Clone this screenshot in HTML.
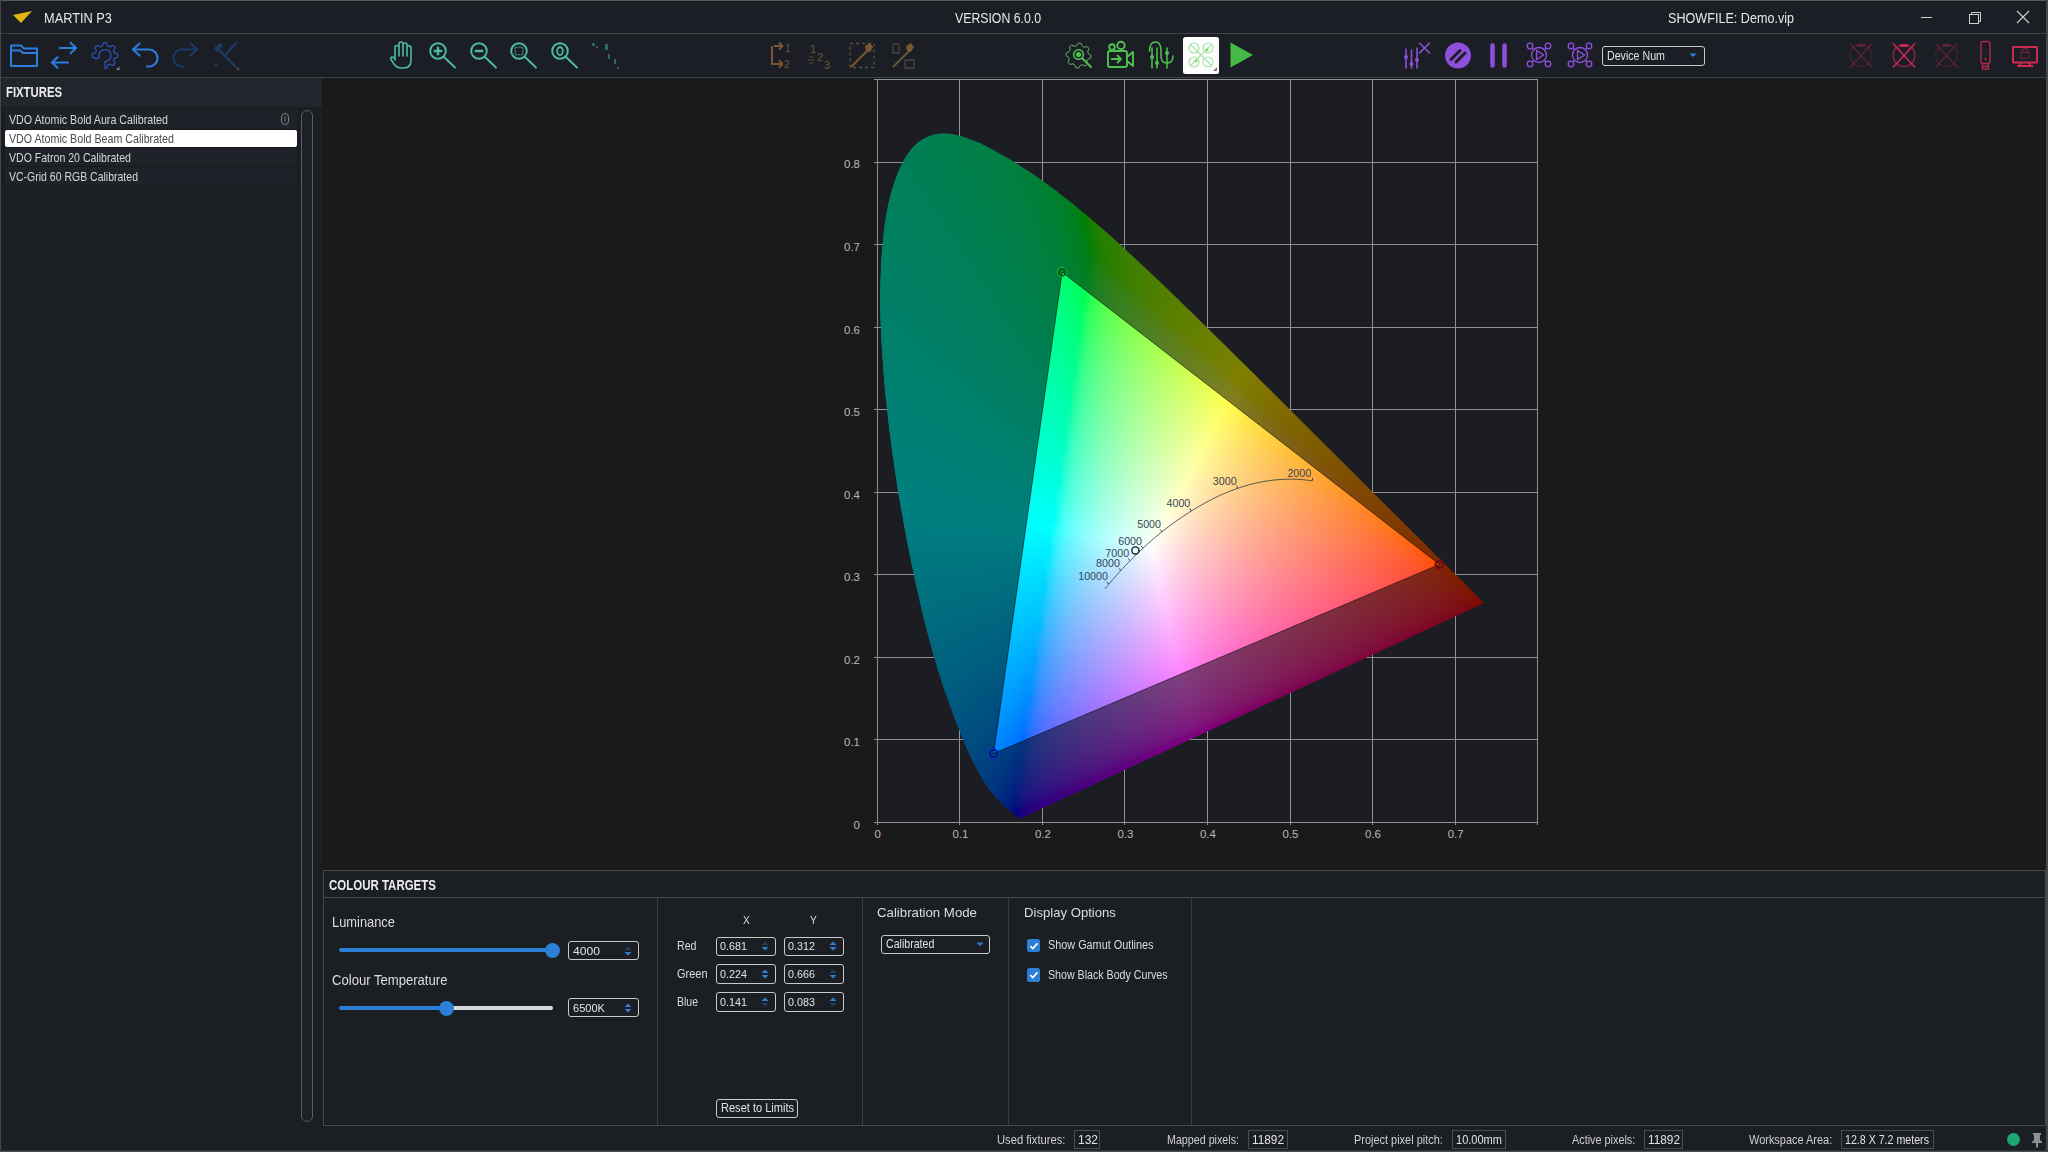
<!DOCTYPE html>
<html><head><meta charset="utf-8"><style>
html,body{margin:0;padding:0;width:2048px;height:1152px;overflow:hidden;background:#1b1e23}
.r,.t{position:absolute}
.fld{position:absolute;left:0;top:0;width:100%;height:100%}
.fld i{position:absolute;height:4px;display:block}
.t{font-family:"Liberation Sans",sans-serif;line-height:1;white-space:nowrap;transform-origin:0 0}
</style></head><body>
<div class="r" style="left:0px;top:0px;width:2048px;height:1152px;background:#1b1e23"></div>
<div class="r" style="left:0px;top:0px;width:2048px;height:1px;background:#55585d"></div>
<div class="r" style="left:0px;top:0px;width:1px;height:1152px;background:#45484d"></div>
<div class="r" style="left:2046px;top:0px;width:2px;height:1152px;background:#45484d"></div>
<div class="r" style="left:0px;top:1150px;width:2048px;height:1px;background:#2c2f36"></div>
<div class="r" style="left:0px;top:1151px;width:2048px;height:1px;background:#4a4d54"></div>
<div class="r" style="left:1px;top:1px;width:2045px;height:32px;background:#1b1e24"></div>
<div class="r" style="left:1px;top:33px;width:2045px;height:1px;background:#3e4146"></div>
<div class="r" style="left:1px;top:34px;width:2045px;height:43px;background:#1b1e24"></div>
<div class="r" style="left:1px;top:77px;width:2045px;height:1px;background:#3e4146"></div>
<svg class="r" style="left:12px;top:9px" width="22" height="16" viewBox="0 0 22 16"><path d="M1 6 L20 2 L9 14 Z" fill="#e3b416"/></svg>
<div class="t" style="left:44.0px;top:10.9px;font-size:14.29px;color:#e6e6e6;transform:scaleX(0.895);">MARTIN P3</div>
<div class="t" style="left:955.0px;top:10.9px;font-size:14.29px;color:#e6e6e6;transform:scaleX(0.860);">VERSION 6.0.0</div>
<div class="t" style="left:1668.0px;top:10.9px;font-size:14.29px;color:#e6e6e6;transform:scaleX(0.882);">SHOWFILE: Demo.vip</div>
<div class="r" style="left:1921px;top:17px;width:11px;height:1px;background:#d0d0d0"></div>
<svg class="r" style="left:1966px;top:9px" width="18" height="18" viewBox="0 0 18 18"><path d="M5.5 5.5V3.5H14.5V12.5H12.5" fill="none" stroke="#d0d0d0" stroke-width="1"/><rect x="3.5" y="5.5" width="9" height="9" fill="none" stroke="#d0d0d0" stroke-width="1"/></svg>
<svg class="r" style="left:2014px;top:8px" width="18" height="18" viewBox="0 0 18 18"><path d="M3 3L15 15M15 3L3 15" stroke="#d0d0d0" stroke-width="1.1"/></svg>
<svg class="r" style="left:0;top:0" width="2048" height="80"><g fill="none" stroke="#2b7de0" stroke-width="2" stroke-linejoin="round"><path d="M11 45.5H21L24 48.5H37V66H11Z"/><path d="M11 50.5H20L23 53H36"/></g><g fill="none" stroke="#2b7de0" stroke-width="2.2" stroke-linecap="round" stroke-linejoin="round"><path d="M60 48H76M70.5 42.8L76 48L70.5 53.2"/><path d="M68 62.5H52M57.5 57.3L52 62.5L57.5 67.7"/></g><path d="M95.79 58.85 L95.75 58.74 L95.71 58.62 L95.67 58.50 L95.63 58.38 L95.60 58.26 L95.53 58.15 L95.26 58.09 L95.00 58.03 L94.73 57.96 L94.47 57.88 L94.20 57.80 L93.94 57.71 L93.67 57.62 L93.41 57.51 L93.14 57.40 L92.88 57.29 L92.62 57.17 L92.36 57.04 L92.28 56.89 L92.26 56.73 L92.24 56.57 L92.23 56.40 L92.22 56.24 L92.21 56.08 L92.21 55.92 L92.20 55.76 L92.20 55.59 L92.20 55.43 L92.20 55.27 L92.21 55.11 L92.21 54.95 L92.22 54.79 L92.23 54.62 L92.24 54.46 L92.26 54.30 L92.27 54.14 L92.32 53.98 L92.58 53.85 L92.84 53.73 L93.10 53.61 L93.36 53.51 L93.63 53.40 L93.89 53.31 L94.15 53.21 L94.42 53.13 L94.69 53.05 L94.95 52.98 L95.22 52.92 L95.49 52.86 L95.59 52.76 L95.63 52.64 L95.66 52.52 L95.70 52.40 L95.74 52.29 L95.78 52.17 L95.83 52.05 L95.87 51.94 L95.92 51.82 L95.96 51.71 L96.01 51.59 L96.06 51.48 L96.11 51.37 L96.17 51.25 L96.22 51.14 L96.28 51.03 L96.34 50.92 L96.39 50.81 L96.44 50.70 L96.29 50.47 L96.15 50.23 L96.01 50.00 L95.88 49.75 L95.75 49.51 L95.62 49.26 L95.50 49.00 L95.39 48.74 L95.28 48.48 L95.17 48.21 L95.07 47.94 L94.98 47.67 L95.01 47.49 L95.12 47.37 L95.22 47.24 L95.33 47.12 L95.43 47.00 L95.54 46.88 L95.65 46.76 L95.76 46.64 L95.87 46.52 L95.99 46.41 L96.10 46.30 L96.22 46.18 L96.34 46.07 L96.46 45.97 L96.58 45.86 L96.70 45.75 L96.83 45.65 L96.95 45.55 L97.09 45.45 L97.36 45.54 L97.63 45.64 L97.90 45.74 L98.16 45.85 L98.42 45.97 L98.68 46.08 L98.93 46.21 L99.18 46.33 L99.42 46.47 L99.66 46.60 L99.90 46.75 L100.13 46.89 L100.28 46.91 L100.39 46.85 L100.50 46.80 L100.61 46.74 L100.72 46.68 L100.83 46.63 L100.94 46.58 L101.06 46.53 L101.17 46.48 L101.29 46.43 L101.40 46.39 L101.52 46.34 L101.63 46.30 L101.75 46.25 L101.87 46.21 L101.98 46.18 L102.10 46.14 L102.22 46.10 L102.34 46.07 L102.40 45.80 L102.46 45.54 L102.53 45.27 L102.61 45.00 L102.69 44.74 L102.78 44.47 L102.87 44.21 L102.97 43.94 L103.08 43.68 L103.19 43.42 L103.31 43.16 L103.44 42.90 L103.59 42.78 L103.75 42.76 L103.91 42.75 L104.07 42.73 L104.24 42.72 L104.40 42.71 L104.56 42.71 L104.72 42.70 L104.88 42.70 L105.04 42.70 L105.21 42.70 L105.37 42.71 L105.53 42.71 L105.69 42.72 L105.85 42.73 L106.02 42.74 L106.18 42.75 L106.34 42.77 L106.50 42.79 L106.63 43.04 L106.75 43.30 L106.87 43.56 L106.98 43.83 L107.08 44.09 L107.18 44.35 L107.27 44.62 L107.36 44.88 L107.44 45.15 L107.51 45.42 L107.58 45.68 L107.64 45.95 L107.73 46.09 L107.84 46.12 L107.96 46.16 L108.08 46.20 L108.20 46.24 L108.32 46.28 L108.43 46.32 L108.55 46.36 L108.66 46.41 L108.78 46.46 L108.89 46.51 L109.01 46.56 L109.12 46.61 L109.23 46.66 L109.34 46.71 L109.45 46.77 L109.56 46.83 L109.67 46.89 L109.78 46.95 L110.00 46.81 L110.23 46.67 L110.47 46.53 L110.71 46.39 L110.96 46.26 L111.21 46.14 L111.46 46.02 L111.72 45.90 L111.98 45.79 L112.25 45.69 L112.52 45.59 L112.79 45.49 L112.99 45.50 L113.12 45.60 L113.24 45.71 L113.36 45.81 L113.49 45.92 L113.61 46.03 L113.73 46.13 L113.84 46.25 L113.96 46.36 L114.07 46.47 L114.19 46.59 L114.30 46.71 L114.41 46.82 L114.52 46.94 L114.63 47.06 L114.73 47.19 L114.84 47.31 L114.94 47.44 L115.04 47.56 L114.97 47.82 L114.87 48.09 L114.77 48.36 L114.66 48.63 L114.55 48.89 L114.43 49.14 L114.31 49.40 L114.18 49.64 L114.05 49.89 L113.91 50.13 L113.77 50.36 L113.63 50.59 L113.58 50.76 L113.64 50.87 L113.70 50.98 L113.75 51.09 L113.81 51.20 L113.86 51.32 L113.91 51.43 L113.96 51.54 L114.01 51.66 L114.06 51.77 L114.11 51.88 L114.15 52.00 L114.20 52.12 L114.24 52.23 L114.28 52.35 L114.32 52.47 L114.36 52.59 L114.39 52.70 L114.43 52.82 L114.66 52.89 L114.93 52.95 L115.19 53.02 L115.46 53.09 L115.73 53.18 L115.99 53.26 L116.26 53.36 L116.52 53.46 L116.78 53.57 L117.05 53.68 L117.31 53.80 L117.57 53.92 L117.72 54.07 L117.74 54.23 L117.75 54.39 L117.76 54.55 L117.78 54.71 L117.78 54.87 L117.79 55.04 L117.80 55.20 L117.80 55.36 L117.80 55.52 L117.80 55.68 L117.80 55.85 L117.79 56.01 L117.78 56.17 L117.77 56.33 L117.76 56.49 L117.75 56.65 L117.73 56.82 L117.71 56.98 L117.50 57.11 L117.24 57.24 L116.97 57.35 L116.71 57.47 L116.45 57.57 L116.18 57.67 L115.92 57.76 L115.65 57.85 L115.39 57.93 L115.12 58.00 L114.85 58.07 L114.59 58.13 L114.42 58.21 L114.38 58.33 L114.35 58.45 L114.31 58.56 L114.27 58.68 L114.23 58.80 L114.19 58.92 L114.14 59.03 L114.10 59.15 L114.05 59.26 L114.00 59.38 L113.95 59.49 L113.90 59.60 L113.85 59.72 L113.79 59.83 L113.74 59.94 L113.68 60.05 L113.62 60.16 L113.56 60.27 L113.67 60.47 L113.81 60.70 L113.95 60.94 L114.09 61.18 L114.22 61.42 L114.34 61.67 L114.47 61.93 L114.58 62.18 L114.69 62.45 L114.80 62.71 L114.90 62.98 L115.00 63.25 L115.01 63.47 L114.91 63.60 L114.81 63.72 L114.70 63.85 L114.60 63.97 L114.49 64.09 L114.38 64.21 L114.27 64.33 L114.16 64.44 L114.04 64.56 L113.93 64.67 L113.81 64.78 L113.69 64.90 L113.57 65.00 L113.45 65.11 L113.33 65.22 L113.21 65.32 L113.08 65.43 L112.96 65.53 L112.72 65.48 L112.44 65.39 L112.17 65.28 L111.91 65.18 L111.65 65.07 L111.39 64.95 L111.14 64.83 L110.89 64.70 L110.65 64.57 L110.41 64.43 L110.17 64.29 L109.94 64.15 L109.75 64.07 L109.64 64.13 L109.53 64.19 L109.42 64.25 L109.31 64.30 L109.20 64.35 L109.09 64.41 L108.97 64.46 L108.86 64.51 L108.75 64.56 L108.63 64.60 L108.52 64.65 L108.40 64.69 L108.28 64.73 L108.17 64.77 L108.05 64.81 L107.93 64.85 L107.81 64.89 L107.69 64.92 L107.62 65.12 L107.56 65.39 L107.49 65.66 L107.42 65.92 L107.34 66.19 L107.25 66.45 L107.16 66.72 L107.06 66.98 L106.95 67.25 L106.84 67.51 L106.72 67.77 L106.59 68.03 L106.45 68.22 L106.29 68.23 L106.13 68.25 L105.97 68.26 L105.81 68.27 L105.65 68.28 L105.49 68.29 L105.32 68.30 L105.16 68.30 L105.00 68.30 L105.00 61.50 L105.08 61.50 L105.15 61.50 L105.23 61.50 L105.30 61.49 L105.38 61.49 L105.46 61.48 L105.53 61.48 L105.61 61.47 L105.68 61.46 L105.76 61.45 L105.83 61.44 L105.91 61.43 L105.98 61.42 L106.06 61.41 L106.13 61.39 L106.21 61.38 L106.28 61.36 L106.35 61.35 L106.43 61.33 L106.50 61.31 L106.58 61.29 L106.65 61.27 L106.72 61.25 L106.79 61.23 L106.87 61.20 L106.94 61.18 L107.01 61.15 L107.08 61.13 L107.15 61.10 L107.22 61.07 L107.29 61.04 L107.36 61.01 L107.43 60.98 L107.50 60.95 L107.57 60.92 L107.64 60.89 L107.71 60.85 L107.78 60.82 L107.84 60.78 L107.91 60.75 L107.98 60.71 L108.04 60.67 L108.11 60.63 L108.17 60.59 L108.23 60.55 L108.30 60.51 L108.36 60.47 L108.42 60.43 L108.49 60.38 L108.55 60.34 L108.61 60.29 L108.67 60.25 L108.73 60.20 L108.79 60.15 L108.85 60.10 L108.90 60.06 L108.96 60.01 L109.02 59.96 L109.07 59.90 L109.13 59.85 L109.18 59.80 L109.24 59.75 L109.29 59.69 L109.35 59.64 L109.40 59.58 L109.45 59.53 L109.50 59.47 L109.55 59.41 L109.60 59.35 L109.65 59.30 L109.69 59.24 L109.74 59.18 L109.79 59.12 L109.83 59.06 L109.88 58.99 L109.92 58.93 L109.96 58.87 L110.01 58.81 L110.05 58.74 L110.09 58.68 L110.13 58.61 L110.17 58.55 L110.21 58.48 L110.24 58.42 L110.28 58.35 L110.31 58.28 L110.35 58.22 L110.38 58.15 L110.42 58.08 L110.45 58.01 L110.48 57.94 L110.51 57.87 L110.54 57.80 L110.57 57.73 L110.60 57.66 L110.62 57.59 L110.65 57.52 L110.67 57.45 L110.70 57.38 L110.72 57.30 L110.74 57.23 L110.77 57.16 L110.79 57.09 L110.81 57.01 L110.82 56.94 L110.84 56.87 L110.86 56.79 L110.88 56.72 L110.89 56.64 L110.90 56.57 L110.92 56.49 L110.93 56.42 L110.94 56.34 L110.95 56.27 L110.96 56.19 L110.97 56.12 L110.98 56.04 L110.98 55.97 L110.99 55.89 L110.99 55.81 L111.00 55.74 L111.00 55.66 L111.00 55.59 L111.00 55.51 L111.00 55.43 L111.00 55.36 L111.00 55.28 L110.99 55.21 L110.99 55.13 L110.98 55.06 L110.98 54.98 L110.97 54.90 L110.96 54.83 L110.95 54.75 L110.94 54.68 L110.93 54.60 L110.92 54.53 L110.91 54.45 L110.89 54.38 L110.88 54.30 L110.86 54.23 L110.85 54.16 L110.83 54.08 L110.81 54.01 L110.79 53.93 L110.77 53.86 L110.75 53.79 L110.73 53.72 L110.71 53.64 L110.68 53.57 L110.66 53.50 L110.63 53.43 L110.60 53.36 L110.58 53.29 L110.55 53.22 L110.52 53.15 L110.49 53.08 L110.46 53.01 L110.43 52.94 L110.39 52.87 L110.36 52.80 L110.32 52.73 L110.29 52.67 L110.25 52.60 L110.22 52.53 L110.18 52.47 L110.14 52.40 L110.10 52.34 L110.06 52.27 L110.02 52.21 L109.98 52.15 L109.93 52.08 L109.89 52.02 L109.84 51.96 L109.80 51.90 L109.75 51.84 L109.71 51.78 L109.66 51.72 L109.61 51.66 L109.56 51.60 L109.51 51.55 L109.46 51.49 L109.41 51.43 L109.36 51.38 L109.31 51.32 L109.25 51.27 L109.20 51.21 L109.15 51.16 L109.09 51.11 L109.03 51.06 L108.98 51.01 L108.92 50.96 L108.86 50.91 L108.80 50.86 L108.75 50.81 L108.69 50.77 L108.63 50.72 L108.56 50.67 L108.50 50.63 L108.44 50.59 L108.38 50.54 L108.32 50.50 L108.25 50.46 L108.19 50.42 L108.12 50.38 L108.06 50.34 L107.99 50.30 L107.93 50.26 L107.86 50.23 L107.79 50.19 L107.73 50.16 L107.66 50.12 L107.59 50.09 L107.52 50.06 L107.45 50.02 L107.38 49.99 L107.31 49.96 L107.24 49.93 L107.17 49.91 L107.10 49.88 L107.03 49.85 L106.96 49.83 L106.89 49.80 L106.81 49.78 L106.74 49.76 L106.67 49.74 L106.60 49.72 L106.52 49.70 L106.45 49.68 L106.38 49.66 L106.30 49.64 L106.23 49.63 L106.15 49.61 L106.08 49.60 L106.00 49.58 L105.93 49.57 L105.85 49.56 L105.78 49.55 L105.70 49.54 L105.63 49.53 L105.55 49.53 L105.48 49.52 L105.40 49.51 L105.32 49.51 L105.25 49.51 L105.17 49.50 L105.10 49.50 L105.02 49.50 L104.95 49.50 L104.87 49.50 L104.79 49.50 L104.72 49.51 L104.64 49.51 L104.57 49.52 L104.49 49.52 L104.41 49.53 L104.34 49.54 L104.26 49.55 L104.19 49.56 L104.11 49.57 L104.04 49.58 L103.96 49.59 L103.89 49.60 L103.81 49.62 L103.74 49.63 L103.67 49.65 L103.59 49.67 L103.52 49.69 L103.44 49.71 L103.37 49.73 L103.30 49.75 L103.23 49.77 L103.15 49.79 L103.08 49.82 L103.01 49.84 L102.94 49.87 L102.87 49.89 L102.80 49.92 L102.73 49.95 L102.66 49.98 L102.59 50.01 L102.52 50.04 L102.45 50.07 L102.38 50.10 L102.31 50.14 L102.24 50.17 L102.18 50.21 L102.11 50.24 L102.04 50.28 L101.98 50.32 L101.91 50.36 L101.85 50.40 L101.78 50.44 L101.72 50.48 L101.66 50.52 L101.59 50.56 L101.53 50.60 L101.47 50.65 L101.41 50.69 L101.35 50.74 L101.29 50.79 L101.23 50.83 L101.17 50.88 L101.11 50.93 L101.05 50.98 L101.00 51.03 L100.94 51.08 L100.89 51.13 L100.83 51.19 L100.78 51.24 L100.72 51.29 L100.67 51.35 L100.62 51.40 L100.57 51.46 L100.51 51.51 L100.46 51.57 L100.42 51.63 L100.37 51.69 L100.32 51.75 L100.27 51.81 L100.23 51.87 L100.18 51.93 L100.14 51.99 L100.09 52.05 L100.05 52.11 L100.01 52.18 L99.96 52.24 L99.92 52.30 L99.88 52.37 L99.84 52.43 L99.81 52.50 L99.77 52.56 L99.73 52.63 L99.69 52.70 L99.66 52.76 L99.63 52.83 L99.59 52.90 L99.56 52.97 L99.53 53.04 L99.50 53.11 L99.47 53.18 L99.44 53.25 L99.41 53.32 L99.38 53.39 L99.36 53.46 L99.33 53.53 L99.31 53.60 L99.28 53.68 L99.26 53.75 L99.24 53.82 L99.22 53.89 L99.20 53.97 L99.18 54.04 L99.16 54.11 L99.15 54.19 L99.13 54.26 L99.11 54.34 L99.10 54.41 L99.09 54.49 L99.07 54.56 L99.06 54.64 L99.05 54.71 L99.04 54.79 L99.03 54.86 L99.03 54.94 L99.02 55.01 L99.01 55.09 L99.01 55.17 L99.01 55.24 L99.00 55.32 L99.00 55.39 L99.00 55.47 L99.00 55.54 L99.00 55.62 L99.00 55.70 L99.01 55.77 L99.01 55.85 L99.01 55.92 L99.02 56.00 L99.03 56.08 L99.04 56.15 L99.04 56.23 L99.05 56.30 L99.06 56.38 L99.08 56.45 L99.09 56.53 L99.10 56.60 L99.12 56.68 L99.13 56.75 L99.15 56.82 L99.17 56.90 L99.18 56.97 L99.20 57.05 L99.22 57.12 L99.24 57.19 L99.27 57.26 L99.29 57.34 L99.31 57.41 L99.34 57.48 L99.36 57.55Z" fill="none" stroke="#2d58bd" stroke-width="1.2" stroke-linejoin="round"/><path d="M116 70L119.5 66.5V70Z" fill="#8a8d92"/><g fill="none" stroke="#2b7de0" stroke-width="2.2" stroke-linecap="round" stroke-linejoin="round"><path d="M133 49.5H149A8.5 8.5 0 0 1 149 66.5H147"/><path d="M139.5 43.5L133 49.5L139.5 55.5"/></g><g fill="none" stroke="#1d3b68" stroke-width="2" stroke-linecap="round" stroke-linejoin="round"><path d="M197 49.5H182A8.5 8.5 0 0 0 182 66.5H184"/><path d="M190.5 43.5L197 49.5L190.5 55.5"/></g><g fill="none" stroke="#1d3b68" stroke-width="2.3" stroke-linecap="round"><path d="M216 47L236 67M236 43L225 55"/></g><path d="M214 49L220 43L223 46L217 52Z" fill="#1d3b68"/><circle cx="216" cy="65" r="1.5" fill="#1d3b68"/><path d="M236 70L239 67V70Z" fill="#55585d"/><g fill="none" stroke="#4cbba5" stroke-width="1.6" stroke-linecap="round" stroke-linejoin="round"><path d="M395 60V47.5Q395 45.5 397 45.5Q399 45.5 399 47.5V56M399 48V44Q399 42 401 42Q403 42 403 44V56M403 45Q403 43 405 43Q407 43 407 45V56M407 47.5Q407 45.8 409 45.8Q411 45.8 411 47.5V60Q411 68 403.5 68H401Q397 68 394 64L391 59.5Q390 57.5 392 57Q393.5 56.8 395 59"/></g><g fill="none" stroke="#4cbba5" stroke-width="1.9" stroke-linecap="round"><circle cx="438" cy="51" r="7.8"/><path d="M443.7 56.8L455 67.5"/></g><path d="M433.8 51H442.2M438 46.8V55.2" stroke="#4cbba5" stroke-width="2.4"/><g fill="none" stroke="#4cbba5" stroke-width="1.9" stroke-linecap="round"><circle cx="479" cy="51" r="7.8"/><path d="M484.7 56.8L496 67.5"/></g><path d="M474.8 51H483.2" stroke="#4cbba5" stroke-width="2.4"/><g fill="none" stroke="#4cbba5" stroke-width="1.9" stroke-linecap="round"><circle cx="519" cy="51" r="7.8"/><path d="M524.7 56.8L536 67.5"/></g><rect x="515.2" y="47.2" width="7.6" height="7.6" fill="none" stroke="#4cbba5" stroke-width="1" stroke-dasharray="1.6 1"/><g fill="none" stroke="#4cbba5" stroke-width="1.9" stroke-linecap="round"><circle cx="560" cy="51" r="7.8"/><path d="M565.7 56.8L577 67.5"/></g><ellipse cx="560" cy="51" rx="2.8" ry="4" fill="none" stroke="#4cbba5" stroke-width="1.8"/><g fill="#2a6a5c"><rect x="592" y="43" width="3" height="3"/><rect x="596" y="46" width="2" height="2"/><rect x="605" y="44" width="3" height="6"/><rect x="608" y="54" width="2" height="5"/><rect x="614" y="59" width="2" height="5"/><rect x="617" y="67" width="2" height="2"/></g><g fill="none" stroke="#7a5632" stroke-width="2" stroke-linejoin="round"><path d="M774 46H782M779 42.5L782.5 46L779 49.5"/><path d="M772 46V64H782M779 60.5L782.5 64L779 67.5"/></g><g fill="#6e5a3a"><text x="785" y="52" font-family="Liberation Sans" font-size="10">1</text><text x="784" y="68" font-family="Liberation Sans" font-size="10">2</text></g><g fill="#6e5a3a" font-family="Liberation Sans" font-size="11"><text x="810" y="53">1</text><text x="817" y="61">2</text><text x="824" y="69">3</text></g><path d="M809 57H814M808 60H814M809 63H813" stroke="#5a4a34" stroke-width="1"/><g fill="none" stroke="#5a5040" stroke-width="1.3" stroke-dasharray="3 3"><rect x="850" y="43.5" width="24" height="24"/></g><path d="M851 67L868 50" stroke="#7a5632" stroke-width="2"/><path d="M865 46L870 43L873 47L870 52L866 51Z" fill="#7a5632"/><path d="M893 67L910 50" stroke="#6a5a3a" stroke-width="1.8"/><path d="M906 46L911 43L914 47L911 52L907 51Z" fill="#7a5632"/><path d="M893 45Q896 42 899 45V53H893Z M905 60H914V68H905Z" fill="none" stroke="#4d4538" stroke-width="1.3"/><path d="M1078.50 43.00 L1080.94 43.24 L1082.33 46.26 L1084.06 47.19 L1087.34 46.66 L1088.89 48.56 L1087.74 51.67 L1088.31 53.55 L1091.00 55.50 L1090.76 57.94 L1087.74 59.33 L1086.81 61.06 L1087.34 64.34 L1085.44 65.89 L1082.33 64.74 L1080.45 65.31 L1078.50 68.00 L1076.06 67.76 L1074.67 64.74 L1072.94 63.81 L1069.66 64.34 L1068.11 62.44 L1069.26 59.33 L1068.69 57.45 L1066.00 55.50 L1066.24 53.06 L1069.26 51.67 L1070.19 49.94 L1069.66 46.66 L1071.56 45.11 L1074.67 46.26 L1076.55 45.69Z" fill="none" stroke="#6fcf6f" stroke-opacity="0.85" stroke-width="1"/><g stroke="#4ec24e" fill="none"><circle cx="1078.5" cy="54.5" r="4.8" stroke-width="1.6"/><path d="M1082 58L1091.5 67.5" stroke-width="2"/></g><circle cx="1078.5" cy="54.5" r="2.6" fill="#4ec24e"/><g fill="none" stroke="#4ec24e" stroke-width="1.9" stroke-linejoin="round"><circle cx="1112" cy="47" r="2.8"/><circle cx="1121" cy="45.5" r="3.7"/><rect x="1108" y="51" width="19" height="16" rx="2"/><path d="M1127 57L1133 52V66L1127 61"/><path d="M1111 59H1121M1117 55L1121 59L1117 63" stroke-width="1.8"/></g><g fill="none" stroke="#4ec24e" stroke-width="1.5" stroke-linecap="round"><path d="M1149.5 51Q1149.5 42 1155.5 42Q1161 42 1161 51V56Q1161 63 1167 63Q1173 63 1173 56"/><path d="M1152 48V68M1157 48V68M1167 48V68"/></g><g fill="#4ec24e"><circle cx="1152" cy="57" r="2"/><circle cx="1157" cy="63" r="2"/><circle cx="1167" cy="53" r="2"/></g><rect x="1183" y="37" width="36" height="37" rx="2.5" fill="#fdfdfd"/><g fill="none" stroke="#a8e6a8" stroke-width="1.2"><circle cx="1194" cy="48" r="5"/><circle cx="1208" cy="48" r="5"/><circle cx="1194" cy="62" r="5"/><circle cx="1208" cy="62" r="5"/><path d="M1190 44L1212 66M1212 44L1190 66"/></g><g fill="#7ad87a"><circle cx="1207" cy="50" r="1.5"/><circle cx="1196" cy="61" r="1.5"/></g><path d="M1213 71L1217 67V71Z" fill="#777"/><path d="M1230.5 42.5L1253 55L1230.5 67.5Z" fill="#45b945"/><g stroke="#8d4fdc" stroke-width="1.6" fill="none" stroke-linecap="round"><path d="M1406 49V68M1411.5 50V68M1417 48V68"/><path d="M1419.5 43L1429.5 53M1429.5 43L1419.5 53"/></g><g fill="#8d4fdc"><circle cx="1406" cy="57" r="2"/><circle cx="1411.5" cy="64" r="2"/><circle cx="1417" cy="60" r="2"/></g><circle cx="1458" cy="55.5" r="13" fill="#8d4fdc"/><path d="M1451 59.5L1460 50.5M1456 62L1465 53" stroke="#1b1e24" stroke-width="3" stroke-linecap="round"/><g stroke="#8d4fdc" stroke-width="4.5" stroke-linecap="round"><path d="M1492.5 45.5V65.5M1504.5 45.5V65.5"/></g><g fill="none" stroke="#8d4fdc" stroke-width="1.3"><circle cx="1530" cy="46" r="2.8"/><circle cx="1548" cy="46" r="2.8"/><circle cx="1530" cy="64" r="2.8"/><circle cx="1548" cy="64" r="2.8"/><circle cx="1539" cy="55" r="7.5"/><path d="M1532 48L1534 50M1546 48L1544 50M1532 62L1534 60M1546 62L1544 60"/><path d="M1536.5 50.5V59.5L1543.5 55Z"/></g><g fill="none" stroke="#8d4fdc" stroke-width="1.3"><circle cx="1571" cy="46" r="2.8"/><circle cx="1589" cy="46" r="2.8"/><circle cx="1571" cy="64" r="2.8"/><circle cx="1589" cy="64" r="2.8"/><circle cx="1580" cy="55" r="7.5"/><path d="M1573 48L1575 50M1587 48L1585 50M1573 62L1575 60M1587 62L1585 60"/><path d="M1577.5 50.5V59.5L1584.5 55Z"/></g><g fill="none" stroke="#d42a52" stroke-opacity="0.32"><circle cx="1861" cy="55.5" r="11" stroke-width="1.2" stroke-opacity="0.22399999999999998"/><path d="M1850 43.5L1872 67.5M1872 43.5L1850 67.5" stroke-width="1.8"/><rect x="1857" y="44" width="8" height="3" fill="#d42a52" fill-opacity="0.32" stroke="none"/></g><g fill="none" stroke="#d42a52" stroke-opacity="0.9"><circle cx="1904" cy="55.5" r="11" stroke-width="1.2" stroke-opacity="0.63"/><path d="M1893 43.5L1915 67.5M1915 43.5L1893 67.5" stroke-width="1.8"/><rect x="1900" y="44" width="8" height="3" fill="#d42a52" fill-opacity="0.9" stroke="none"/></g><g fill="none" stroke="#d42a52" stroke-opacity="0.3"><circle cx="1946.5" cy="55.5" r="11" stroke-width="1.2" stroke-opacity="0.21"/><path d="M1935.5 43.5L1957.5 67.5M1957.5 43.5L1935.5 67.5" stroke-width="1.8"/><rect x="1942.5" y="44" width="8" height="3" fill="#d42a52" fill-opacity="0.3" stroke="none"/></g><g fill="none" stroke="#d42a52" stroke-opacity="0.8" stroke-width="1.4"><rect x="1981" y="41.5" width="9" height="22" rx="2"/><path d="M1982.5 64V69H1988.5V64M1983 66.5H1988"/></g><circle cx="1985.5" cy="59" r="1" fill="#d42a52"/><g fill="none" stroke="#d42a52" stroke-width="1.9"><rect x="2013" y="47" width="24" height="15.5" rx="0.5"/><path d="M2021 62.5L2019.5 66H2030.5L2029 62.5M2017 66H2033"/></g><path d="M2022 52.5V51Q2022 48.5 2025 48.5Q2028 48.5 2028 51V52.5M2021 52.5H2029V58H2021Z" fill="none" stroke="#d42a52" stroke-opacity="0.5" stroke-width="1.1"/></svg>
<div class="r" style="left:1602px;top:46px;width:103px;height:19.5px;border:1.6px solid #c9cacc;border-radius:3px;box-sizing:border-box"></div>
<div class="t" style="left:1607.0px;top:49.6px;font-size:12.86px;color:#e2e2e2;transform:scaleX(0.828);">Device Num</div>
<svg class="r" style="left:1688px;top:51px" width="10" height="8" viewBox="0 0 10 8"><path d="M1.5 2.5H8.5L5 6Z" fill="#2f7fd6"/></svg>
<div class="r" style="left:1px;top:78px;width:321px;height:1047px;background:#1b1e23"></div>
<div class="r" style="left:2px;top:78px;width:320px;height:29px;background:#22262c"></div>
<div class="t" style="left:6.0px;top:84.9px;font-size:14.29px;color:#ececec;font-weight:bold;transform:scaleX(0.793);">FIXTURES</div>
<div class="r" style="left:5px;top:110px;width:292px;height:19px;background:#1f2329"></div>
<div class="t" style="left:9.0px;top:113.6px;font-size:12.29px;color:#d6d6d6;transform:scaleX(0.869);">VDO Atomic Bold Aura Calibrated</div>
<div class="r" style="left:5px;top:130px;width:292px;height:17px;background:#ffffff;border-radius:2px"></div>
<div class="t" style="left:9.0px;top:132.6px;font-size:12.29px;color:#4a4a4a;transform:scaleX(0.869);">VDO Atomic Bold Beam Calibrated</div>
<div class="r" style="left:5px;top:148px;width:292px;height:19px;background:#1f2329"></div>
<div class="t" style="left:9.0px;top:151.6px;font-size:12.29px;color:#d6d6d6;transform:scaleX(0.859);">VDO Fatron 20 Calibrated</div>
<div class="r" style="left:5px;top:167px;width:292px;height:19px;background:#1f2329"></div>
<div class="t" style="left:9.0px;top:170.6px;font-size:12.29px;color:#d6d6d6;transform:scaleX(0.855);">VC-Grid 60 RGB Calibrated</div>
<svg class="r" style="left:280px;top:112px" width="10" height="14" viewBox="0 0 10 14"><rect x="1.5" y="1.5" width="7" height="11" rx="3.5" fill="none" stroke="#7a7d82" stroke-width="1"/><path d="M5 4.5V9.5" stroke="#7a7d82" stroke-width="1"/></svg>
<div class="r" style="left:5px;top:129px;width:292px;height:1px;background:#15181d"></div>
<div class="r" style="left:5px;top:147px;width:292px;height:1px;background:#15181d"></div>
<div class="r" style="left:5px;top:166px;width:292px;height:1px;background:#15181d"></div>
<div class="r" style="left:5px;top:185px;width:292px;height:1px;background:#15181d"></div>
<div class="r" style="left:301px;top:110px;width:12px;height:1012px;border:1px solid #5a5d62;border-radius:7px;box-sizing:border-box;background:#1d2026"></div>
<div class="r" style="left:322px;top:78px;width:1724px;height:792px;background:#1a1a1a"></div>
<div class="r" style="left:877px;top:79px;width:661px;height:743px;background:#1b1d23"></div>
<svg class="r" style="left:0;top:0" width="2048" height="1152"><g stroke="#8f9195" stroke-width="1"><line x1="877.5" y1="79" x2="877.5" y2="825" /><line x1="959.5" y1="79" x2="959.5" y2="825" /><line x1="1042.5" y1="79" x2="1042.5" y2="825" /><line x1="1124.5" y1="79" x2="1124.5" y2="825" /><line x1="1207.5" y1="79" x2="1207.5" y2="825" /><line x1="1290.5" y1="79" x2="1290.5" y2="825" /><line x1="1372.5" y1="79" x2="1372.5" y2="825" /><line x1="1455.5" y1="79" x2="1455.5" y2="825" /><line x1="1537.5" y1="79" x2="1537.5" y2="825" /><line x1="874" y1="822.5" x2="1538" y2="822.5" /><line x1="874" y1="739.5" x2="1538" y2="739.5" /><line x1="874" y1="657.5" x2="1538" y2="657.5" /><line x1="874" y1="574.5" x2="1538" y2="574.5" /><line x1="874" y1="492.5" x2="1538" y2="492.5" /><line x1="874" y1="409.5" x2="1538" y2="409.5" /><line x1="874" y1="327.5" x2="1538" y2="327.5" /><line x1="874" y1="244.5" x2="1538" y2="244.5" /><line x1="874" y1="162.5" x2="1538" y2="162.5" /><line x1="874" y1="79.5" x2="1538" y2="79.5" /></g></svg>
<div class="r" style="left:870px;top:125px;width:620px;height:700px;clip-path:polygon(151.0px 692.9px,151.0px 692.9px,151.0px 692.9px,150.9px 692.9px,150.9px 692.9px,150.9px 692.9px,150.9px 692.9px,150.9px 692.9px,150.9px 692.9px,150.9px 692.9px,150.9px 692.9px,150.8px 692.9px,150.8px 692.9px,150.8px 692.9px,150.8px 692.9px,150.7px 692.9px,150.7px 693.0px,150.7px 693.0px,150.7px 693.0px,150.7px 693.0px,150.6px 693.0px,150.6px 693.0px,150.6px 693.0px,150.6px 693.0px,150.6px 693.0px,150.5px 693.0px,150.5px 693.0px,150.5px 693.0px,150.4px 693.0px,150.4px 693.0px,150.4px 693.0px,150.3px 693.0px,150.3px 693.0px,150.3px 693.0px,150.2px 693.0px,150.2px 693.0px,150.2px 693.0px,150.2px 693.0px,150.1px 693.0px,150.1px 693.0px,150.1px 693.0px,150.0px 693.0px,150.0px 693.0px,149.9px 693.0px,149.9px 693.0px,149.9px 693.0px,149.8px 693.0px,149.8px 693.0px,149.7px 693.0px,149.7px 693.0px,149.6px 693.0px,149.6px 693.0px,149.5px 693.1px,149.5px 693.1px,149.4px 693.1px,149.4px 693.0px,149.3px 693.0px,149.3px 693.0px,149.2px 693.0px,149.1px 693.0px,149.1px 692.9px,149.0px 692.9px,148.9px 692.9px,148.8px 692.8px,148.7px 692.8px,148.6px 692.7px,148.5px 692.7px,148.4px 692.6px,148.3px 692.5px,148.2px 692.5px,148.1px 692.4px,148.0px 692.3px,147.8px 692.2px,147.7px 692.1px,147.6px 692.0px,147.4px 691.9px,147.3px 691.8px,147.2px 691.7px,147.0px 691.6px,146.8px 691.4px,146.7px 691.3px,146.5px 691.2px,146.3px 691.0px,146.1px 690.8px,145.9px 690.7px,145.7px 690.5px,145.5px 690.3px,145.3px 690.1px,145.0px 689.9px,144.8px 689.7px,144.6px 689.5px,144.3px 689.2px,144.1px 689.0px,143.8px 688.8px,143.5px 688.5px,143.3px 688.3px,143.0px 688.0px,142.7px 687.7px,142.4px 687.5px,142.0px 687.2px,141.7px 686.9px,141.4px 686.6px,141.0px 686.3px,140.6px 686.0px,140.2px 685.6px,139.8px 685.3px,139.4px 684.9px,139.0px 684.5px,138.5px 684.1px,138.0px 683.7px,137.5px 683.3px,137.0px 682.8px,136.5px 682.4px,136.0px 681.9px,135.5px 681.5px,134.9px 681.0px,134.3px 680.5px,133.8px 680.0px,133.2px 679.4px,132.5px 678.9px,131.9px 678.3px,131.2px 677.6px,130.6px 677.0px,129.9px 676.3px,129.2px 675.6px,128.4px 674.9px,127.7px 674.2px,126.9px 673.3px,126.1px 672.5px,125.3px 671.6px,124.5px 670.7px,123.7px 669.8px,122.8px 668.8px,122.0px 667.8px,121.1px 666.7px,120.1px 665.4px,119.1px 664.1px,118.1px 662.6px,117.0px 661.0px,115.9px 659.4px,114.7px 657.6px,113.5px 655.8px,112.3px 653.8px,111.0px 651.6px,109.7px 649.3px,108.3px 646.8px,107.0px 644.3px,105.5px 641.6px,104.1px 638.8px,102.6px 635.7px,101.0px 632.5px,99.4px 629.1px,97.7px 625.3px,96.0px 621.4px,94.3px 617.3px,92.4px 613.0px,90.6px 608.4px,88.7px 603.6px,86.7px 598.5px,84.7px 593.2px,82.6px 587.5px,80.5px 581.5px,78.2px 575.2px,75.9px 568.7px,73.5px 561.9px,71.2px 554.8px,68.7px 547.3px,66.3px 539.5px,64.0px 531.3px,61.6px 522.8px,59.2px 513.8px,56.7px 504.6px,54.3px 495.0px,51.9px 485.0px,49.5px 474.8px,47.1px 464.3px,44.7px 453.5px,42.4px 442.3px,40.0px 430.7px,37.6px 418.7px,35.3px 406.5px,33.0px 394.1px,30.8px 381.5px,28.6px 368.9px,26.6px 356.3px,24.7px 343.6px,22.9px 330.7px,21.1px 317.6px,19.4px 304.4px,17.9px 291.2px,16.4px 278.1px,15.1px 265.2px,14.0px 252.6px,13.1px 240.1px,12.2px 227.6px,11.5px 215.2px,10.9px 202.9px,10.5px 190.9px,10.3px 179.1px,10.3px 167.6px,10.5px 156.5px,10.9px 145.6px,11.4px 134.9px,12.2px 124.4px,13.1px 114.3px,14.2px 104.4px,15.5px 95.0px,17.0px 86.1px,18.7px 77.7px,20.7px 69.8px,22.8px 62.2px,25.2px 55.1px,27.7px 48.4px,30.4px 42.2px,33.3px 36.5px,36.3px 31.3px,39.4px 26.7px,42.6px 22.7px,46.0px 19.3px,49.5px 16.5px,53.2px 14.1px,57.0px 12.2px,60.8px 10.7px,64.7px 9.6px,68.6px 8.7px,72.5px 8.2px,76.5px 8.3px,80.6px 8.8px,84.8px 9.7px,89.0px 10.8px,93.2px 12.1px,97.4px 13.5px,101.5px 15.0px,105.7px 16.5px,109.9px 18.3px,114.1px 20.3px,118.3px 22.5px,122.5px 24.7px,126.7px 27.1px,130.9px 29.4px,135.0px 31.7px,139.0px 34.1px,143.0px 36.5px,147.0px 38.9px,150.9px 41.4px,154.8px 43.9px,158.7px 46.5px,162.6px 49.1px,166.5px 51.8px,170.3px 54.5px,174.2px 57.2px,178.0px 60.0px,181.7px 62.8px,185.5px 65.6px,189.3px 68.5px,193.0px 71.4px,196.8px 74.3px,200.5px 77.3px,204.3px 80.3px,208.0px 83.4px,211.8px 86.5px,215.5px 89.6px,219.2px 92.7px,223.0px 95.9px,226.7px 99.1px,230.4px 102.3px,234.1px 105.6px,237.8px 108.8px,241.5px 112.1px,245.2px 115.4px,248.8px 118.8px,252.5px 122.1px,256.2px 125.5px,259.9px 128.9px,263.6px 132.3px,267.3px 135.7px,271.0px 139.2px,274.6px 142.6px,278.3px 146.1px,282.0px 149.6px,285.7px 153.1px,289.4px 156.6px,293.1px 160.1px,296.8px 163.6px,300.5px 167.2px,304.2px 170.8px,307.9px 174.3px,311.6px 177.9px,315.2px 181.5px,318.9px 185.1px,322.6px 188.6px,326.3px 192.2px,330.0px 195.9px,333.6px 199.5px,337.3px 203.1px,341.0px 206.7px,344.6px 210.3px,348.3px 213.9px,352.0px 217.5px,355.6px 221.1px,359.3px 224.7px,362.9px 228.3px,366.6px 231.9px,370.2px 235.5px,373.9px 239.1px,377.5px 242.7px,381.1px 246.3px,384.7px 249.8px,388.3px 253.4px,391.8px 257.0px,395.4px 260.5px,399.0px 264.1px,402.5px 267.6px,406.0px 271.1px,409.5px 274.6px,413.0px 278.1px,416.5px 281.6px,420.0px 285.0px,423.5px 288.5px,426.9px 291.9px,430.3px 295.3px,433.7px 298.7px,437.1px 302.1px,440.5px 305.4px,443.8px 308.8px,447.1px 312.1px,450.5px 315.4px,453.7px 318.7px,457.0px 321.9px,460.2px 325.1px,463.4px 328.3px,466.6px 331.5px,469.8px 334.6px,472.9px 337.7px,476.0px 340.8px,479.1px 343.8px,482.1px 346.8px,485.1px 349.8px,488.0px 352.8px,490.9px 355.7px,493.8px 358.6px,496.7px 361.4px,499.5px 364.2px,502.2px 367.0px,504.9px 369.7px,507.6px 372.3px,510.2px 374.9px,512.7px 377.4px,515.2px 379.9px,517.7px 382.4px,520.1px 384.8px,522.5px 387.2px,524.8px 389.5px,527.2px 391.8px,529.5px 394.1px,531.7px 396.3px,533.9px 398.6px,536.1px 400.7px,538.2px 402.8px,540.3px 404.9px,542.3px 406.9px,544.3px 408.9px,546.2px 410.8px,548.1px 412.6px,550.0px 414.5px,551.7px 416.2px,553.5px 417.9px,555.2px 419.6px,556.9px 421.3px,558.5px 422.9px,560.1px 424.5px,561.6px 426.0px,563.1px 427.5px,564.5px 428.9px,566.0px 430.4px,567.3px 431.7px,568.7px 433.1px,570.0px 434.4px,571.2px 435.7px,572.5px 436.9px,573.6px 438.1px,574.8px 439.2px,575.9px 440.3px,577.0px 441.4px,578.1px 442.5px,579.1px 443.5px,580.1px 444.5px,581.1px 445.5px,582.1px 446.4px,583.0px 447.3px,583.9px 448.2px,584.7px 449.1px,585.6px 449.9px,586.4px 450.8px,587.2px 451.6px,588.0px 452.3px,588.8px 453.1px,589.5px 453.8px,590.2px 454.6px,590.9px 455.3px,591.6px 456.0px,592.3px 456.6px,593.0px 457.3px,593.6px 458.0px,594.3px 458.6px,594.9px 459.2px,595.5px 459.8px,596.1px 460.4px,596.7px 461.0px,597.2px 461.6px,597.8px 462.1px,598.3px 462.6px,598.8px 463.2px,599.3px 463.7px,599.8px 464.2px,600.3px 464.7px,600.8px 465.1px,601.2px 465.6px,601.7px 466.0px,602.1px 466.4px,602.5px 466.8px,602.9px 467.2px,603.3px 467.6px,603.7px 468.0px,604.1px 468.3px,604.4px 468.7px,604.8px 469.0px,605.1px 469.3px,605.4px 469.7px,605.7px 470.0px,606.0px 470.3px,606.3px 470.5px,606.6px 470.8px,606.8px 471.1px,607.1px 471.3px,607.3px 471.6px,607.6px 471.8px,607.8px 472.1px,608.0px 472.3px,608.3px 472.5px,608.5px 472.7px,608.7px 472.9px,608.9px 473.1px,609.0px 473.3px,609.2px 473.5px,609.4px 473.6px,609.6px 473.8px,609.7px 474.0px,609.9px 474.1px,610.0px 474.3px,610.1px 474.4px,610.2px 474.5px,610.4px 474.6px,610.5px 474.7px,610.6px 474.8px,610.7px 474.9px,610.8px 475.0px,610.9px 475.1px,611.0px 475.2px,611.0px 475.3px,611.1px 475.4px,611.2px 475.5px,611.3px 475.6px,611.4px 475.7px,611.5px 475.8px,611.6px 475.9px,611.8px 476.0px,611.9px 476.2px,612.1px 476.3px,612.2px 476.5px,612.4px 476.6px,612.5px 476.8px,612.7px 476.9px,612.8px 477.1px,613.0px 477.2px,613.1px 477.4px,613.3px 477.5px,613.4px 477.7px,613.6px 477.8px,613.7px 477.9px,613.7px 478.0px)"><div class="fld" style="filter:blur(1.2px)"><i style="left:50px;top:8px;width:55px;background:linear-gradient(90deg,#00ffa5,#00ffa3,#00ffa1,#00ffa0,#00ff9e,#00ff9c,#00ff9a,#00ff97,#00ff95,#00ff93,#00ff90,#00ff8e)"></i><i style="left:40px;top:12px;width:75px;background:linear-gradient(90deg,#00ffa9,#00ffa7,#00ffa6,#00ffa4,#00ffa2,#00ffa0,#00ff9e,#00ff9c,#00ff9a,#00ff98,#00ff96,#00ff94,#00ff91,#00ff8f,#00ff8c,#00ff89)"></i><i style="left:35px;top:16px;width:90px;background:linear-gradient(90deg,#00ffab,#00ffaa,#00ffa8,#00ffa6,#00ffa5,#00ffa3,#00ffa1,#00ff9f,#00ff9d,#00ff9b,#00ff99,#00ff97,#00ff95,#00ff92,#00ff90,#00ff8d,#00ff8a,#00ff87,#00ff84)"></i><i style="left:30px;top:20px;width:100px;background:linear-gradient(90deg,#00ffad,#00ffac,#00ffaa,#00ffa9,#00ffa7,#00ffa6,#00ffa4,#00ffa2,#00ffa0,#00ff9e,#00ff9c,#00ff9a,#00ff98,#00ff95,#00ff93,#00ff90,#00ff8e,#00ff8b,#00ff88,#00ff85,#00ff82)"></i><i style="left:30px;top:24px;width:110px;background:linear-gradient(90deg,#00ffae,#00ffad,#00ffab,#00ffaa,#00ffa8,#00ffa6,#00ffa5,#00ffa3,#00ffa1,#00ff9f,#00ff9d,#00ff9b,#00ff99,#00ff96,#00ff94,#00ff91,#00ff8f,#00ff8c,#00ff89,#00ff86,#00ff83,#00ff7f,#00ff7b)"></i><i style="left:25px;top:28px;width:120px;background:linear-gradient(90deg,#00ffb0,#00ffaf,#00ffad,#00ffac,#00ffaa,#00ffa9,#00ffa7,#00ffa5,#00ffa4,#00ffa2,#00ffa0,#00ff9e,#00ff9c,#00ff99,#00ff97,#00ff95,#00ff92,#00ff90,#00ff8d,#00ff8a,#00ff87,#00ff84,#00ff80,#00ff7c,#00ff78)"></i><i style="left:25px;top:32px;width:125px;background:linear-gradient(90deg,#00ffb1,#00ffb0,#00ffae,#00ffad,#00ffab,#00ffaa,#00ffa8,#00ffa6,#00ffa4,#00ffa3,#00ffa1,#00ff9f,#00ff9d,#00ff9a,#00ff98,#00ff96,#00ff93,#00ff91,#00ff8e,#00ff8b,#00ff88,#00ff85,#00ff81,#00ff7e,#00ff7a,#00ff75)"></i><i style="left:20px;top:36px;width:140px;background:linear-gradient(90deg,#00ffb3,#00ffb2,#00ffb0,#00ffaf,#00ffad,#00ffac,#00ffaa,#00ffa9,#00ffa7,#00ffa5,#00ffa3,#00ffa1,#00ff9f,#00ff9d,#00ff9b,#00ff99,#00ff97,#00ff94,#00ff92,#00ff8f,#00ff8c,#00ff89,#00ff86,#00ff82,#00ff7f,#00ff7b,#00ff77,#00ff72,#00ff6d)"></i><i style="left:20px;top:40px;width:145px;background:linear-gradient(90deg,#00ffb4,#00ffb2,#00ffb1,#00ffb0,#00ffae,#00ffad,#00ffab,#00ffa9,#00ffa8,#00ffa6,#00ffa4,#00ffa2,#00ffa0,#00ff9e,#00ff9c,#00ff9a,#00ff98,#00ff95,#00ff93,#00ff90,#00ff8d,#00ff8a,#00ff87,#00ff83,#00ff80,#00ff7c,#00ff78,#00ff73,#00ff6f,#00ff69)"></i><i style="left:20px;top:44px;width:150px;background:linear-gradient(90deg,#00ffb4,#00ffb3,#00ffb2,#00ffb0,#00ffaf,#00ffad,#00ffac,#00ffaa,#00ffa9,#00ffa7,#00ffa5,#00ffa3,#00ffa1,#00ff9f,#00ff9d,#00ff9b,#00ff98,#00ff96,#00ff93,#00ff91,#00ff8e,#00ff8b,#00ff88,#00ff84,#00ff81,#00ff7d,#00ff79,#00ff75,#00ff70,#00ff6b,#00ff65)"></i><i style="left:15px;top:48px;width:160px;background:linear-gradient(90deg,#00ffb6,#00ffb5,#00ffb4,#00ffb3,#00ffb1,#00ffb0,#00ffae,#00ffad,#00ffab,#00ffa9,#00ffa8,#00ffa6,#00ffa4,#00ffa2,#00ffa0,#00ff9e,#00ff9c,#00ff99,#00ff97,#00ff94,#00ff92,#00ff8f,#00ff8c,#00ff89,#00ff86,#00ff82,#00ff7e,#00ff7a,#00ff76,#00ff71,#00ff6c,#00ff66,#00ff60)"></i><i style="left:15px;top:52px;width:165px;background:linear-gradient(90deg,#00ffb7,#00ffb6,#00ffb5,#00ffb3,#00ffb2,#00ffb0,#00ffaf,#00ffad,#00ffac,#00ffaa,#00ffa8,#00ffa7,#00ffa5,#00ffa3,#00ffa1,#00ff9f,#00ff9d,#00ff9a,#00ff98,#00ff95,#00ff93,#00ff90,#00ff8d,#00ff8a,#00ff87,#00ff83,#00ff7f,#00ff7b,#00ff77,#00ff72,#00ff6d,#00ff68,#00ff62,#00ff5b)"></i><i style="left:15px;top:56px;width:175px;background:linear-gradient(90deg,#00ffb8,#00ffb7,#00ffb5,#00ffb4,#00ffb3,#00ffb1,#00ffb0,#00ffae,#00ffad,#00ffab,#00ffa9,#00ffa8,#00ffa6,#00ffa4,#00ffa2,#00ffa0,#00ff9e,#00ff9b,#00ff99,#00ff96,#00ff94,#00ff91,#00ff8e,#00ff8b,#00ff88,#00ff84,#00ff81,#00ff7d,#00ff78,#00ff74,#00ff6f,#00ff69,#00ff63,#00ff5c,#00ff54,#00ff4b)"></i><i style="left:10px;top:60px;width:185px;background:linear-gradient(90deg,#00ffba,#00ffb9,#00ffb7,#00ffb6,#00ffb5,#00ffb3,#00ffb2,#00ffb1,#00ffaf,#00ffad,#00ffac,#00ffaa,#00ffa8,#00ffa7,#00ffa5,#00ffa3,#00ffa1,#00ff9e,#00ff9c,#00ff9a,#00ff97,#00ff95,#00ff92,#00ff8f,#00ff8c,#00ff89,#00ff85,#00ff82,#00ff7e,#00ff7a,#00ff75,#00ff70,#00ff6b,#00ff65,#00ff5e,#00ff56,#00ff4d,#00ff43)"></i><i style="left:10px;top:64px;width:190px;background:linear-gradient(90deg,#00ffbb,#00ffb9,#00ffb8,#00ffb7,#00ffb6,#00ffb4,#00ffb3,#00ffb1,#00ffb0,#00ffae,#00ffad,#00ffab,#00ffa9,#00ffa7,#00ffa6,#00ffa4,#00ffa2,#00ff9f,#00ff9d,#00ff9b,#00ff98,#00ff96,#00ff93,#00ff90,#00ff8d,#00ff8a,#00ff86,#00ff83,#00ff7f,#00ff7b,#00ff76,#00ff71,#00ff6c,#00ff66,#00ff5f,#00ff58,#00ff4f,#00ff45,#00ff38)"></i><i style="left:10px;top:68px;width:195px;background:linear-gradient(90deg,#00ffbb,#00ffba,#00ffb9,#00ffb8,#00ffb6,#00ffb5,#00ffb4,#00ffb2,#00ffb1,#00ffaf,#00ffad,#00ffac,#00ffaa,#00ffa8,#00ffa6,#00ffa4,#00ffa2,#00ffa0,#00ff9e,#00ff9c,#00ff99,#00ff97,#00ff94,#00ff91,#00ff8e,#00ff8b,#00ff88,#00ff84,#00ff80,#00ff7c,#00ff78,#00ff73,#00ff6d,#00ff68,#00ff61,#00ff5a,#00ff51,#00ff47,#00ff3b,#00ff29)"></i><i style="left:10px;top:72px;width:200px;background:linear-gradient(90deg,#00ffbc,#00ffbb,#00ffba,#00ffb8,#00ffb7,#00ffb6,#00ffb4,#00ffb3,#00ffb1,#00ffb0,#00ffae,#00ffad,#00ffab,#00ffa9,#00ffa7,#00ffa5,#00ffa3,#00ffa1,#00ff9f,#00ff9d,#00ff9a,#00ff98,#00ff95,#00ff92,#00ff8f,#00ff8c,#00ff89,#00ff85,#00ff81,#00ff7d,#00ff79,#00ff74,#00ff6f,#00ff69,#00ff63,#00ff5b,#00ff53,#00ff49,#00ff3d,#00ff2d,#00ff0d)"></i><i style="left:10px;top:76px;width:205px;background:linear-gradient(90deg,#00ffbd,#00ffbc,#00ffba,#00ffb9,#00ffb8,#00ffb7,#00ffb5,#00ffb4,#00ffb2,#00ffb1,#00ffaf,#00ffae,#00ffac,#00ffaa,#00ffa8,#00ffa6,#00ffa4,#00ffa2,#00ffa0,#00ff9e,#00ff9b,#00ff99,#00ff96,#00ff93,#00ff90,#00ff8d,#00ff8a,#00ff86,#00ff83,#00ff7f,#00ff7a,#00ff75,#00ff70,#00ff6b,#00ff64,#00ff5d,#00ff55,#00ff4c,#00ff40,#00ff30,#00ff16,#21ff00)"></i><i style="left:5px;top:80px;width:215px;background:linear-gradient(90deg,#00ffbf,#00ffbe,#00ffbc,#00ffbb,#00ffba,#00ffb9,#00ffb7,#00ffb6,#00ffb5,#00ffb3,#00ffb2,#00ffb0,#00ffae,#00ffad,#00ffab,#00ffa9,#00ffa7,#00ffa5,#00ffa3,#00ffa1,#00ff9f,#00ff9c,#00ff9a,#00ff97,#00ff94,#00ff91,#00ff8e,#00ff8b,#00ff88,#00ff84,#00ff80,#00ff7b,#00ff77,#00ff72,#00ff6c,#00ff66,#00ff5f,#00ff57,#00ff4e,#00ff42,#00ff34,#00ff1c,#1cff00,#34ff00)"></i><i style="left:5px;top:84px;width:220px;background:linear-gradient(90deg,#00ffbf,#00ffbe,#00ffbd,#00ffbc,#00ffbb,#00ffb9,#00ffb8,#00ffb7,#00ffb5,#00ffb4,#00ffb2,#00ffb1,#00ffaf,#00ffae,#00ffac,#00ffaa,#00ffa8,#00ffa6,#00ffa4,#00ffa2,#00ffa0,#00ff9d,#00ff9b,#00ff98,#00ff95,#00ff93,#00ff8f,#00ff8c,#00ff89,#00ff85,#00ff81,#00ff7d,#00ff78,#00ff73,#00ff6e,#00ff67,#00ff61,#00ff59,#00ff50,#00ff45,#00ff37,#00ff21,#15ff00,#31ff00,#42ff00)"></i><i style="left:5px;top:88px;width:225px;background:linear-gradient(90deg,#00ffc0,#00ffbf,#00ffbe,#00ffbd,#00ffbb,#00ffba,#00ffb9,#00ffb8,#00ffb6,#00ffb5,#00ffb3,#00ffb2,#00ffb0,#00ffae,#00ffad,#00ffab,#00ffa9,#00ffa7,#00ffa5,#00ffa3,#00ffa1,#00ff9e,#00ff9c,#00ff99,#00ff96,#00ff94,#00ff91,#00ff8d,#00ff8a,#00ff86,#00ff82,#00ff7e,#00ff79,#00ff74,#00ff6f,#00ff69,#00ff62,#00ff5b,#00ff52,#00ff47,#00ff3a,#00ff26,#0cff00,#2eff00,#40ff00,#4dff00)"></i><i style="left:5px;top:92px;width:230px;background:linear-gradient(90deg,#00ffc1,#00ffc0,#00ffbf,#00ffbd,#00ffbc,#00ffbb,#00ffba,#00ffb8,#00ffb7,#00ffb6,#00ffb4,#00ffb3,#00ffb1,#00ffaf,#00ffae,#00ffac,#00ffaa,#00ffa8,#00ffa6,#00ffa4,#00ffa2,#00ff9f,#00ff9d,#00ff9a,#00ff98,#00ff95,#00ff92,#00ff8e,#00ff8b,#00ff87,#00ff84,#00ff7f,#00ff7b,#00ff76,#00ff71,#00ff6b,#00ff64,#00ff5c,#00ff54,#00ff49,#00ff3c,#00ff2a,#00ff00,#2bff00,#3eff00,#4bff00,#57ff00)"></i><i style="left:5px;top:96px;width:235px;background:linear-gradient(90deg,#00ffc2,#00ffc0,#00ffbf,#00ffbe,#00ffbd,#00ffbc,#00ffba,#00ffb9,#00ffb8,#00ffb6,#00ffb5,#00ffb3,#00ffb2,#00ffb0,#00ffae,#00ffad,#00ffab,#00ffa9,#00ffa7,#00ffa5,#00ffa3,#00ffa0,#00ff9e,#00ff9b,#00ff99,#00ff96,#00ff93,#00ff90,#00ff8c,#00ff89,#00ff85,#00ff81,#00ff7c,#00ff77,#00ff72,#00ff6c,#00ff66,#00ff5e,#00ff56,#00ff4c,#00ff3f,#00ff2e,#00ff0d,#27ff00,#3bff00,#4aff00,#55ff00,#5fff00)"></i><i style="left:5px;top:100px;width:235px;background:linear-gradient(90deg,#00ffc2,#00ffc1,#00ffc0,#00ffbf,#00ffbe,#00ffbd,#00ffbb,#00ffba,#00ffb9,#00ffb7,#00ffb6,#00ffb4,#00ffb3,#00ffb1,#00ffaf,#00ffae,#00ffac,#00ffaa,#00ffa8,#00ffa6,#00ffa4,#00ffa1,#00ff9f,#00ff9c,#00ff9a,#00ff97,#00ff94,#00ff91,#00ff8d,#00ff8a,#00ff86,#00ff82,#00ff7e,#00ff79,#00ff73,#00ff6e,#00ff67,#00ff60,#00ff58,#00ff4e,#00ff42,#00ff32,#00ff16,#22ff00,#39ff00,#48ff00,#54ff00,#5eff00)"></i><i style="left:5px;top:104px;width:240px;background:linear-gradient(90deg,#00ffc3,#00ffc2,#00ffc1,#00ffc0,#00ffbf,#00ffbd,#00ffbc,#00ffbb,#00ffb9,#00ffb8,#00ffb7,#00ffb5,#00ffb4,#00ffb2,#00ffb0,#00ffae,#00ffad,#00ffab,#00ffa9,#00ffa7,#00ffa5,#00ffa2,#00ffa0,#00ff9d,#00ff9b,#00ff98,#00ff95,#00ff92,#00ff8f,#00ff8b,#00ff87,#00ff83,#00ff7f,#00ff7a,#00ff75,#00ff6f,#00ff69,#00ff62,#00ff5a,#00ff50,#00ff45,#00ff35,#00ff1d,#1dff00,#36ff00,#46ff00,#53ff00,#5dff00,#67ff00)"></i><i style="left:5px;top:108px;width:245px;background:linear-gradient(90deg,#00ffc4,#00ffc3,#00ffc2,#00ffc1,#00ffbf,#00ffbe,#00ffbd,#00ffbc,#00ffba,#00ffb9,#00ffb7,#00ffb6,#00ffb4,#00ffb3,#00ffb1,#00ffaf,#00ffae,#00ffac,#00ffaa,#00ffa8,#00ffa6,#00ffa3,#00ffa1,#00ff9e,#00ff9c,#00ff99,#00ff96,#00ff93,#00ff90,#00ff8c,#00ff89,#00ff85,#00ff80,#00ff7c,#00ff76,#00ff71,#00ff6b,#00ff64,#00ff5c,#00ff52,#00ff47,#00ff39,#00ff22,#17ff00,#33ff00,#44ff00,#51ff00,#5cff00,#66ff00,#6eff00)"></i><i style="left:5px;top:112px;width:250px;background:linear-gradient(90deg,#00ffc5,#00ffc4,#00ffc2,#00ffc1,#00ffc0,#00ffbf,#00ffbe,#00ffbc,#00ffbb,#00ffba,#00ffb8,#00ffb7,#00ffb5,#00ffb4,#00ffb2,#00ffb0,#00ffaf,#00ffad,#00ffab,#00ffa9,#00ffa7,#00ffa4,#00ffa2,#00ffa0,#00ff9d,#00ff9a,#00ff97,#00ff94,#00ff91,#00ff8e,#00ff8a,#00ff86,#00ff82,#00ff7d,#00ff78,#00ff72,#00ff6c,#00ff65,#00ff5e,#00ff54,#00ff4a,#00ff3c,#00ff27,#0eff00,#30ff00,#42ff00,#50ff00,#5bff00,#65ff00,#6dff00,#75ff00)"></i><i style="left:5px;top:116px;width:255px;background:linear-gradient(90deg,#00ffc5,#00ffc4,#00ffc3,#00ffc2,#00ffc1,#00ffc0,#00ffbf,#00ffbd,#00ffbc,#00ffbb,#00ffb9,#00ffb8,#00ffb6,#00ffb5,#00ffb3,#00ffb1,#00ffaf,#00ffae,#00ffac,#00ffaa,#00ffa8,#00ffa5,#00ffa3,#00ffa1,#00ff9e,#00ff9b,#00ff98,#00ff95,#00ff92,#00ff8f,#00ff8b,#00ff87,#00ff83,#00ff7e,#00ff79,#00ff74,#00ff6e,#00ff67,#00ff5f,#00ff57,#00ff4c,#00ff3f,#00ff2c,#01ff00,#2dff00,#40ff00,#4eff00,#5aff00,#64ff00,#6dff00,#75ff00,#7cff00)"></i><i style="left:0px;top:120px;width:265px;background:linear-gradient(90deg,#00ffc7,#00ffc6,#00ffc5,#00ffc4,#00ffc3,#00ffc2,#00ffc1,#00ffbf,#00ffbe,#00ffbd,#00ffbb,#00ffba,#00ffb9,#00ffb7,#00ffb5,#00ffb4,#00ffb2,#00ffb0,#00ffaf,#00ffad,#00ffab,#00ffa9,#00ffa6,#00ffa4,#00ffa2,#00ff9f,#00ff9c,#00ff9a,#00ff97,#00ff93,#00ff90,#00ff8c,#00ff88,#00ff84,#00ff80,#00ff7b,#00ff75,#00ff6f,#00ff69,#00ff61,#00ff59,#00ff4e,#00ff41,#00ff30,#00ff0d,#29ff00,#3eff00,#4dff00,#59ff00,#63ff00,#6cff00,#74ff00,#7cff00,#82ff00)"></i><i style="left:0px;top:124px;width:270px;background:linear-gradient(90deg,#00ffc8,#00ffc7,#00ffc6,#00ffc5,#00ffc4,#00ffc3,#00ffc1,#00ffc0,#00ffbf,#00ffbe,#00ffbc,#00ffbb,#00ffb9,#00ffb8,#00ffb6,#00ffb5,#00ffb3,#00ffb1,#00ffb0,#00ffae,#00ffac,#00ffaa,#00ffa7,#00ffa5,#00ffa3,#00ffa0,#00ff9e,#00ff9b,#00ff98,#00ff95,#00ff91,#00ff8e,#00ff8a,#00ff86,#00ff81,#00ff7c,#00ff77,#00ff71,#00ff6b,#00ff63,#00ff5b,#00ff51,#00ff44,#00ff34,#00ff17,#24ff00,#3bff00,#4bff00,#57ff00,#62ff00,#6bff00,#74ff00,#7bff00,#82ff00,#89ff00)"></i><i style="left:0px;top:128px;width:275px;background:linear-gradient(90deg,#00ffc9,#00ffc8,#00ffc7,#00ffc6,#00ffc4,#00ffc3,#00ffc2,#00ffc1,#00ffc0,#00ffbe,#00ffbd,#00ffbc,#00ffba,#00ffb9,#00ffb7,#00ffb6,#00ffb4,#00ffb2,#00ffb1,#00ffaf,#00ffad,#00ffab,#00ffa8,#00ffa6,#00ffa4,#00ffa1,#00ff9f,#00ff9c,#00ff99,#00ff96,#00ff92,#00ff8f,#00ff8b,#00ff87,#00ff83,#00ff7e,#00ff79,#00ff73,#00ff6c,#00ff65,#00ff5d,#00ff53,#00ff47,#00ff37,#00ff1e,#1fff00,#39ff00,#49ff00,#56ff00,#61ff00,#6bff00,#73ff00,#7bff00,#82ff00,#88ff00,#8fff00)"></i><i style="left:0px;top:132px;width:280px;background:linear-gradient(90deg,#00ffc9,#00ffc8,#00ffc7,#00ffc6,#00ffc5,#00ffc4,#00ffc3,#00ffc2,#00ffc1,#00ffbf,#00ffbe,#00ffbd,#00ffbb,#00ffba,#00ffb8,#00ffb7,#00ffb5,#00ffb3,#00ffb1,#00ffb0,#00ffae,#00ffac,#00ffa9,#00ffa7,#00ffa5,#00ffa2,#00ffa0,#00ff9d,#00ff9a,#00ff97,#00ff94,#00ff90,#00ff8c,#00ff88,#00ff84,#00ff7f,#00ff7a,#00ff74,#00ff6e,#00ff67,#00ff5f,#00ff55,#00ff4a,#00ff3b,#00ff24,#22ff12,#36ff00,#47ff00,#55ff00,#60ff00,#6aff00,#72ff00,#7aff00,#82ff00,#88ff00,#8fff00,#94ff00)"></i><i style="left:0px;top:136px;width:280px;background:linear-gradient(90deg,#00ffca,#00ffc9,#00ffc8,#00ffc7,#00ffc6,#00ffc5,#00ffc4,#00ffc3,#00ffc1,#00ffc0,#00ffbf,#00ffbd,#00ffbc,#00ffbb,#00ffb9,#00ffb8,#00ffb6,#00ffb4,#00ffb2,#00ffb1,#00ffaf,#00ffad,#00ffab,#00ffa8,#00ffa6,#00ffa4,#00ffa1,#00ff9e,#00ff9b,#00ff98,#00ff95,#00ff92,#00ff8e,#00ff8a,#00ff85,#00ff81,#00ff7c,#00ff76,#00ff70,#00ff69,#00ff61,#00ff57,#00ff4c,#00ff3e,#00ff29,#25ff1e,#37ff11,#45ff00,#53ff00,#5fff00,#69ff00,#72ff00,#7aff00,#81ff00,#88ff00,#8eff00,#94ff00)"></i><i style="left:0px;top:140px;width:285px;background:linear-gradient(90deg,#00ffcb,#00ffca,#00ffc9,#00ffc8,#00ffc7,#00ffc6,#00ffc5,#00ffc3,#00ffc2,#00ffc1,#00ffc0,#00ffbe,#00ffbd,#00ffbc,#00ffba,#00ffb8,#00ffb7,#00ffb5,#00ffb3,#00ffb2,#00ffb0,#00ffae,#00ffac,#00ffa9,#00ffa7,#00ffa5,#00ffa2,#00ff9f,#00ff9d,#00ff99,#00ff96,#00ff93,#00ff8f,#00ff8b,#00ff87,#00ff82,#00ff7d,#00ff78,#00ff71,#00ff6b,#00ff63,#00ff5a,#00ff4f,#00ff41,#02ff2e,#27ff26,#39ff1d,#46ff0f,#52ff00,#5eff00,#68ff00,#71ff00,#79ff00,#81ff00,#88ff00,#8eff00,#94ff00,#9aff00)"></i><i style="left:0px;top:144px;width:290px;background:linear-gradient(90deg,#00ffcc,#00ffcb,#00ffca,#00ffc9,#00ffc8,#00ffc7,#00ffc5,#00ffc4,#00ffc3,#00ffc2,#00ffc1,#00ffbf,#00ffbe,#00ffbc,#00ffbb,#00ffb9,#00ffb8,#00ffb6,#00ffb4,#00ffb3,#00ffb1,#00ffaf,#00ffad,#00ffaa,#00ffa8,#00ffa6,#00ffa3,#00ffa1,#00ff9e,#00ff9b,#00ff98,#00ff94,#00ff90,#00ff8d,#00ff88,#00ff84,#00ff7f,#00ff79,#00ff73,#00ff6c,#00ff65,#00ff5c,#00ff51,#00ff44,#09ff34,#2aff2d,#3bff26,#47ff1c,#52ff0d,#5dff00,#67ff00,#70ff00,#79ff00,#80ff00,#88ff00,#8eff00,#94ff00,#9aff00,#a0ff00)"></i><i style="left:0px;top:148px;width:295px;background:linear-gradient(90deg,#00ffcc,#00ffcb,#00ffcb,#00ffca,#00ffc8,#00ffc7,#00ffc6,#00ffc5,#00ffc4,#00ffc3,#00ffc1,#00ffc0,#00ffbf,#00ffbd,#00ffbc,#00ffba,#00ffb9,#00ffb7,#00ffb5,#00ffb4,#00ffb2,#00ffb0,#00ffae,#00ffac,#00ffa9,#00ffa7,#00ffa4,#00ffa2,#00ff9f,#00ff9c,#00ff99,#00ff95,#00ff92,#00ff8e,#00ff8a,#00ff85,#00ff80,#00ff7b,#00ff75,#00ff6e,#00ff67,#00ff5e,#00ff54,#00ff47,#10ff39,#2cff34,#3cff2d,#49ff25,#53ff1b,#5cff0a,#66ff00,#70ff00,#78ff00,#80ff00,#87ff00,#8eff00,#94ff00,#9aff00,#a0ff00,#a5ff00)"></i><i style="left:0px;top:152px;width:300px;background:linear-gradient(90deg,#00ffcd,#00ffcc,#00ffcb,#00ffca,#00ffc9,#00ffc8,#00ffc7,#00ffc6,#00ffc5,#00ffc4,#00ffc2,#00ffc1,#00ffc0,#00ffbe,#00ffbd,#00ffbb,#00ffba,#00ffb8,#00ffb6,#00ffb5,#00ffb3,#00ffb1,#00ffaf,#00ffad,#00ffaa,#00ffa8,#00ffa6,#00ffa3,#00ffa0,#00ff9d,#00ff9a,#00ff97,#00ff93,#00ff8f,#00ff8b,#00ff87,#00ff82,#00ff7d,#00ff77,#00ff70,#00ff69,#00ff60,#00ff56,#00ff4a,#15ff3e,#2eff39,#3eff33,#4aff2c,#55ff24,#5eff1a,#66ff07,#6fff00,#78ff00,#80ff00,#87ff00,#8eff00,#94ff00,#9aff00,#a0ff00,#a5ff00,#abff00)"></i><i style="left:0px;top:156px;width:305px;background:linear-gradient(90deg,#00ffce,#00ffcd,#00ffcc,#00ffcb,#00ffca,#00ffc9,#00ffc8,#00ffc7,#00ffc6,#00ffc4,#00ffc3,#00ffc2,#00ffc1,#00ffbf,#00ffbe,#00ffbc,#00ffbb,#00ffb9,#00ffb7,#00ffb6,#00ffb4,#00ffb2,#00ffb0,#00ffae,#00ffac,#00ffa9,#00ffa7,#00ffa4,#00ffa1,#00ff9e,#00ff9b,#00ff98,#00ff95,#00ff91,#00ff8d,#00ff88,#00ff83,#00ff7e,#00ff78,#00ff72,#00ff6b,#00ff62,#00ff58,#00ff4c,#19ff43,#31ff3e,#40ff39,#4cff33,#56ff2c,#5fff24,#67ff18,#6fff04,#77ff00,#7fff00,#87ff00,#8eff00,#94ff00,#9aff00,#a0ff00,#a6ff00,#abff00,#b0ff00)"></i><i style="left:0px;top:160px;width:305px;background:linear-gradient(90deg,#00ffcf,#00ffce,#00ffcd,#00ffcc,#00ffcb,#00ffca,#00ffc9,#00ffc8,#00ffc7,#00ffc5,#00ffc4,#00ffc3,#00ffc2,#00ffc0,#00ffbf,#00ffbd,#00ffbc,#00ffba,#00ffb8,#00ffb7,#00ffb5,#00ffb3,#00ffb1,#00ffaf,#00ffad,#00ffaa,#00ffa8,#00ffa5,#00ffa3,#00ffa0,#00ff9d,#00ff99,#00ff96,#00ff92,#00ff8e,#00ff8a,#00ff85,#00ff80,#00ff7a,#00ff74,#00ff6d,#00ff64,#00ff5b,#00ff4f,#1dff47,#33ff43,#41ff3e,#4dff38,#57ff32,#60ff2b,#68ff23,#70ff17,#77ff01,#7fff00,#87ff00,#8eff00,#94ff00,#9aff00,#a0ff00,#a6ff00,#abff00,#b0ff00)"></i><i style="left:0px;top:164px;width:310px;background:linear-gradient(90deg,#00ffd0,#00ffcf,#00ffce,#00ffcd,#00ffcc,#00ffcb,#00ffca,#00ffc9,#00ffc7,#00ffc6,#00ffc5,#00ffc4,#00ffc2,#00ffc1,#00ffc0,#00ffbe,#00ffbd,#00ffbb,#00ffb9,#00ffb8,#00ffb6,#00ffb4,#00ffb2,#00ffb0,#00ffae,#00ffab,#00ffa9,#00ffa7,#00ffa4,#00ffa1,#00ff9e,#00ff9b,#00ff97,#00ff94,#00ff90,#00ff8b,#00ff87,#00ff81,#00ff7c,#00ff75,#00ff6e,#00ff66,#00ff5d,#00ff52,#20ff4b,#35ff47,#43ff43,#4fff3e,#59ff38,#62ff32,#6aff2b,#71ff22,#78ff15,#7eff00,#86ff00,#8dff00,#94ff00,#9aff00,#a0ff00,#a6ff00,#abff00,#b1ff00,#b5ff00)"></i><i style="left:0px;top:168px;width:315px;background:linear-gradient(90deg,#00ffd0,#00ffcf,#00ffcf,#00ffce,#00ffcd,#00ffcc,#00ffcb,#00ffc9,#00ffc8,#00ffc7,#00ffc6,#00ffc5,#00ffc3,#00ffc2,#00ffc1,#00ffbf,#00ffbe,#00ffbc,#00ffba,#00ffb9,#00ffb7,#00ffb5,#00ffb3,#00ffb1,#00ffaf,#00ffad,#00ffaa,#00ffa8,#00ffa5,#00ffa2,#00ff9f,#00ff9c,#00ff99,#00ff95,#00ff91,#00ff8d,#00ff88,#00ff83,#00ff7d,#00ff77,#00ff70,#00ff69,#00ff5f,#00ff54,#23ff4f,#37ff4b,#45ff47,#50ff42,#5aff3d,#63ff38,#6bff32,#72ff2a,#79ff21,#80ff14,#86ff00,#8dff00,#94ff00,#9aff00,#a1ff00,#a6ff00,#acff00,#b1ff00,#b6ff00,#bbff00)"></i><i style="left:0px;top:172px;width:320px;background:linear-gradient(90deg,#00ffd1,#00ffd0,#00ffcf,#00ffce,#00ffcd,#00ffcc,#00ffcb,#00ffca,#00ffc9,#00ffc8,#00ffc7,#00ffc6,#00ffc4,#00ffc3,#00ffc2,#00ffc0,#00ffbf,#00ffbd,#00ffbc,#00ffba,#00ffb8,#00ffb6,#00ffb4,#00ffb2,#00ffb0,#00ffae,#00ffab,#00ffa9,#00ffa6,#00ffa4,#00ffa1,#00ff9d,#00ff9a,#00ff96,#00ff92,#00ff8e,#00ff8a,#00ff85,#00ff7f,#00ff79,#00ff72,#00ff6b,#00ff62,#00ff57,#26ff53,#39ff4f,#46ff4b,#52ff47,#5bff42,#64ff3d,#6cff38,#73ff31,#7aff2a,#81ff20,#87ff12,#8dff00,#94ff00,#9bff00,#a1ff00,#a6ff00,#acff00,#b1ff00,#b6ff00,#bbff00,#c0ff00)"></i><i style="left:0px;top:176px;width:325px;background:linear-gradient(90deg,#00ffd2,#00ffd1,#00ffd0,#00ffcf,#00ffce,#00ffcd,#00ffcc,#00ffcb,#00ffca,#00ffc9,#00ffc8,#00ffc7,#00ffc5,#00ffc4,#00ffc3,#00ffc1,#00ffc0,#00ffbe,#00ffbd,#00ffbb,#00ffb9,#00ffb7,#00ffb5,#00ffb3,#00ffb1,#00ffaf,#00ffad,#00ffaa,#00ffa8,#00ffa5,#00ffa2,#00ff9f,#00ff9b,#00ff98,#00ff94,#00ff90,#00ff8b,#00ff86,#00ff81,#00ff7b,#00ff74,#00ff6d,#00ff64,#02ff5a,#29ff56,#3bff53,#48ff4f,#53ff4b,#5dff47,#65ff42,#6dff3d,#75ff37,#7bff31,#82ff29,#88ff1f,#8eff10,#94ff00,#9bff00,#a1ff00,#a7ff00,#acff00,#b2ff00,#b7ff00,#bcff00,#c0ff00,#c5ff00)"></i><i style="left:0px;top:180px;width:330px;background:linear-gradient(90deg,#00ffd3,#00ffd2,#00ffd1,#00ffd0,#00ffcf,#00ffce,#00ffcd,#00ffcc,#00ffcb,#00ffca,#00ffc9,#00ffc7,#00ffc6,#00ffc5,#00ffc4,#00ffc2,#00ffc1,#00ffbf,#00ffbe,#00ffbc,#00ffba,#00ffb8,#00ffb6,#00ffb4,#00ffb2,#00ffb0,#00ffae,#00ffab,#00ffa9,#00ffa6,#00ffa3,#00ffa0,#00ff9d,#00ff99,#00ff95,#00ff91,#00ff8d,#00ff88,#00ff83,#00ff7d,#00ff76,#00ff6f,#00ff66,#09ff5d,#2bff5a,#3dff57,#4aff53,#55ff4f,#5eff4b,#67ff47,#6fff42,#76ff3d,#7dff37,#83ff30,#89ff28,#8fff1e,#95ff0e,#9bff00,#a1ff00,#a7ff00,#adff00,#b2ff00,#b7ff00,#bcff00,#c1ff00,#c5ff00,#caff00)"></i><i style="left:0px;top:184px;width:330px;background:linear-gradient(90deg,#00ffd4,#00ffd3,#00ffd2,#00ffd1,#00ffd0,#00ffcf,#00ffce,#00ffcd,#00ffcc,#00ffcb,#00ffca,#00ffc8,#00ffc7,#00ffc6,#00ffc5,#00ffc3,#00ffc2,#00ffc0,#00ffbf,#00ffbd,#00ffbb,#00ffb9,#00ffb8,#00ffb6,#00ffb4,#00ffb1,#00ffaf,#00ffad,#00ffaa,#00ffa7,#00ffa5,#00ffa1,#00ff9e,#00ff9b,#00ff97,#00ff93,#00ff8e,#00ff8a,#00ff84,#00ff7f,#00ff78,#00ff71,#00ff68,#10ff60,#2eff5d,#3eff5a,#4bff57,#56ff53,#60ff4f,#68ff4b,#70ff47,#77ff42,#7eff3d,#84ff37,#8aff30,#90ff27,#96ff1d,#9bff0b,#a1ff00,#a7ff00,#adff00,#b2ff00,#b8ff00,#bdff00,#c1ff00,#c6ff00,#caff00)"></i><i style="left:0px;top:188px;width:335px;background:linear-gradient(90deg,#00ffd4,#00ffd4,#00ffd3,#00ffd2,#00ffd1,#00ffd0,#00ffcf,#00ffce,#00ffcd,#00ffcc,#00ffcb,#00ffc9,#00ffc8,#00ffc7,#00ffc6,#00ffc4,#00ffc3,#00ffc1,#00ffc0,#00ffbe,#00ffbc,#00ffbb,#00ffb9,#00ffb7,#00ffb5,#00ffb3,#00ffb0,#00ffae,#00ffab,#00ffa9,#00ffa6,#00ffa3,#00ffa0,#00ff9c,#00ff98,#00ff94,#00ff90,#00ff8b,#00ff86,#00ff80,#00ff7a,#00ff73,#00ff6b,#15ff64,#30ff61,#40ff5e,#4dff5a,#58ff57,#61ff53,#69ff4f,#71ff4b,#78ff47,#7fff42,#85ff3c,#8cff36,#91ff2f,#97ff27,#9cff1b,#a2ff08,#a7ff00,#adff00,#b3ff00,#b8ff00,#bdff00,#c2ff00,#c7ff00,#cbff00,#d0ff00)"></i><i style="left:0px;top:192px;width:340px;background:linear-gradient(90deg,#00ffd5,#00ffd4,#00ffd4,#00ffd3,#00ffd2,#00ffd1,#00ffd0,#00ffcf,#00ffce,#00ffcd,#00ffcb,#00ffca,#00ffc9,#00ffc8,#00ffc7,#00ffc5,#00ffc4,#00ffc2,#00ffc1,#00ffbf,#00ffbd,#00ffbc,#00ffba,#00ffb8,#00ffb6,#00ffb4,#00ffb2,#00ffaf,#00ffad,#00ffaa,#00ffa7,#00ffa4,#00ffa1,#00ff9e,#00ff9a,#00ff96,#00ff92,#00ff8d,#00ff88,#00ff82,#00ff7c,#00ff75,#00ff6d,#1aff67,#32ff64,#42ff61,#4eff5e,#59ff5a,#62ff57,#6bff53,#72ff4f,#7aff4b,#80ff47,#87ff42,#8dff3c,#93ff36,#98ff2f,#9eff26,#a3ff1a,#a8ff05,#aeff00,#b3ff00,#b9ff00,#beff00,#c3ff00,#c7ff00,#ccff00,#d0ff00,#d5ff00)"></i><i style="left:0px;top:196px;width:345px;background:linear-gradient(90deg,#00ffd6,#00ffd5,#00ffd4,#00ffd3,#00ffd3,#00ffd2,#00ffd1,#00ffd0,#00ffcf,#00ffce,#00ffcc,#00ffcb,#00ffca,#00ffc9,#00ffc8,#00ffc6,#00ffc5,#00ffc3,#00ffc2,#00ffc0,#00ffbf,#00ffbd,#00ffbb,#00ffb9,#00ffb7,#00ffb5,#00ffb3,#00ffb0,#00ffae,#00ffab,#00ffa9,#00ffa6,#00ffa2,#00ff9f,#00ff9b,#00ff97,#00ff93,#00ff8f,#00ff8a,#00ff84,#00ff7e,#00ff77,#00ff6f,#1eff6a,#35ff67,#44ff64,#50ff61,#5aff5e,#64ff5b,#6cff57,#74ff53,#7bff4f,#82ff4b,#88ff47,#8eff42,#94ff3c,#99ff36,#9fff2e,#a4ff25,#a9ff19,#aeff01,#b4ff00,#b9ff00,#beff00,#c3ff00,#c8ff00,#cdff00,#d1ff00,#d5ff00,#daff00)"></i><i style="left:0px;top:200px;width:350px;background:linear-gradient(90deg,#00ffd7,#00ffd6,#00ffd5,#00ffd4,#00ffd3,#00ffd2,#00ffd2,#00ffd1,#00ffd0,#00ffce,#00ffcd,#00ffcc,#00ffcb,#00ffca,#00ffc9,#00ffc7,#00ffc6,#00ffc4,#00ffc3,#00ffc1,#00ffc0,#00ffbe,#00ffbc,#00ffba,#00ffb8,#00ffb6,#00ffb4,#00ffb2,#00ffaf,#00ffad,#00ffaa,#00ffa7,#00ffa4,#00ffa1,#00ff9d,#00ff99,#00ff95,#00ff90,#00ff8b,#00ff86,#00ff80,#00ff79,#00ff71,#21ff6d,#37ff6a,#46ff67,#52ff64,#5cff61,#65ff5e,#6dff5b,#75ff57,#7cff54,#83ff50,#89ff4b,#8fff47,#95ff41,#9bff3c,#a0ff35,#a5ff2e,#aaff24,#afff17,#b4ff00,#baff00,#bfff00,#c4ff00,#c9ff00,#cdff00,#d2ff00,#d6ff00,#daff00,#dfff00)"></i><i style="left:0px;top:204px;width:350px;background:linear-gradient(90deg,#00ffd8,#00ffd7,#00ffd6,#00ffd5,#00ffd4,#00ffd3,#00ffd2,#00ffd1,#00ffd0,#00ffcf,#00ffce,#00ffcd,#00ffcc,#00ffcb,#00ffca,#00ffc8,#00ffc7,#00ffc5,#00ffc4,#00ffc2,#00ffc1,#00ffbf,#00ffbd,#00ffbb,#00ffb9,#00ffb7,#00ffb5,#00ffb3,#00ffb1,#00ffae,#00ffab,#00ffa8,#00ffa5,#00ffa2,#00ff9e,#00ff9b,#00ff96,#00ff92,#00ff8d,#00ff88,#00ff82,#00ff7b,#00ff73,#24ff70,#39ff6d,#47ff6a,#53ff68,#5dff65,#66ff62,#6fff5e,#76ff5b,#7dff57,#84ff54,#8aff50,#90ff4b,#96ff46,#9cff41,#a1ff3b,#a6ff35,#acff2d,#b1ff23,#b5ff15,#baff00,#c0ff00,#c5ff00,#caff00,#ceff00,#d3ff00,#d7ff00,#dbff00,#e0ff00)"></i><i style="left:0px;top:208px;width:355px;background:linear-gradient(90deg,#00ffd9,#00ffd8,#00ffd7,#00ffd6,#00ffd5,#00ffd4,#00ffd3,#00ffd2,#00ffd1,#00ffd0,#00ffcf,#00ffce,#00ffcd,#00ffcc,#00ffcb,#00ffc9,#00ffc8,#00ffc6,#00ffc5,#00ffc4,#00ffc2,#00ffc0,#00ffbe,#00ffbd,#00ffbb,#00ffb9,#00ffb7,#00ffb4,#00ffb2,#00ffaf,#00ffad,#00ffaa,#00ffa7,#00ffa3,#00ffa0,#00ff9c,#00ff98,#00ff94,#00ff8f,#00ff8a,#00ff84,#00ff7d,#00ff76,#27ff73,#3bff70,#49ff6e,#55ff6b,#5fff68,#68ff65,#70ff62,#77ff5f,#7fff5b,#85ff58,#8cff54,#92ff50,#97ff4b,#9dff46,#a2ff41,#a8ff3b,#adff34,#b2ff2c,#b7ff22,#bbff14,#c0ff00,#c5ff00,#caff00,#cfff00,#d4ff00,#d8ff00,#dcff00,#e1ff00,#e5ff00)"></i><i style="left:0px;top:212px;width:360px;background:linear-gradient(90deg,#00ffd9,#00ffd9,#00ffd8,#00ffd7,#00ffd6,#00ffd5,#00ffd4,#00ffd3,#00ffd2,#00ffd1,#00ffd0,#00ffcf,#00ffce,#00ffcd,#00ffcc,#00ffca,#00ffc9,#00ffc8,#00ffc6,#00ffc5,#00ffc3,#00ffc1,#00ffc0,#00ffbe,#00ffbc,#00ffba,#00ffb8,#00ffb6,#00ffb3,#00ffb1,#00ffae,#00ffab,#00ffa8,#00ffa5,#00ffa2,#00ff9e,#00ff9a,#00ff95,#00ff91,#00ff8b,#00ff86,#00ff7f,#01ff78,#2aff75,#3dff73,#4bff71,#56ff6e,#60ff6b,#69ff68,#71ff65,#79ff62,#80ff5f,#87ff5b,#8dff58,#93ff54,#99ff50,#9eff4b,#a4ff46,#a9ff41,#aeff3b,#b3ff34,#b8ff2c,#bdff21,#c1ff11,#c6ff00,#cbff00,#d0ff00,#d5ff00,#d9ff00,#ddff00,#e2ff00,#e6ff00,#eaff00)"></i><i style="left:0px;top:216px;width:365px;background:linear-gradient(90deg,#00ffda,#00ffd9,#00ffd9,#00ffd8,#00ffd7,#00ffd6,#00ffd5,#00ffd4,#00ffd3,#00ffd2,#00ffd1,#00ffd0,#00ffcf,#00ffce,#00ffcd,#00ffcb,#00ffca,#00ffc9,#00ffc7,#00ffc6,#00ffc4,#00ffc3,#00ffc1,#00ffbf,#00ffbd,#00ffbb,#00ffb9,#00ffb7,#00ffb5,#00ffb2,#00ffaf,#00ffad,#00ffaa,#00ffa7,#00ffa3,#00ff9f,#00ff9b,#00ff97,#00ff92,#00ff8d,#00ff88,#00ff81,#0aff7b,#2dff78,#3fff76,#4cff74,#58ff71,#62ff6e,#6aff6c,#73ff69,#7aff66,#81ff63,#88ff5f,#8eff5c,#94ff58,#9aff54,#a0ff50,#a5ff4b,#aaff46,#afff41,#b4ff3b,#b9ff33,#beff2b,#c3ff20,#c7ff0f,#ccff00,#d1ff00,#d6ff00,#daff00,#deff00,#e3ff00,#e7ff00,#ebff00,#efff00)"></i><i style="left:0px;top:220px;width:370px;background:linear-gradient(90deg,#00ffdb,#00ffda,#00ffda,#00ffd9,#00ffd8,#00ffd7,#00ffd6,#00ffd5,#00ffd4,#00ffd3,#00ffd2,#00ffd1,#00ffd0,#00ffcf,#00ffce,#00ffcc,#00ffcb,#00ffca,#00ffc8,#00ffc7,#00ffc5,#00ffc4,#00ffc2,#00ffc0,#00ffbe,#00ffbc,#00ffba,#00ffb8,#00ffb6,#00ffb3,#00ffb1,#00ffae,#00ffab,#00ffa8,#00ffa5,#00ffa1,#00ff9d,#00ff99,#00ff94,#00ff8f,#00ff89,#00ff83,#11ff7d,#2fff7b,#41ff79,#4eff76,#59ff74,#63ff71,#6cff6f,#74ff6c,#7bff69,#82ff66,#89ff63,#8fff5f,#95ff5c,#9bff58,#a1ff54,#a6ff50,#acff4b,#b1ff46,#b6ff41,#bbff3a,#bfff33,#c4ff2a,#c9ff1f,#cdff0c,#d2ff00,#d7ff00,#dbff00,#e0ff00,#e4ff00,#e8ff00,#ecff00,#f0ff00,#f4ff00)"></i><i style="left:0px;top:224px;width:375px;background:linear-gradient(90deg,#00ffdc,#00ffdb,#00ffda,#00ffda,#00ffd9,#00ffd8,#00ffd7,#00ffd6,#00ffd5,#00ffd4,#00ffd3,#00ffd2,#00ffd1,#00ffd0,#00ffcf,#00ffcd,#00ffcc,#00ffcb,#00ffc9,#00ffc8,#00ffc6,#00ffc5,#00ffc3,#00ffc1,#00ffc0,#00ffbe,#00ffbc,#00ffba,#00ffb7,#00ffb5,#00ffb2,#00ffb0,#00ffad,#00ffaa,#00ffa6,#00ffa3,#00ff9f,#00ff9b,#00ff96,#00ff91,#00ff8b,#00ff85,#16ff80,#32ff7e,#43ff7c,#50ff79,#5bff77,#64ff74,#6dff72,#75ff6f,#7dff6c,#84ff69,#8aff66,#91ff63,#97ff60,#9dff5c,#a2ff58,#a8ff54,#adff50,#b2ff4b,#b7ff46,#bcff40,#c1ff3a,#c5ff33,#caff2a,#ceff1e,#d3ff09,#d8ff00,#dcff00,#e1ff00,#e5ff00,#e9ff00,#edff00,#f1ff00,#f5ff00,#f9ff00)"></i><i style="left:0px;top:228px;width:375px;background:linear-gradient(90deg,#00ffdd,#00ffdc,#00ffdb,#00ffda,#00ffda,#00ffd9,#00ffd8,#00ffd7,#00ffd6,#00ffd5,#00ffd4,#00ffd3,#00ffd2,#00ffd1,#00ffd0,#00ffcf,#00ffcd,#00ffcc,#00ffcb,#00ffc9,#00ffc8,#00ffc6,#00ffc4,#00ffc3,#00ffc1,#00ffbf,#00ffbd,#00ffbb,#00ffb9,#00ffb6,#00ffb4,#00ffb1,#00ffae,#00ffab,#00ffa8,#00ffa4,#00ffa0,#00ff9c,#00ff98,#00ff93,#00ff8d,#00ff87,#1bff83,#34ff81,#45ff7e,#51ff7c,#5cff7a,#66ff77,#6fff75,#77ff72,#7eff70,#85ff6d,#8cff6a,#92ff67,#98ff63,#9eff60,#a3ff5c,#a9ff59,#aeff54,#b3ff50,#b8ff4b,#bdff46,#c2ff40,#c7ff3a,#cbff32,#d0ff29,#d4ff1c,#d9ff05,#ddff00,#e2ff00,#e6ff00,#eaff00,#efff00,#f3ff00,#f6ff00,#faff00)"></i><i style="left:5px;top:232px;width:375px;background:linear-gradient(90deg,#00ffdd,#00ffdc,#00ffdb,#00ffdb,#00ffda,#00ffd9,#00ffd8,#00ffd7,#00ffd6,#00ffd5,#00ffd4,#00ffd3,#00ffd2,#00ffd1,#00ffd0,#00ffce,#00ffcd,#00ffcc,#00ffca,#00ffc9,#00ffc7,#00ffc6,#00ffc4,#00ffc2,#00ffc0,#00ffbe,#00ffbc,#00ffba,#00ffb8,#00ffb5,#00ffb3,#00ffb0,#00ffad,#00ffa9,#00ffa6,#00ffa2,#00ff9e,#00ff9a,#00ff95,#00ff8f,#00ff89,#1fff85,#37ff83,#46ff81,#53ff7f,#5eff7d,#67ff7a,#70ff78,#78ff75,#7fff73,#86ff70,#8dff6d,#93ff6a,#99ff67,#9fff64,#a5ff60,#aaff5d,#b0ff59,#b5ff55,#baff50,#bfff4b,#c3ff46,#c8ff40,#cdff39,#d1ff32,#d6ff28,#daff1b,#deff01,#e3ff00,#e7ff00,#ecff00,#f0ff00,#f4ff00,#f8ff00,#fcff00,#ffff00)"></i><i style="left:5px;top:236px;width:380px;background:linear-gradient(90deg,#00ffde,#00ffdd,#00ffdc,#00ffdb,#00ffdb,#00ffda,#00ffd9,#00ffd8,#00ffd7,#00ffd6,#00ffd5,#00ffd4,#00ffd3,#00ffd2,#00ffd1,#00ffcf,#00ffce,#00ffcd,#00ffcb,#00ffca,#00ffc8,#00ffc7,#00ffc5,#00ffc3,#00ffc2,#00ffc0,#00ffbe,#00ffbb,#00ffb9,#00ffb7,#00ffb4,#00ffb1,#00ffae,#00ffab,#00ffa8,#00ffa4,#00ffa0,#00ff9b,#00ff97,#00ff91,#00ff8b,#23ff88,#39ff86,#48ff84,#55ff82,#5fff80,#69ff7d,#71ff7b,#79ff79,#81ff76,#88ff73,#8eff71,#95ff6e,#9bff6b,#a0ff67,#a6ff64,#acff61,#b1ff5d,#b6ff59,#bbff55,#c0ff50,#c5ff4b,#c9ff46,#ceff40,#d3ff39,#d7ff31,#dcff27,#e0ff19,#e4ff00,#e9ff00,#edff00,#f1ff00,#f5ff00,#f9ff00,#fdff00,#fffd00,#fffa00)"></i><i style="left:5px;top:240px;width:385px;background:linear-gradient(90deg,#00ffdf,#00ffde,#00ffdd,#00ffdc,#00ffdc,#00ffdb,#00ffda,#00ffd9,#00ffd8,#00ffd7,#00ffd6,#00ffd5,#00ffd4,#00ffd3,#00ffd2,#00ffd1,#00ffcf,#00ffce,#00ffcd,#00ffcb,#00ffca,#00ffc8,#00ffc6,#00ffc5,#00ffc3,#00ffc1,#00ffbf,#00ffbd,#00ffba,#00ffb8,#00ffb5,#00ffb3,#00ffb0,#00ffad,#00ffa9,#00ffa6,#00ffa2,#00ff9d,#00ff99,#00ff93,#00ff8e,#26ff8b,#3bff89,#4aff87,#56ff85,#61ff82,#6aff80,#73ff7e,#7bff7c,#82ff79,#89ff76,#90ff74,#96ff71,#9cff6e,#a2ff6b,#a7ff68,#adff64,#b2ff61,#b7ff5d,#bcff59,#c1ff55,#c6ff50,#cbff4b,#d0ff46,#d4ff40,#d9ff39,#ddff30,#e1ff26,#e6ff17,#eaff00,#eeff00,#f3ff00,#f7ff00,#fbff00,#ffff00,#fffc00,#fff800,#fff500)"></i><i style="left:5px;top:244px;width:390px;background:linear-gradient(90deg,#00ffe0,#00ffdf,#00ffde,#00ffdd,#00ffdd,#00ffdc,#00ffdb,#00ffda,#00ffd9,#00ffd8,#00ffd7,#00ffd6,#00ffd5,#00ffd4,#00ffd3,#00ffd2,#00ffd0,#00ffcf,#00ffce,#00ffcc,#00ffcb,#00ffc9,#00ffc8,#00ffc6,#00ffc4,#00ffc2,#00ffc0,#00ffbe,#00ffbc,#00ffba,#00ffb7,#00ffb4,#00ffb1,#00ffae,#00ffab,#00ffa7,#00ffa3,#00ff9f,#00ff9b,#00ff95,#00ff90,#29ff8d,#3dff8b,#4cff89,#58ff87,#62ff85,#6cff83,#74ff81,#7cff7f,#83ff7c,#8aff7a,#91ff77,#97ff74,#9dff72,#a3ff6f,#a9ff6b,#aeff68,#b4ff65,#b9ff61,#beff5d,#c3ff59,#c8ff55,#ccff50,#d1ff4b,#d6ff46,#daff3f,#dfff38,#e3ff30,#e7ff25,#ecff15,#f0ff00,#f4ff00,#f8ff00,#fcff00,#fffe00,#fffa00,#fff700,#fff300,#fff000)"></i><i style="left:5px;top:248px;width:390px;background:linear-gradient(90deg,#00ffe0,#00ffe0,#00ffdf,#00ffde,#00ffdd,#00ffdd,#00ffdc,#00ffdb,#00ffda,#00ffd9,#00ffd8,#00ffd7,#00ffd6,#00ffd5,#00ffd4,#00ffd3,#00ffd2,#00ffd0,#00ffcf,#00ffce,#00ffcc,#00ffcb,#00ffc9,#00ffc7,#00ffc6,#00ffc4,#00ffc2,#00ffc0,#00ffbd,#00ffbb,#00ffb9,#00ffb6,#00ffb3,#00ffb0,#00ffad,#00ffa9,#00ffa5,#00ffa1,#00ff9c,#00ff97,#01ff92,#2cff90,#3fff8e,#4eff8c,#5aff8a,#64ff88,#6dff86,#76ff84,#7dff82,#85ff7f,#8cff7d,#92ff7a,#99ff78,#9fff75,#a5ff72,#aaff6f,#b0ff6c,#b5ff69,#baff65,#bfff62,#c4ff5e,#c9ff5a,#ceff55,#d2ff50,#d7ff4b,#dcff46,#e0ff3f,#e4ff38,#e9ff2f,#edff24,#f1ff13,#f6ff00,#faff00,#feff00,#fffc00,#fff800,#fff500,#fff200,#ffee00)"></i><i style="left:5px;top:252px;width:395px;background:linear-gradient(90deg,#00ffe1,#00ffe1,#00ffe0,#00ffdf,#00ffde,#00ffde,#00ffdd,#00ffdc,#00ffdb,#00ffda,#00ffd9,#00ffd8,#00ffd7,#00ffd6,#00ffd5,#00ffd4,#00ffd3,#00ffd1,#00ffd0,#00ffcf,#00ffcd,#00ffcc,#00ffca,#00ffc9,#00ffc7,#00ffc5,#00ffc3,#00ffc1,#00ffbf,#00ffbd,#00ffba,#00ffb7,#00ffb5,#00ffb2,#00ffae,#00ffab,#00ffa7,#00ffa3,#00ff9e,#00ff99,#0aff94,#2fff93,#41ff91,#4fff8f,#5bff8d,#65ff8b,#6fff89,#77ff87,#7fff84,#86ff82,#8dff80,#94ff7d,#9aff7b,#a0ff78,#a6ff75,#acff73,#b1ff70,#b6ff6c,#bcff69,#c1ff66,#c6ff62,#cbff5e,#cfff5a,#d4ff55,#d9ff51,#ddff4b,#e2ff46,#e6ff3f,#eaff37,#efff2e,#f3ff23,#f7ff11,#fbff00,#fffe00,#fffa00,#fff700,#fff300,#fff000,#ffed00,#ffea00)"></i><i style="left:5px;top:256px;width:400px;background:linear-gradient(90deg,#00ffe2,#00ffe2,#00ffe1,#00ffe0,#00ffdf,#00ffdf,#00ffde,#00ffdd,#00ffdc,#00ffdb,#00ffda,#00ffd9,#00ffd8,#00ffd7,#00ffd6,#00ffd5,#00ffd4,#00ffd3,#00ffd1,#00ffd0,#00ffcf,#00ffcd,#00ffcc,#00ffca,#00ffc8,#00ffc6,#00ffc4,#00ffc2,#00ffc0,#00ffbe,#00ffbc,#00ffb9,#00ffb6,#00ffb3,#00ffb0,#00ffad,#00ffa9,#00ffa5,#00ffa0,#00ff9c,#12ff97,#31ff95,#43ff93,#51ff92,#5dff90,#67ff8e,#70ff8c,#78ff8a,#80ff87,#88ff85,#8eff83,#95ff80,#9bff7e,#a1ff7b,#a7ff79,#adff76,#b2ff73,#b8ff70,#bdff6d,#c2ff6a,#c7ff66,#ccff62,#d1ff5e,#d6ff5a,#daff56,#dfff51,#e3ff4b,#e8ff45,#ecff3f,#f0ff37,#f5ff2e,#f9ff22,#fdff0e,#fffd00,#fff900,#fff500,#fff200,#ffee00,#ffeb00,#ffe800,#ffe500)"></i><i style="left:5px;top:260px;width:405px;background:linear-gradient(90deg,#00ffe3,#00ffe3,#00ffe2,#00ffe1,#00ffe0,#00ffe0,#00ffdf,#00ffde,#00ffdd,#00ffdc,#00ffdb,#00ffda,#00ffd9,#00ffd8,#00ffd7,#00ffd6,#00ffd5,#00ffd4,#00ffd3,#00ffd1,#00ffd0,#00ffce,#00ffcd,#00ffcb,#00ffca,#00ffc8,#00ffc6,#00ffc4,#00ffc2,#00ffc0,#00ffbd,#00ffbb,#00ffb8,#00ffb5,#00ffb2,#00ffae,#00ffab,#00ffa7,#00ffa2,#00ff9e,#17ff9a,#34ff98,#45ff96,#53ff94,#5eff92,#68ff90,#72ff8e,#7aff8c,#82ff8a,#89ff88,#90ff86,#96ff84,#9dff81,#a3ff7f,#a9ff7c,#aeff79,#b4ff77,#b9ff74,#beff71,#c4ff6d,#c9ff6a,#cdff66,#d2ff63,#d7ff5f,#dcff5a,#e0ff56,#e5ff51,#e9ff4b,#eeff45,#f2ff3f,#f6ff37,#fbff2d,#ffff20,#fffb09,#fff700,#fff300,#fff000,#ffed00,#ffea00,#ffe700,#ffe400,#ffe100)"></i><i style="left:5px;top:264px;width:410px;background:linear-gradient(90deg,#00ffe4,#00ffe3,#00ffe3,#00ffe2,#00ffe1,#00ffe1,#00ffe0,#00ffdf,#00ffde,#00ffdd,#00ffdc,#00ffdb,#00ffdb,#00ffda,#00ffd8,#00ffd7,#00ffd6,#00ffd5,#00ffd4,#00ffd2,#00ffd1,#00ffd0,#00ffce,#00ffcd,#00ffcb,#00ffc9,#00ffc7,#00ffc5,#00ffc3,#00ffc1,#00ffbf,#00ffbc,#00ffba,#00ffb7,#00ffb4,#00ffb0,#00ffad,#00ffa9,#00ffa4,#00ffa0,#1cff9c,#37ff9a,#47ff99,#55ff97,#60ff95,#6aff93,#73ff91,#7bff8f,#83ff8d,#8aff8b,#91ff89,#98ff87,#9eff84,#a4ff82,#aaff7f,#b0ff7d,#b5ff7a,#bbff77,#c0ff74,#c5ff71,#caff6e,#cfff6a,#d4ff67,#d9ff63,#ddff5f,#e2ff5b,#e6ff56,#ebff51,#efff4b,#f4ff45,#f8ff3e,#fcff36,#fffd2c,#fff91e,#fff505,#fff200,#ffee00,#ffeb00,#ffe800,#ffe500,#ffe200,#ffdf00,#ffdd00)"></i><i style="left:5px;top:268px;width:410px;background:linear-gradient(90deg,#00ffe5,#00ffe4,#00ffe4,#00ffe3,#00ffe2,#00ffe2,#00ffe1,#00ffe0,#00ffdf,#00ffde,#00ffdd,#00ffdd,#00ffdc,#00ffdb,#00ffda,#00ffd9,#00ffd7,#00ffd6,#00ffd5,#00ffd4,#00ffd2,#00ffd1,#00ffd0,#00ffce,#00ffcc,#00ffcb,#00ffc9,#00ffc7,#00ffc5,#00ffc3,#00ffc0,#00ffbe,#00ffbb,#00ffb8,#00ffb5,#00ffb2,#00ffaf,#00ffab,#00ffa6,#00ffa2,#20ff9f,#39ff9d,#49ff9b,#56ff9a,#62ff98,#6cff96,#74ff94,#7dff92,#85ff90,#8cff8e,#93ff8c,#99ff8a,#a0ff87,#a6ff85,#acff83,#b1ff80,#b7ff7d,#bcff7b,#c1ff78,#c7ff75,#ccff72,#d1ff6e,#d5ff6b,#daff67,#dfff63,#e4ff5f,#e8ff5b,#edff56,#f1ff51,#f5ff4b,#faff45,#feff3e,#fffc35,#fff82a,#fff41c,#fff001,#ffec00,#ffe900,#ffe600,#ffe300,#ffe000,#ffde00,#ffdb00)"></i><i style="left:5px;top:272px;width:415px;background:linear-gradient(90deg,#00ffe6,#00ffe5,#00ffe5,#00ffe4,#00ffe3,#00ffe3,#00ffe2,#00ffe1,#00ffe0,#00ffdf,#00ffdf,#00ffde,#00ffdd,#00ffdc,#00ffdb,#00ffda,#00ffd9,#00ffd7,#00ffd6,#00ffd5,#00ffd4,#00ffd2,#00ffd1,#00ffcf,#00ffce,#00ffcc,#00ffca,#00ffc8,#00ffc6,#00ffc4,#00ffc2,#00ffc0,#00ffbd,#00ffba,#00ffb7,#00ffb4,#00ffb0,#00ffad,#00ffa9,#00ffa4,#24ffa1,#3bffa0,#4bff9e,#58ff9c,#63ff9a,#6dff99,#76ff97,#7eff95,#86ff93,#8dff91,#94ff8f,#9bff8d,#a1ff8a,#a7ff88,#adff86,#b3ff83,#b8ff81,#beff7e,#c3ff7b,#c8ff78,#cdff75,#d2ff72,#d7ff6f,#dcff6b,#e0ff68,#e5ff64,#eaff60,#eeff5b,#f3ff56,#f7ff51,#fcff4b,#fffe45,#fffa3c,#fff633,#fff228,#ffee19,#ffeb00,#ffe700,#ffe400,#ffe100,#ffdf00,#ffdc00,#ffd900,#ffd700)"></i><i style="left:5px;top:276px;width:420px;background:linear-gradient(90deg,#00ffe7,#00ffe6,#00ffe6,#00ffe5,#00ffe4,#00ffe4,#00ffe3,#00ffe2,#00ffe1,#00ffe0,#00ffe0,#00ffdf,#00ffde,#00ffdd,#00ffdc,#00ffdb,#00ffda,#00ffd9,#00ffd8,#00ffd6,#00ffd5,#00ffd4,#00ffd2,#00ffd1,#00ffcf,#00ffcd,#00ffcc,#00ffca,#00ffc8,#00ffc6,#00ffc4,#00ffc1,#00ffbf,#00ffbc,#00ffb9,#00ffb6,#00ffb2,#00ffaf,#00ffab,#00ffa6,#28ffa4,#3effa2,#4dffa1,#5aff9f,#65ff9d,#6fff9b,#77ff9a,#80ff98,#87ff96,#8fff94,#96ff92,#9cff90,#a2ff8d,#a9ff8b,#aeff89,#b4ff86,#baff84,#bfff81,#c4ff7f,#caff7c,#cfff79,#d4ff76,#d9ff73,#ddff6f,#e2ff6c,#e7ff68,#ebff64,#f0ff60,#f4ff5b,#f9ff57,#fdff51,#fffc4a,#fff843,#fff43a,#fff031,#ffec26,#ffe917,#ffe500,#ffe200,#ffdf00,#ffdd00,#ffda00,#ffd800,#ffd500,#ffd300)"></i><i style="left:5px;top:280px;width:425px;background:linear-gradient(90deg,#00ffe8,#00ffe7,#00ffe7,#00ffe6,#00ffe5,#00ffe5,#00ffe4,#00ffe3,#00ffe2,#00ffe2,#00ffe1,#00ffe0,#00ffdf,#00ffde,#00ffdd,#00ffdc,#00ffdb,#00ffda,#00ffd9,#00ffd8,#00ffd6,#00ffd5,#00ffd4,#00ffd2,#00ffd1,#00ffcf,#00ffcd,#00ffcb,#00ffc9,#00ffc7,#00ffc5,#00ffc3,#00ffc0,#00ffbe,#00ffbb,#00ffb8,#00ffb4,#00ffb1,#00ffad,#00ffa8,#2bffa6,#40ffa5,#4fffa3,#5cffa2,#66ffa0,#70ff9e,#79ff9c,#81ff9b,#89ff99,#90ff97,#97ff95,#9eff93,#a4ff90,#aaff8e,#b0ff8c,#b6ff8a,#bbff87,#c1ff85,#c6ff82,#cbff7f,#d0ff7d,#d5ff7a,#daff77,#dfff73,#e4ff70,#e9ff6c,#edff69,#f2ff65,#f6ff60,#fbff5c,#ffff57,#fffa50,#fff649,#fff241,#ffee38,#ffeb2f,#ffe724,#ffe414,#ffe000,#ffde00,#ffdb00,#ffd800,#ffd600,#ffd300,#ffd100,#ffcf00)"></i><i style="left:5px;top:284px;width:430px;background:linear-gradient(90deg,#00ffe9,#00ffe8,#00ffe8,#00ffe7,#00ffe6,#00ffe6,#00ffe5,#00ffe4,#00ffe3,#00ffe3,#00ffe2,#00ffe1,#00ffe0,#00ffdf,#00ffde,#00ffdd,#00ffdc,#00ffdb,#00ffda,#00ffd9,#00ffd8,#00ffd6,#00ffd5,#00ffd4,#00ffd2,#00ffd0,#00ffcf,#00ffcd,#00ffcb,#00ffc9,#00ffc7,#00ffc5,#00ffc2,#00ffbf,#00ffbd,#00ffba,#00ffb6,#00ffb3,#00ffaf,#01ffaa,#2effa9,#42ffa7,#51ffa6,#5dffa4,#68ffa3,#72ffa1,#7bff9f,#83ff9d,#8aff9b,#92ff9a,#98ff98,#9fff96,#a5ff94,#acff91,#b1ff8f,#b7ff8d,#bdff8b,#c2ff88,#c8ff86,#cdff83,#d2ff80,#d7ff7d,#dcff7a,#e1ff77,#e6ff74,#eaff71,#efff6d,#f3ff69,#f8ff65,#fdff61,#fffd5b,#fff955,#fff54e,#fff147,#ffed3f,#ffe937,#ffe62d,#ffe222,#ffdf11,#ffdc00,#ffd900,#ffd600,#ffd400,#ffd200,#ffcf00,#ffcd00,#ffcb00)"></i><i style="left:5px;top:288px;width:430px;background:linear-gradient(90deg,#00ffea,#00ffe9,#00ffe9,#00ffe8,#00ffe7,#00ffe7,#00ffe6,#00ffe5,#00ffe5,#00ffe4,#00ffe3,#00ffe2,#00ffe1,#00ffe0,#00ffdf,#00ffde,#00ffdd,#00ffdc,#00ffdb,#00ffda,#00ffd9,#00ffd8,#00ffd6,#00ffd5,#00ffd3,#00ffd2,#00ffd0,#00ffce,#00ffcd,#00ffcb,#00ffc9,#00ffc6,#00ffc4,#00ffc1,#00ffbf,#00ffbc,#00ffb8,#00ffb5,#00ffb1,#0bffad,#31ffac,#44ffaa,#53ffa8,#5fffa7,#6affa5,#73ffa4,#7cffa2,#84ffa0,#8cff9e,#93ff9c,#9aff9b,#a1ff99,#a7ff97,#adff94,#b3ff92,#b9ff90,#beff8e,#c4ff8b,#c9ff89,#ceff86,#d4ff84,#d9ff81,#deff7e,#e2ff7b,#e7ff78,#ecff75,#f1ff71,#f5ff6d,#faff6a,#feff65,#fffb5f,#fff759,#fff353,#ffef4c,#ffeb45,#ffe73d,#ffe435,#ffe02b,#ffdd20,#ffda0e,#ffd700,#ffd400,#ffd200,#ffd000,#ffcd00,#ffcb00,#ffc900)"></i><i style="left:10px;top:292px;width:430px;background:linear-gradient(90deg,#00ffea,#00ffea,#00ffe9,#00ffe8,#00ffe8,#00ffe7,#00ffe6,#00ffe6,#00ffe5,#00ffe4,#00ffe3,#00ffe2,#00ffe2,#00ffe1,#00ffe0,#00ffdf,#00ffde,#00ffdd,#00ffdb,#00ffda,#00ffd9,#00ffd8,#00ffd6,#00ffd5,#00ffd3,#00ffd2,#00ffd0,#00ffce,#00ffcc,#00ffca,#00ffc8,#00ffc6,#00ffc3,#00ffc0,#00ffbd,#00ffba,#00ffb7,#00ffb3,#13ffb0,#34ffae,#46ffad,#55ffab,#61ffaa,#6bffa8,#75ffa6,#7effa5,#86ffa3,#8dffa1,#95ff9f,#9bff9d,#a2ff9c,#a8ff9a,#afff97,#b5ff95,#baff93,#c0ff91,#c5ff8f,#cbff8c,#d0ff8a,#d5ff87,#daff85,#dfff82,#e4ff7f,#e9ff7c,#eeff79,#f2ff75,#f7ff72,#fcff6e,#fffe6a,#fff963,#fff55d,#fff157,#ffed51,#ffe94a,#ffe643,#ffe23c,#ffdf33,#ffdb2a,#ffd81e,#ffd50b,#ffd200,#ffd000,#ffce00,#ffcc00,#ffc900,#ffc700,#ffc500)"></i><i style="left:10px;top:296px;width:435px;background:linear-gradient(90deg,#00ffeb,#00ffeb,#00ffea,#00ffe9,#00ffe9,#00ffe8,#00ffe7,#00ffe7,#00ffe6,#00ffe5,#00ffe4,#00ffe4,#00ffe3,#00ffe2,#00ffe1,#00ffe0,#00ffdf,#00ffde,#00ffdd,#00ffdc,#00ffda,#00ffd9,#00ffd8,#00ffd6,#00ffd5,#00ffd3,#00ffd2,#00ffd0,#00ffce,#00ffcc,#00ffca,#00ffc7,#00ffc5,#00ffc2,#00ffbf,#00ffbc,#00ffb9,#00ffb5,#19ffb2,#36ffb1,#49ffaf,#57ffae,#63ffac,#6dffab,#76ffa9,#7fffa7,#87ffa6,#8fffa4,#96ffa2,#9dffa0,#a4ff9e,#aaff9d,#b0ff9b,#b6ff98,#bcff96,#c2ff94,#c7ff92,#ccff90,#d2ff8d,#d7ff8b,#dcff88,#e1ff85,#e6ff83,#ebff80,#f0ff7d,#f4ff79,#f9ff76,#feff72,#fffc6d,#fff767,#fff361,#ffef5b,#ffeb55,#ffe84f,#ffe448,#ffe041,#ffdd3a,#ffda32,#ffd728,#ffd41c,#ffd107,#ffce00,#ffcc00,#ffca00,#ffc700,#ffc500,#ffc400,#ffc200)"></i><i style="left:10px;top:300px;width:440px;background:linear-gradient(90deg,#00ffec,#00ffec,#00ffeb,#00ffea,#00ffea,#00ffe9,#00ffe8,#00ffe8,#00ffe7,#00ffe6,#00ffe6,#00ffe5,#00ffe4,#00ffe3,#00ffe2,#00ffe1,#00ffe0,#00ffdf,#00ffde,#00ffdd,#00ffdc,#00ffdb,#00ffd9,#00ffd8,#00ffd6,#00ffd5,#00ffd3,#00ffd1,#00ffd0,#00ffce,#00ffcc,#00ffc9,#00ffc7,#00ffc4,#00ffc1,#00ffbe,#00ffbb,#00ffb7,#1effb5,#39ffb3,#4bffb2,#58ffb0,#64ffaf,#6fffad,#78ffac,#81ffaa,#89ffa9,#90ffa7,#98ffa5,#9fffa3,#a5ffa1,#acffa0,#b2ff9e,#b8ff9c,#bdff9a,#c3ff97,#c9ff95,#ceff93,#d3ff91,#d9ff8e,#deff8c,#e3ff89,#e8ff86,#edff83,#f1ff80,#f6ff7d,#fbff7a,#fffe76,#fffa71,#fff66b,#fff165,#ffed5f,#ffea59,#ffe653,#ffe24d,#ffdf47,#ffdb40,#ffd838,#ffd530,#ffd226,#ffcf1a,#ffcc04,#ffca00,#ffc800,#ffc600,#ffc400,#ffc200,#ffc000,#ffbe00)"></i><i style="left:10px;top:304px;width:445px;background:linear-gradient(90deg,#00ffed,#00ffed,#00ffec,#00ffeb,#00ffeb,#00ffea,#00ffea,#00ffe9,#00ffe8,#00ffe7,#00ffe7,#00ffe6,#00ffe5,#00ffe4,#00ffe3,#00ffe3,#00ffe2,#00ffe1,#00ffdf,#00ffde,#00ffdd,#00ffdc,#00ffdb,#00ffd9,#00ffd8,#00ffd6,#00ffd5,#00ffd3,#00ffd1,#00ffcf,#00ffcd,#00ffcb,#00ffc9,#00ffc6,#00ffc3,#00ffc0,#00ffbd,#00ffba,#22ffb7,#3cffb6,#4dffb4,#5affb3,#66ffb2,#70ffb0,#7affaf,#82ffad,#8affab,#92ffaa,#99ffa8,#a0ffa6,#a7ffa4,#adffa3,#b3ffa1,#b9ff9f,#bfff9d,#c5ff9b,#caff98,#d0ff96,#d5ff94,#daff92,#dfff8f,#e4ff8d,#e9ff8a,#eeff87,#f3ff84,#f8ff81,#fdff7e,#fffd7a,#fff874,#fff46e,#fff069,#ffec63,#ffe85d,#ffe457,#ffe152,#ffdd4b,#ffda45,#ffd63e,#ffd337,#ffd02e,#ffcd24,#ffca18,#ffc800,#ffc600,#ffc300,#ffc200,#ffc000,#ffbe00,#ffbc00,#ffba00)"></i><i style="left:10px;top:308px;width:445px;background:linear-gradient(90deg,#00ffee,#00ffee,#00ffed,#00ffec,#00ffec,#00ffeb,#00ffeb,#00ffea,#00ffe9,#00ffe9,#00ffe8,#00ffe7,#00ffe6,#00ffe6,#00ffe5,#00ffe4,#00ffe3,#00ffe2,#00ffe1,#00ffe0,#00ffdf,#00ffdd,#00ffdc,#00ffdb,#00ffd9,#00ffd8,#00ffd6,#00ffd5,#00ffd3,#00ffd1,#00ffcf,#00ffcd,#00ffcb,#00ffc8,#00ffc6,#00ffc3,#00ffbf,#00ffbc,#26ffba,#3effb8,#4fffb7,#5cffb6,#68ffb4,#72ffb3,#7bffb1,#84ffb0,#8cffae,#94ffac,#9bffab,#a2ffa9,#a8ffa7,#afffa6,#b5ffa4,#bbffa2,#c1ffa0,#c6ff9e,#ccff9c,#d1ff99,#d7ff97,#dcff95,#e1ff93,#e6ff90,#ebff8e,#f0ff8b,#f5ff88,#faff85,#ffff82,#fffb7d,#fff677,#fff272,#ffee6c,#ffea67,#ffe661,#ffe25b,#ffdf56,#ffdb50,#ffd84a,#ffd543,#ffd23c,#ffcf35,#ffcc2d,#ffc923,#ffc615,#ffc300,#ffc100,#ffbf00,#ffbe00,#ffbc00,#ffba00,#ffb900)"></i><i style="left:10px;top:312px;width:450px;background:linear-gradient(90deg,#00ffef,#00ffef,#00ffee,#00ffee,#00ffed,#00ffec,#00ffec,#00ffeb,#00ffea,#00ffea,#00ffe9,#00ffe8,#00ffe8,#00ffe7,#00ffe6,#00ffe5,#00ffe4,#00ffe3,#00ffe2,#00ffe1,#00ffe0,#00ffdf,#00ffde,#00ffdc,#00ffdb,#00ffda,#00ffd8,#00ffd6,#00ffd5,#00ffd3,#00ffd1,#00ffcf,#00ffcd,#00ffca,#00ffc8,#00ffc5,#00ffc2,#00ffbe,#2affbc,#41ffbb,#51ffba,#5effb8,#69ffb7,#74ffb6,#7dffb4,#85ffb3,#8effb1,#95ffaf,#9cffae,#a3ffac,#aaffaa,#b0ffa9,#b7ffa7,#bdffa5,#c2ffa3,#c8ffa1,#ceff9f,#d3ff9d,#d9ff9b,#deff98,#e3ff96,#e8ff94,#edff91,#f2ff8f,#f7ff8c,#fcff89,#fffd85,#fff980,#fff47a,#fff075,#ffec6f,#ffe86a,#ffe465,#ffe15f,#ffdd5a,#ffda54,#ffd64e,#ffd348,#ffd042,#ffcd3b,#ffca33,#ffc72b,#ffc521,#ffc213,#ffbf00,#ffbd00,#ffbc00,#ffba00,#ffb800,#ffb700,#ffb500)"></i><i style="left:10px;top:316px;width:455px;background:linear-gradient(90deg,#00fff0,#00fff0,#00ffef,#00ffef,#00ffee,#00ffed,#00ffed,#00ffec,#00ffec,#00ffeb,#00ffea,#00ffea,#00ffe9,#00ffe8,#00ffe7,#00ffe6,#00ffe6,#00ffe5,#00ffe4,#00ffe3,#00ffe2,#00ffe0,#00ffdf,#00ffde,#00ffdd,#00ffdb,#00ffda,#00ffd8,#00ffd7,#00ffd5,#00ffd3,#00ffd1,#00ffcf,#00ffcc,#00ffca,#00ffc7,#00ffc4,#00ffc1,#2dffbf,#43ffbe,#53ffbc,#60ffbb,#6bffba,#75ffb8,#7fffb7,#87ffb5,#8fffb4,#97ffb2,#9effb1,#a5ffaf,#acffad,#b2ffac,#b8ffaa,#beffa8,#c4ffa6,#caffa4,#cfffa2,#d5ffa0,#daff9e,#e0ff9c,#e5ff99,#eaff97,#efff95,#f4ff92,#f9ff90,#feff8d,#fffb88,#fff782,#fff27d,#ffee78,#ffea72,#ffe66d,#ffe268,#ffdf63,#ffdb5d,#ffd858,#ffd552,#ffd14c,#ffce47,#ffcb40,#ffc839,#ffc632,#ffc32a,#ffc01f,#ffbe11,#ffbb00,#ffb900,#ffb800,#ffb600,#ffb500,#ffb300,#ffb200)"></i><i style="left:10px;top:320px;width:460px;background:linear-gradient(90deg,#00fff1,#00fff1,#00fff0,#00fff0,#00ffef,#00ffef,#00ffee,#00ffed,#00ffed,#00ffec,#00ffec,#00ffeb,#00ffea,#00ffe9,#00ffe9,#00ffe8,#00ffe7,#00ffe6,#00ffe5,#00ffe4,#00ffe3,#00ffe2,#00ffe1,#00ffe0,#00ffde,#00ffdd,#00ffdb,#00ffda,#00ffd8,#00ffd7,#00ffd5,#00ffd3,#00ffd1,#00ffce,#00ffcc,#00ffc9,#00ffc6,#00ffc3,#30ffc2,#45ffc0,#55ffbf,#62ffbe,#6dffbc,#77ffbb,#80ffba,#89ffb8,#91ffb7,#98ffb5,#a0ffb4,#a7ffb2,#adffb0,#b4ffaf,#baffad,#c0ffab,#c6ffa9,#ccffa7,#d1ffa5,#d7ffa3,#dcffa1,#e1ff9f,#e7ff9d,#ecff9b,#f1ff98,#f6ff96,#fbff93,#fffe90,#fff98b,#fff585,#fff080,#ffec7b,#ffe875,#ffe470,#ffe16b,#ffdd66,#ffda61,#ffd65b,#ffd356,#ffd051,#ffcd4b,#ffca45,#ffc73f,#ffc438,#ffc131,#ffbf28,#ffbc1e,#ffb90e,#ffb700,#ffb600,#ffb400,#ffb200,#ffb100,#ffaf00,#ffae00)"></i><i style="left:10px;top:324px;width:465px;background:linear-gradient(90deg,#00fff2,#00fff2,#00fff1,#00fff1,#00fff0,#00fff0,#00ffef,#00ffef,#00ffee,#00ffed,#00ffed,#00ffec,#00ffeb,#00ffeb,#00ffea,#00ffe9,#00ffe8,#00ffe7,#00ffe6,#00ffe5,#00ffe4,#00ffe3,#00ffe2,#00ffe1,#00ffe0,#00ffdf,#00ffdd,#00ffdc,#00ffda,#00ffd8,#00ffd7,#00ffd5,#00ffd3,#00ffd0,#00ffce,#00ffcb,#00ffc8,#0bffc6,#33ffc4,#48ffc3,#57ffc2,#64ffc0,#6fffbf,#79ffbe,#82ffbc,#8affbb,#92ffb9,#9affb8,#a1ffb6,#a8ffb5,#afffb3,#b5ffb2,#bcffb0,#c2ffae,#c8ffac,#cdffaa,#d3ffa9,#d9ffa7,#deffa5,#e3ffa3,#e9ffa0,#eeff9e,#f3ff9c,#f8ff99,#fdff97,#fffc93,#fff78d,#fff388,#ffef83,#ffea7d,#ffe678,#ffe373,#ffdf6e,#ffdb69,#ffd864,#ffd45f,#ffd15a,#ffce54,#ffcb4f,#ffc849,#ffc543,#ffc23d,#ffc037,#ffbd2f,#ffba26,#ffb81c,#ffb50c,#ffb300,#ffb200,#ffb000,#ffaf00,#ffad00,#ffac00,#ffab00)"></i><i style="left:15px;top:328px;width:460px;background:linear-gradient(90deg,#00fff3,#00fff2,#00fff2,#00fff1,#00fff1,#00fff0,#00fff0,#00ffef,#00ffef,#00ffee,#00ffed,#00ffed,#00ffec,#00ffeb,#00ffea,#00ffea,#00ffe9,#00ffe8,#00ffe7,#00ffe6,#00ffe5,#00ffe4,#00ffe3,#00ffe2,#00ffe0,#00ffdf,#00ffdd,#00ffdc,#00ffda,#00ffd9,#00ffd7,#00ffd5,#00ffd2,#00ffd0,#00ffce,#00ffcb,#14ffc8,#36ffc7,#4affc6,#59ffc4,#65ffc3,#70ffc2,#7affc1,#84ffbf,#8cffbe,#94ffbc,#9cffbb,#a3ffb9,#aaffb8,#b1ffb6,#b7ffb5,#bdffb3,#c3ffb1,#c9ffb0,#cfffae,#d5ffac,#daffaa,#e0ffa8,#e5ffa6,#ebffa4,#f0ffa2,#f5ff9f,#faff9d,#ffff9b,#fffa95,#fff590,#fff18a,#ffed85,#ffe880,#ffe47b,#ffe176,#ffdd71,#ffd96c,#ffd667,#ffd362,#ffcf5d,#ffcc58,#ffc953,#ffc64d,#ffc348,#ffc142,#ffbe3c,#ffbb35,#ffb92e,#ffb625,#ffb41a,#ffb109,#ffb000,#ffae00,#ffad00,#ffab00,#ffaa00,#ffa900)"></i><i style="left:15px;top:332px;width:465px;background:linear-gradient(90deg,#00fff4,#00fff3,#00fff3,#00fff2,#00fff2,#00fff1,#00fff1,#00fff0,#00fff0,#00ffef,#00ffef,#00ffee,#00ffed,#00ffed,#00ffec,#00ffeb,#00ffea,#00ffe9,#00ffe8,#00ffe7,#00ffe6,#00ffe5,#00ffe4,#00ffe3,#00ffe2,#00ffe1,#00ffdf,#00ffde,#00ffdc,#00ffda,#00ffd9,#00ffd7,#00ffd5,#00ffd2,#00ffd0,#00ffcd,#1affcb,#39ffca,#4cffc8,#5bffc7,#67ffc6,#72ffc5,#7cffc3,#85ffc2,#8effc1,#96ffbf,#9dffbe,#a5ffbc,#acffbb,#b2ffb9,#b9ffb8,#bfffb6,#c5ffb4,#cbffb3,#d1ffb1,#d7ffaf,#dcffad,#e2ffab,#e7ffa9,#ecffa7,#f2ffa5,#f7ffa3,#fcffa1,#fffd9d,#fff898,#fff392,#ffef8d,#ffeb88,#ffe783,#ffe37e,#ffdf79,#ffdb74,#ffd86f,#ffd46a,#ffd165,#ffce61,#ffcb5c,#ffc856,#ffc551,#ffc24c,#ffbf46,#ffbc41,#ffba3a,#ffb734,#ffb52c,#ffb223,#ffb018,#ffad06,#ffac00,#ffaa00,#ffa900,#ffa800,#ffa600,#ffa500)"></i><i style="left:15px;top:336px;width:470px;background:linear-gradient(90deg,#00fff5,#00fff4,#00fff4,#00fff4,#00fff3,#00fff3,#00fff2,#00fff2,#00fff1,#00fff0,#00fff0,#00ffef,#00ffef,#00ffee,#00ffed,#00ffec,#00ffec,#00ffeb,#00ffea,#00ffe9,#00ffe8,#00ffe7,#00ffe6,#00ffe5,#00ffe4,#00ffe2,#00ffe1,#00ffe0,#00ffde,#00ffdc,#00ffdb,#00ffd9,#00ffd7,#00ffd5,#00ffd2,#00ffd0,#1fffcd,#3cffcc,#4effcb,#5dffca,#69ffc9,#74ffc7,#7effc6,#87ffc5,#8fffc4,#97ffc2,#9fffc1,#a6ffbf,#adffbe,#b4ffbc,#baffbb,#c1ffb9,#c7ffb8,#cdffb6,#d3ffb4,#d9ffb2,#deffb1,#e4ffaf,#e9ffad,#eeffab,#f4ffa9,#f9ffa7,#feffa4,#fffb9f,#fff69a,#fff195,#ffed8f,#ffe98a,#ffe585,#ffe180,#ffdd7c,#ffd977,#ffd672,#ffd26d,#ffcf68,#ffcc64,#ffc95f,#ffc65a,#ffc355,#ffc050,#ffbd4b,#ffbb45,#ffb83f,#ffb639,#ffb332,#ffb12b,#ffae22,#ffac16,#ffaa03,#ffa800,#ffa700,#ffa500,#ffa400,#ffa300,#ffa200)"></i><i style="left:15px;top:340px;width:475px;background:linear-gradient(90deg,#00fff6,#00fff6,#00fff5,#00fff5,#00fff4,#00fff4,#00fff3,#00fff3,#00fff2,#00fff2,#00fff1,#00fff0,#00fff0,#00ffef,#00ffef,#00ffee,#00ffed,#00ffec,#00ffeb,#00ffeb,#00ffea,#00ffe9,#00ffe8,#00ffe7,#00ffe5,#00ffe4,#00ffe3,#00ffe1,#00ffe0,#00ffde,#00ffdd,#00ffdb,#00ffd9,#00ffd7,#00ffd4,#00ffd2,#24ffd0,#3fffcf,#50ffce,#5fffcd,#6bffcb,#76ffca,#80ffc9,#89ffc8,#91ffc6,#99ffc5,#a1ffc4,#a8ffc2,#afffc1,#b6ffbf,#bcffbe,#c3ffbc,#c9ffbb,#cfffb9,#d5ffb7,#daffb6,#e0ffb4,#e6ffb2,#ebffb0,#f1ffae,#f6ffac,#fbffaa,#fffea7,#fff9a2,#fff49c,#ffef97,#ffeb92,#ffe78d,#ffe388,#ffdf83,#ffdb7e,#ffd779,#ffd475,#ffd170,#ffcd6b,#ffca67,#ffc762,#ffc45d,#ffc158,#ffbe53,#ffbc4e,#ffb949,#ffb644,#ffb43e,#ffb138,#ffaf31,#ffad29,#ffaa20,#ffa815,#ffa600,#ffa400,#ffa300,#ffa200,#ffa100,#ffa000,#ff9f00)"></i><i style="left:15px;top:344px;width:480px;background:linear-gradient(90deg,#00fff7,#00fff7,#00fff6,#00fff6,#00fff5,#00fff5,#00fff4,#00fff4,#00fff3,#00fff3,#00fff2,#00fff2,#00fff1,#00fff1,#00fff0,#00ffef,#00ffef,#00ffee,#00ffed,#00ffec,#00ffeb,#00ffea,#00ffe9,#00ffe8,#00ffe7,#00ffe6,#00ffe5,#00ffe3,#00ffe2,#00ffe0,#00ffdf,#00ffdd,#00ffdb,#00ffd9,#00ffd7,#00ffd4,#28ffd3,#41ffd2,#53ffd1,#61ffcf,#6dffce,#78ffcd,#81ffcc,#8affcb,#93ffc9,#9bffc8,#a2ffc7,#aaffc5,#b1ffc4,#b8ffc2,#beffc1,#c4ffbf,#cbffbe,#d1ffbc,#d7ffbb,#dcffb9,#e2ffb7,#e8ffb5,#edffb4,#f3ffb2,#f8ffb0,#fdffae,#fffca9,#fff7a4,#fff29e,#ffed99,#ffe994,#ffe58f,#ffe18a,#ffdd85,#ffd981,#ffd67c,#ffd277,#ffcf73,#ffcc6e,#ffc86a,#ffc565,#ffc260,#ffc05c,#ffbd57,#ffba52,#ffb74d,#ffb548,#ffb242,#ffb03d,#ffad36,#ffab30,#ffa928,#ffa61f,#ffa413,#ffa200,#ffa100,#ffa000,#ff9f00,#ff9d00,#ff9c00,#ff9b00)"></i><i style="left:15px;top:348px;width:480px;background:linear-gradient(90deg,#00fff8,#00fff8,#00fff7,#00fff7,#00fff7,#00fff6,#00fff6,#00fff5,#00fff5,#00fff4,#00fff4,#00fff3,#00fff3,#00fff2,#00fff1,#00fff1,#00fff0,#00ffef,#00ffee,#00ffee,#00ffed,#00ffec,#00ffeb,#00ffea,#00ffe9,#00ffe8,#00ffe7,#00ffe5,#00ffe4,#00ffe3,#00ffe1,#00ffdf,#00ffdd,#00ffdb,#00ffd9,#00ffd7,#2cffd6,#44ffd4,#55ffd3,#63ffd2,#6fffd1,#79ffd0,#83ffcf,#8cffcd,#95ffcc,#9dffcb,#a4ffca,#acffc8,#b3ffc7,#b9ffc6,#c0ffc4,#c6ffc3,#ccffc1,#d3ffbf,#d8ffbe,#deffbc,#e4ffbb,#eaffb9,#efffb7,#f5ffb5,#faffb3,#ffffb1,#fff9ab,#fff4a6,#fff0a0,#ffeb9b,#ffe796,#ffe391,#ffdf8d,#ffdb88,#ffd783,#ffd47e,#ffd07a,#ffcd75,#ffca71,#ffc76c,#ffc468,#ffc163,#ffbe5f,#ffbb5a,#ffb855,#ffb651,#ffb34c,#ffb146,#ffae41,#ffac3b,#ffa935,#ffa72e,#ffa527,#ffa31d,#ffa011,#ff9e00,#ff9d00,#ff9c00,#ff9b00,#ff9a00,#ff9900)"></i><i style="left:15px;top:352px;width:485px;background:linear-gradient(90deg,#00fff9,#00fff9,#00fff9,#00fff8,#00fff8,#00fff7,#00fff7,#00fff6,#00fff6,#00fff6,#00fff5,#00fff4,#00fff4,#00fff3,#00fff3,#00fff2,#00fff1,#00fff1,#00fff0,#00ffef,#00ffee,#00ffee,#00ffed,#00ffec,#00ffeb,#00ffea,#00ffe9,#00ffe7,#00ffe6,#00ffe5,#00ffe3,#00ffe1,#00ffe0,#00ffde,#00ffdc,#00ffd9,#2fffd8,#46ffd7,#57ffd6,#65ffd5,#71ffd4,#7bffd3,#85ffd2,#8effd0,#96ffcf,#9effce,#a6ffcd,#adffcb,#b4ffca,#bbffc9,#c2ffc7,#c8ffc6,#ceffc4,#d4ffc3,#daffc1,#e0ffc0,#e6ffbe,#ecffbc,#f1ffba,#f7ffb9,#fcffb7,#fffcb3,#fff7ad,#fff2a8,#ffeea3,#ffe99d,#ffe598,#ffe194,#ffdd8f,#ffd98a,#ffd585,#ffd281,#ffce7c,#ffcb78,#ffc873,#ffc56f,#ffc26b,#ffbf66,#ffbc62,#ffb95d,#ffb759,#ffb454,#ffb14f,#ffaf4a,#ffac45,#ffaa40,#ffa83a,#ffa534,#ffa32d,#ffa125,#ff9f1c,#ff9d0e,#ff9b00,#ff9a00,#ff9900,#ff9800,#ff9700,#ff9600)"></i><i style="left:15px;top:356px;width:490px;background:linear-gradient(90deg,#00fffa,#00fffa,#00fffa,#00fff9,#00fff9,#00fff9,#00fff8,#00fff8,#00fff7,#00fff7,#00fff6,#00fff6,#00fff5,#00fff5,#00fff4,#00fff4,#00fff3,#00fff2,#00fff2,#00fff1,#00fff0,#00ffef,#00ffee,#00ffee,#00ffed,#00ffec,#00ffea,#00ffe9,#00ffe8,#00ffe7,#00ffe5,#00ffe4,#00ffe2,#00ffe0,#00ffde,#00ffdc,#33ffdb,#49ffda,#59ffd9,#67ffd8,#72ffd7,#7dffd6,#87ffd5,#90ffd3,#98ffd2,#a0ffd1,#a8ffd0,#afffce,#b6ffcd,#bdffcc,#c4ffca,#caffc9,#d0ffc8,#d6ffc6,#dcffc4,#e2ffc3,#e8ffc1,#eeffc0,#f3ffbe,#f9ffbc,#ffffba,#fffab5,#fff5af,#fff0aa,#ffeca5,#ffe7a0,#ffe39b,#ffdf96,#ffdb91,#ffd78c,#ffd488,#ffd083,#ffcd7f,#ffc97a,#ffc676,#ffc372,#ffc06d,#ffbd69,#ffba64,#ffb860,#ffb55c,#ffb257,#ffb053,#ffad4e,#ffab49,#ffa844,#ffa63e,#ffa439,#ffa133,#ff9f2c,#ff9d24,#ff9b1a,#ff990c,#ff9700,#ff9600,#ff9500,#ff9400,#ff9400,#ff9300)"></i><i style="left:15px;top:360px;width:495px;background:linear-gradient(90deg,#00fffb,#00fffb,#00fffb,#00fffa,#00fffa,#00fffa,#00fff9,#00fff9,#00fff9,#00fff8,#00fff8,#00fff7,#00fff7,#00fff6,#00fff6,#00fff5,#00fff4,#00fff4,#00fff3,#00fff3,#00fff2,#00fff1,#00fff0,#00ffef,#00ffee,#00ffed,#00ffec,#00ffeb,#00ffea,#00ffe9,#00ffe7,#00ffe6,#00ffe4,#00ffe3,#00ffe1,#0cffdf,#36ffde,#4bffdd,#5bffdc,#69ffdb,#74ffda,#7fffd9,#89ffd8,#92ffd6,#9affd5,#a2ffd4,#aaffd3,#b1ffd2,#b8ffd0,#bfffcf,#c6ffce,#ccffcc,#d2ffcb,#d8ffc9,#dfffc8,#e4ffc6,#eaffc5,#f0ffc3,#f6ffc1,#fbffc0,#fffdbd,#fff8b7,#fff3b1,#ffeeac,#ffeaa7,#ffe5a2,#ffe19d,#ffdd98,#ffd993,#ffd58e,#ffd28a,#ffce85,#ffcb81,#ffc77d,#ffc478,#ffc174,#ffbe70,#ffbb6c,#ffb967,#ffb663,#ffb35f,#ffb05a,#ffae56,#ffab51,#ffa94c,#ffa748,#ffa443,#ffa23d,#ffa038,#ff9e31,#ff9b2b,#ff9923,#ff9719,#ff950a,#ff9400,#ff9300,#ff9200,#ff9100,#ff9000,#ff8f00)"></i><i style="left:20px;top:364px;width:495px;background:linear-gradient(90deg,#00fffc,#00fffc,#00fffc,#00fffb,#00fffb,#00fffb,#00fffa,#00fffa,#00fff9,#00fff9,#00fff9,#00fff8,#00fff8,#00fff7,#00fff7,#00fff6,#00fff5,#00fff5,#00fff4,#00fff3,#00fff3,#00fff2,#00fff1,#00fff0,#00ffef,#00ffee,#00ffed,#00ffec,#00ffeb,#00ffea,#00ffe8,#00ffe7,#00ffe5,#00ffe3,#15ffe2,#39ffe1,#4effe0,#5dffdf,#6bffde,#76ffdd,#81ffdc,#8affda,#93ffd9,#9cffd8,#a4ffd7,#acffd6,#b3ffd5,#baffd3,#c1ffd2,#c7ffd1,#ceffcf,#d4ffce,#dbffcd,#e1ffcb,#e7ffca,#ecffc8,#f2ffc7,#f8ffc5,#feffc3,#fffbbe,#fff6b9,#fff1b3,#ffecae,#ffe7a9,#ffe3a4,#ffdf9f,#ffdb9a,#ffd795,#ffd391,#ffd08c,#ffcc88,#ffc983,#ffc67f,#ffc27b,#ffbf76,#ffbc72,#ffba6e,#ffb76a,#ffb466,#ffb161,#ffaf5d,#ffac59,#ffaa54,#ffa750,#ffa54b,#ffa346,#ffa041,#ff9e3c,#ff9c36,#ff9a30,#ff9829,#ff9621,#ff9417,#ff9207,#ff9000,#ff8f00,#ff8f00,#ff8e00,#ff8d00,#ff8c00)"></i><i style="left:20px;top:368px;width:495px;background:linear-gradient(90deg,#00fffd,#00fffd,#00fffd,#00fffd,#00fffc,#00fffc,#00fffc,#00fffb,#00fffb,#00fffa,#00fffa,#00fffa,#00fff9,#00fff9,#00fff8,#00fff8,#00fff7,#00fff6,#00fff6,#00fff5,#00fff4,#00fff4,#00fff3,#00fff2,#00fff1,#00fff0,#00ffef,#00ffee,#00ffed,#00ffec,#00ffeb,#00ffe9,#00ffe8,#00ffe6,#1bffe4,#3cffe4,#50ffe3,#60ffe2,#6dffe1,#78ffe0,#83ffdf,#8cffdd,#95ffdc,#9effdb,#a6ffda,#adffd9,#b5ffd8,#bcffd7,#c3ffd5,#c9ffd4,#d0ffd3,#d6ffd1,#ddffd0,#e3ffcf,#e9ffcd,#efffcc,#f4ffca,#faffc9,#fffec6,#fff9c0,#fff4bb,#ffefb5,#ffeab0,#ffe5ab,#ffe1a6,#ffdda1,#ffd99c,#ffd597,#ffd193,#ffce8e,#ffca8a,#ffc786,#ffc481,#ffc17d,#ffbe79,#ffbb75,#ffb871,#ffb56c,#ffb268,#ffb064,#ffad60,#ffaa5c,#ffa857,#ffa653,#ffa34f,#ffa14a,#ff9f45,#ff9c40,#ff9a3b,#ff9835,#ff962f,#ff9428,#ff9220,#ff9016,#ff8e05,#ff8d00,#ff8c00,#ff8b00,#ff8b00,#ff8a00)"></i><i style="left:20px;top:372px;width:500px;background:linear-gradient(90deg,#00ffff,#00fffe,#00fffe,#00fffe,#00fffd,#00fffd,#00fffd,#00fffc,#00fffc,#00fffc,#00fffb,#00fffb,#00fffb,#00fffa,#00fffa,#00fff9,#00fff9,#00fff8,#00fff8,#00fff7,#00fff6,#00fff6,#00fff5,#00fff4,#00fff3,#00fff2,#00fff2,#00fff1,#00ffef,#00ffee,#00ffed,#00ffec,#00ffea,#00ffe9,#21ffe7,#3fffe6,#53ffe5,#62ffe5,#6fffe4,#7affe3,#85ffe2,#8effe1,#97ffdf,#a0ffde,#a8ffdd,#afffdc,#b7ffdb,#beffda,#c5ffd9,#ccffd7,#d2ffd6,#d8ffd5,#dfffd3,#e5ffd2,#ebffd1,#f1ffcf,#f7ffce,#fdffcc,#fffcc8,#fff6c2,#fff1bc,#ffecb7,#ffe8b2,#ffe3ac,#ffdfa7,#ffdba3,#ffd79e,#ffd399,#ffcf95,#ffcc90,#ffc88c,#ffc588,#ffc283,#ffbf7f,#ffbc7b,#ffb977,#ffb673,#ffb36f,#ffb06b,#ffae67,#ffab63,#ffa95e,#ffa65a,#ffa456,#ffa152,#ff9f4d,#ff9d49,#ff9b44,#ff983f,#ff963a,#ff9434,#ff922e,#ff9027,#ff8e1f,#ff8c14,#ff8a02,#ff8900,#ff8900,#ff8800,#ff8700,#ff8700)"></i><i style="left:20px;top:376px;width:505px;background:linear-gradient(90deg,#00feff,#00feff,#00ffff,#00ffff,#00ffff,#00fffe,#00fffe,#00fffe,#00fffe,#00fffd,#00fffd,#00fffc,#00fffc,#00fffc,#00fffb,#00fffb,#00fffa,#00fffa,#00fff9,#00fff9,#00fff8,#00fff7,#00fff7,#00fff6,#00fff5,#00fff5,#00fff4,#00fff3,#00fff2,#00fff1,#00fff0,#00ffee,#00ffed,#00ffeb,#26ffea,#42ffe9,#55ffe8,#64ffe8,#71ffe7,#7cffe6,#86ffe5,#90ffe4,#99ffe3,#a1ffe2,#aaffe0,#b1ffdf,#b9ffde,#c0ffdd,#c7ffdc,#ceffdb,#d4ffd9,#dbffd8,#e1ffd7,#e7ffd5,#edffd4,#f3ffd3,#f9ffd1,#ffffd0,#fff9ca,#fff4c4,#ffefbe,#ffeab9,#ffe6b3,#ffe1ae,#ffdda9,#ffd9a4,#ffd5a0,#ffd19b,#ffcd97,#ffca92,#ffc68e,#ffc38a,#ffc086,#ffbd81,#ffba7d,#ffb779,#ffb475,#ffb171,#ffaf6d,#ffac69,#ffa965,#ffa761,#ffa45d,#ffa259,#ffa055,#ff9d50,#ff9b4c,#ff9947,#ff9743,#ff953e,#ff9339,#ff9033,#ff8e2d,#ff8c26,#ff8b1d,#ff8912,#ff8700,#ff8600,#ff8500,#ff8500,#ff8400,#ff8300)"></i><i style="left:20px;top:380px;width:510px;background:linear-gradient(90deg,#00fdff,#00fdff,#00fdff,#00feff,#00feff,#00feff,#00ffff,#00ffff,#00ffff,#00ffff,#00fffe,#00fffe,#00fffe,#00fffd,#00fffd,#00fffc,#00fffc,#00fffb,#00fffb,#00fffa,#00fffa,#00fff9,#00fff9,#00fff8,#00fff7,#00fff7,#00fff6,#00fff5,#00fff4,#00fff3,#00fff2,#00fff1,#00fff0,#00ffee,#2affed,#45ffec,#57ffeb,#66ffeb,#73ffea,#7effe9,#88ffe8,#92ffe7,#9bffe6,#a3ffe5,#abffe4,#b3ffe3,#bbffe1,#c2ffe0,#c9ffdf,#d0ffde,#d6ffdd,#ddffdc,#e3ffda,#e9ffd9,#efffd8,#f5ffd6,#fbffd5,#fffdd1,#fff7cb,#fff2c5,#ffedc0,#ffe8ba,#ffe3b5,#ffdfb0,#ffdbab,#ffd7a6,#ffd3a2,#ffcf9d,#ffcb99,#ffc894,#ffc490,#ffc18c,#ffbe88,#ffbb84,#ffb87f,#ffb57b,#ffb278,#ffaf74,#ffad70,#ffaa6c,#ffa868,#ffa564,#ffa360,#ffa05c,#ff9e58,#ff9c53,#ff994f,#ff974b,#ff9546,#ff9342,#ff913d,#ff8f37,#ff8d32,#ff8b2c,#ff8925,#ff871c,#ff8510,#ff8300,#ff8300,#ff8200,#ff8100,#ff8100,#ff8000)"></i><i style="left:20px;top:384px;width:515px;background:linear-gradient(90deg,#00fcff,#00fcff,#00fcff,#00fcff,#00fdff,#00fdff,#00fdff,#00fdff,#00feff,#00feff,#00feff,#00ffff,#00ffff,#00ffff,#00fffe,#00fffe,#00fffe,#00fffd,#00fffd,#00fffc,#00fffc,#00fffb,#00fffb,#00fffa,#00fff9,#00fff9,#00fff8,#00fff7,#00fff6,#00fff5,#00fff5,#00fff3,#00fff2,#00fff1,#2efff0,#48ffef,#5affee,#68ffee,#75ffed,#80ffec,#8affeb,#94ffea,#9dffe9,#a5ffe8,#adffe7,#b5ffe6,#bdffe5,#c4ffe4,#cbffe3,#d2ffe1,#d8ffe0,#dfffdf,#e5ffde,#ecffdd,#f2ffdb,#f8ffda,#feffd9,#fffad3,#fff5cd,#fff0c7,#ffebc2,#ffe6bc,#ffe1b7,#ffddb2,#ffd9ad,#ffd5a8,#ffd1a3,#ffcd9f,#ffc99b,#ffc696,#ffc392,#ffbf8e,#ffbc8a,#ffb986,#ffb682,#ffb37e,#ffb07a,#ffae76,#ffab72,#ffa86e,#ffa66a,#ffa366,#ffa162,#ff9e5e,#ff9c5a,#ff9a56,#ff9852,#ff954e,#ff934a,#ff9145,#ff8f41,#ff8d3c,#ff8b36,#ff8931,#ff872a,#ff8523,#ff831b,#ff810f,#ff8000,#ff7f00,#ff7f00,#ff7e00,#ff7e00,#ff7d00)"></i><i style="left:20px;top:388px;width:515px;background:linear-gradient(90deg,#00fbff,#00fbff,#00fbff,#00fbff,#00fbff,#00fcff,#00fcff,#00fcff,#00fcff,#00fdff,#00fdff,#00fdff,#00fdff,#00feff,#00feff,#00feff,#00ffff,#00ffff,#00fffe,#00fffe,#00fffe,#00fffd,#00fffd,#00fffc,#00fffc,#00fffb,#00fffa,#00fffa,#00fff9,#00fff8,#00fff7,#00fff6,#00fff5,#00fff4,#32fff3,#4afff2,#5cfff1,#6afff1,#77fff0,#82ffef,#8cffee,#96ffed,#9fffec,#a7ffeb,#afffea,#b7ffe9,#bfffe8,#c6ffe7,#cdffe6,#d4ffe5,#dbffe4,#e1ffe3,#e8ffe1,#eeffe0,#f4ffdf,#faffde,#fffedb,#fff8d5,#fff2cf,#ffedc9,#ffe8c3,#ffe3be,#ffdfb9,#ffdbb4,#ffd6af,#ffd2aa,#ffcfa5,#ffcba1,#ffc79c,#ffc498,#ffc194,#ffbd90,#ffba8c,#ffb788,#ffb484,#ffb180,#ffae7c,#ffac78,#ffa974,#ffa670,#ffa46c,#ffa169,#ff9f65,#ff9d61,#ff9a5d,#ff9859,#ff9655,#ff9451,#ff914d,#ff8f49,#ff8d44,#ff8b3f,#ff893b,#ff8735,#ff8530,#ff8329,#ff8122,#ff8019,#ff7e0d,#ff7c00,#ff7c00,#ff7b00,#ff7b00,#ff7a00)"></i><i style="left:25px;top:392px;width:515px;background:linear-gradient(90deg,#00faff,#00faff,#00faff,#00faff,#00faff,#00fbff,#00fbff,#00fbff,#00fbff,#00fbff,#00fcff,#00fcff,#00fcff,#00fcff,#00fdff,#00fdff,#00fdff,#00feff,#00feff,#00ffff,#00ffff,#00ffff,#00fffe,#00fffe,#00fffd,#00fffd,#00fffc,#00fffb,#00fffa,#00fffa,#00fff9,#00fff8,#00fff7,#36fff6,#4dfff5,#5efff5,#6dfff4,#79fff3,#84fff2,#8efff1,#98fff0,#a1ffef,#a9ffee,#b2ffed,#b9ffec,#c1ffeb,#c8ffea,#cfffe9,#d6ffe8,#ddffe7,#e3ffe6,#eaffe5,#f0ffe4,#f7ffe3,#fdffe1,#fffbdd,#fff5d6,#fff0d0,#ffebca,#ffe6c5,#ffe1bf,#ffddba,#ffd8b5,#ffd4b0,#ffd0ac,#ffcda7,#ffc9a3,#ffc59e,#ffc29a,#ffbf96,#ffbb92,#ffb88e,#ffb58a,#ffb286,#ffaf82,#ffad7e,#ffaa7a,#ffa776,#ffa573,#ffa26f,#ffa06b,#ff9d67,#ff9b63,#ff9860,#ff965c,#ff9458,#ff9254,#ff9050,#ff8d4c,#ff8b47,#ff8943,#ff873e,#ff8539,#ff8334,#ff812f,#ff8028,#ff7e21,#ff7c18,#ff7a0a,#ff7900,#ff7800,#ff7800,#ff7800,#ff7700)"></i><i style="left:25px;top:396px;width:520px;background:linear-gradient(90deg,#00f8ff,#00f9ff,#00f9ff,#00f9ff,#00f9ff,#00f9ff,#00f9ff,#00faff,#00faff,#00faff,#00faff,#00faff,#00fbff,#00fbff,#00fbff,#00fbff,#00fcff,#00fcff,#00fcff,#00fdff,#00fdff,#00fdff,#00feff,#00feff,#00ffff,#00ffff,#00fffe,#00fffe,#00fffd,#00fffc,#00fffc,#00fffb,#0dfffa,#39fff9,#50fff8,#61fff8,#6ffff7,#7bfff6,#86fff5,#90fff4,#9afff4,#a3fff3,#abfff2,#b4fff1,#bbfff0,#c3ffef,#caffee,#d1ffed,#d8ffec,#dfffeb,#e6ffea,#ecffe9,#f3ffe7,#f9ffe6,#ffffe5,#fff9de,#fff3d8,#ffeed2,#ffe9cc,#ffe4c6,#ffdfc1,#ffdbbc,#ffd6b7,#ffd2b2,#ffcead,#ffcaa9,#ffc7a4,#ffc3a0,#ffc09c,#ffbd98,#ffb993,#ffb68f,#ffb38b,#ffb088,#ffad84,#ffab80,#ffa87c,#ffa578,#ffa375,#ffa071,#ff9e6d,#ff9b6a,#ff9966,#ff9762,#ff945e,#ff925a,#ff9057,#ff8e53,#ff8c4f,#ff8a4b,#ff8846,#ff8642,#ff843d,#ff8238,#ff8033,#ff7e2d,#ff7c27,#ff7a20,#ff7816,#ff7608,#ff7500,#ff7500,#ff7500,#ff7400,#ff7400)"></i><i style="left:25px;top:400px;width:525px;background:linear-gradient(90deg,#00f7ff,#00f7ff,#00f8ff,#00f8ff,#00f8ff,#00f8ff,#00f8ff,#00f8ff,#00f8ff,#00f9ff,#00f9ff,#00f9ff,#00f9ff,#00f9ff,#00f9ff,#00faff,#00faff,#00faff,#00faff,#00fbff,#00fbff,#00fbff,#00fcff,#00fcff,#00fcff,#00fdff,#00fdff,#00feff,#00feff,#00ffff,#00fffe,#00fffe,#16fffd,#3dfffc,#52fffc,#63fffb,#71fffa,#7dfff9,#88fff8,#92fff8,#9cfff7,#a5fff6,#aefff5,#b6fff4,#befff3,#c5fff2,#cdfff1,#d4fff0,#dbffef,#e2ffee,#e8ffed,#efffec,#f5ffeb,#fcffea,#fffce6,#fff6e0,#fff1d9,#ffebd3,#ffe6ce,#ffe1c8,#ffddc3,#ffd8bd,#ffd4b9,#ffd0b4,#ffccaf,#ffc8aa,#ffc5a6,#ffc1a2,#ffbe9d,#ffba99,#ffb795,#ffb491,#ffb18d,#ffae89,#ffab86,#ffa982,#ffa67e,#ffa37a,#ffa177,#ff9e73,#ff9c6f,#ff996c,#ff9768,#ff9564,#ff9261,#ff905d,#ff8e59,#ff8c55,#ff8a52,#ff884e,#ff8649,#ff8445,#ff8241,#ff803c,#ff7e37,#ff7c32,#ff7a2c,#ff7826,#ff761f,#ff7415,#ff7306,#ff7200,#ff7200,#ff7100,#ff7100,#ff7100)"></i><i style="left:25px;top:404px;width:530px;background:linear-gradient(90deg,#00f6ff,#00f6ff,#00f6ff,#00f6ff,#00f6ff,#00f7ff,#00f7ff,#00f7ff,#00f7ff,#00f7ff,#00f7ff,#00f7ff,#00f8ff,#00f8ff,#00f8ff,#00f8ff,#00f8ff,#00f8ff,#00f9ff,#00f9ff,#00f9ff,#00f9ff,#00faff,#00faff,#00faff,#00fbff,#00fbff,#00fbff,#00fcff,#00fcff,#00fdff,#00fdff,#1dfeff,#40ffff,#55ffff,#65fffe,#73fffd,#7ffffd,#8afffc,#95fffb,#9efffa,#a7fff9,#b0fff9,#b8fff8,#c0fff7,#c7fff6,#cffff5,#d6fff4,#ddfff3,#e4fff2,#ebfff1,#f1fff0,#f8ffef,#feffee,#fffae8,#fff4e1,#ffeedb,#ffe9d5,#ffe4cf,#ffdfca,#ffdac4,#ffd6bf,#ffd2ba,#ffceb5,#ffcab1,#ffc6ac,#ffc3a8,#ffbfa3,#ffbc9f,#ffb89b,#ffb597,#ffb293,#ffaf8f,#ffac8b,#ffa988,#ffa784,#ffa480,#ffa17c,#ff9f79,#ff9c75,#ff9a72,#ff976e,#ff956a,#ff9367,#ff9163,#ff8e5f,#ff8c5c,#ff8a58,#ff8854,#ff8650,#ff844c,#ff8248,#ff8044,#ff7e40,#ff7c3b,#ff7a36,#ff7831,#ff762b,#ff7425,#ff731d,#ff7114,#ff6f04,#ff6e00,#ff6e00,#ff6e00,#ff6e00,#ff6d00)"></i><i style="left:25px;top:408px;width:530px;background:linear-gradient(90deg,#00f5ff,#00f5ff,#00f5ff,#00f5ff,#00f5ff,#00f5ff,#00f5ff,#00f5ff,#00f6ff,#00f6ff,#00f6ff,#00f6ff,#00f6ff,#00f6ff,#00f6ff,#00f6ff,#00f6ff,#00f7ff,#00f7ff,#00f7ff,#00f7ff,#00f7ff,#00f8ff,#00f8ff,#00f8ff,#00f8ff,#00f8ff,#00f9ff,#00f9ff,#00f9ff,#00faff,#00faff,#22fbff,#42fbff,#56fcff,#67fdff,#75fdff,#81feff,#8cffff,#97fffe,#a0fffe,#a9fffd,#b2fffc,#bafffb,#c2fffa,#cafff9,#d1fff9,#d8fff8,#dffff7,#e6fff6,#edfff5,#f4fff4,#fafff3,#fffdf0,#fff7e9,#fff1e2,#ffecdc,#ffe6d6,#ffe1d1,#ffddcb,#ffd8c6,#ffd4c1,#ffd0bc,#ffccb7,#ffc8b2,#ffc4ae,#ffc0a9,#ffbda5,#ffbaa1,#ffb69d,#ffb399,#ffb095,#ffad91,#ffaa8d,#ffa789,#ffa586,#ffa282,#ff9f7e,#ff9d7b,#ff9a77,#ff9874,#ff9670,#ff936d,#ff9169,#ff8f65,#ff8c62,#ff8a5e,#ff885b,#ff8657,#ff8453,#ff824f,#ff804b,#ff7e47,#ff7c43,#ff7a3f,#ff783a,#ff7635,#ff7430,#ff722a,#ff7124,#ff6f1c,#ff6d12,#ff6b02,#ff6b00,#ff6b00,#ff6b00,#ff6a00)"></i><i style="left:25px;top:412px;width:535px;background:linear-gradient(90deg,#00f4ff,#00f4ff,#00f4ff,#00f4ff,#00f4ff,#00f4ff,#00f4ff,#00f4ff,#00f4ff,#00f4ff,#00f4ff,#00f4ff,#00f4ff,#00f4ff,#00f5ff,#00f5ff,#00f5ff,#00f5ff,#00f5ff,#00f5ff,#00f5ff,#00f5ff,#00f5ff,#00f6ff,#00f6ff,#00f6ff,#00f6ff,#00f6ff,#00f6ff,#00f7ff,#00f7ff,#00f7ff,#27f8ff,#44f8ff,#58f9ff,#68faff,#75faff,#81fbff,#8dfcff,#97fcff,#a1fdff,#abfeff,#b4feff,#bcffff,#c4fffe,#ccfffd,#d4fffc,#dbfffb,#e2fffa,#e9fffa,#f0fff9,#f6fff8,#fdfff7,#fffaf1,#fff4ea,#ffefe4,#ffe9de,#ffe4d8,#ffdfd2,#ffdacd,#ffd6c7,#ffd2c2,#ffcdbd,#ffc9b8,#ffc6b4,#ffc2af,#ffbeab,#ffbba7,#ffb8a3,#ffb49e,#ffb19a,#ffae97,#ffab93,#ffa88f,#ffa58b,#ffa388,#ffa084,#ff9d80,#ff9b7d,#ff9879,#ff9676,#ff9472,#ff916f,#ff8f6b,#ff8d68,#ff8a64,#ff8861,#ff865d,#ff8459,#ff8256,#ff8052,#ff7e4e,#ff7c4a,#ff7a46,#ff7842,#ff763e,#ff7439,#ff7234,#ff702f,#ff6f29,#ff6d23,#ff6b1b,#ff6910,#ff6700,#ff6700,#ff6700,#ff6700,#ff6700)"></i><i style="left:25px;top:416px;width:540px;background:linear-gradient(90deg,#00f2ff,#00f3ff,#00f3ff,#00f3ff,#00f3ff,#00f3ff,#00f3ff,#00f3ff,#00f3ff,#00f3ff,#00f3ff,#00f3ff,#00f3ff,#00f3ff,#00f3ff,#00f3ff,#00f3ff,#00f3ff,#00f3ff,#00f3ff,#00f3ff,#00f3ff,#00f3ff,#00f3ff,#00f3ff,#00f4ff,#00f4ff,#00f4ff,#00f4ff,#00f4ff,#00f4ff,#00f4ff,#2bf5ff,#46f5ff,#59f6ff,#68f6ff,#76f7ff,#82f8ff,#8df8ff,#97f9ff,#a1faff,#aafaff,#b3fbff,#bcfcff,#c5fcff,#cdfdff,#d5feff,#ddffff,#e4fffe,#ebfffd,#f2fffd,#f9fffc,#fffefa,#fff8f3,#fff2ec,#ffece5,#ffe7df,#ffe2d9,#ffddd3,#ffd8ce,#ffd4c9,#ffcfc4,#ffcbbf,#ffc7ba,#ffc3b5,#ffc0b1,#ffbcad,#ffb9a8,#ffb5a4,#ffb2a0,#ffaf9c,#ffac98,#ffa994,#ffa691,#ffa38d,#ffa189,#ff9e86,#ff9b82,#ff997f,#ff967b,#ff9478,#ff9274,#ff8f71,#ff8d6d,#ff8b6a,#ff8966,#ff8663,#ff845f,#ff825c,#ff8058,#ff7e55,#ff7c51,#ff7a4d,#ff7849,#ff7645,#ff7441,#ff723d,#ff7038,#ff6e33,#ff6d2e,#ff6b28,#ff6922,#ff671a,#ff650f,#ff6400,#ff6400,#ff6400,#ff6400,#ff6400)"></i><i style="left:30px;top:420px;width:540px;background:linear-gradient(90deg,#00f1ff,#00f1ff,#00f1ff,#00f1ff,#00f1ff,#00f1ff,#00f1ff,#00f1ff,#00f1ff,#00f1ff,#00f1ff,#00f1ff,#00f1ff,#00f1ff,#00f1ff,#00f1ff,#00f1ff,#00f1ff,#00f1ff,#00f1ff,#00f1ff,#00f1ff,#00f1ff,#00f1ff,#00f1ff,#00f1ff,#00f1ff,#00f1ff,#00f1ff,#00f1ff,#00f1ff,#2ef2ff,#48f2ff,#5af3ff,#69f3ff,#76f4ff,#82f4ff,#8df5ff,#97f6ff,#a1f6ff,#aaf7ff,#b3f7ff,#bcf8ff,#c4f9ff,#ccfaff,#d4faff,#dcfbff,#e4fcff,#ecfdff,#f4feff,#fbfeff,#fffbfb,#fff5f4,#ffefed,#ffeae7,#ffe4e0,#ffdfdb,#ffdad5,#ffd6cf,#ffd1ca,#ffcdc5,#ffc9c0,#ffc5bc,#ffc1b7,#ffbdb2,#ffbaae,#ffb7aa,#ffb3a6,#ffb0a2,#ffad9e,#ffaa9a,#ffa796,#ffa492,#ffa18f,#ff9f8b,#ff9c88,#ff9984,#ff9780,#ff947d,#ff927a,#ff9076,#ff8d73,#ff8b6f,#ff896c,#ff8768,#ff8465,#ff8262,#ff805e,#ff7e5b,#ff7c57,#ff7a54,#ff7850,#ff764c,#ff7448,#ff7244,#ff7040,#ff6e3c,#ff6c37,#ff6b32,#ff692d,#ff6727,#ff6521,#ff6318,#ff610d,#ff6000,#ff6000,#ff6000,#ff6000,#ff6000)"></i><i style="left:30px;top:424px;width:545px;background:linear-gradient(90deg,#00f0ff,#00f0ff,#00f0ff,#00f0ff,#00f0ff,#00f0ff,#00f0ff,#00f0ff,#00f0ff,#00f0ff,#00f0ff,#00f0ff,#00f0ff,#00f0ff,#00f0ff,#00f0ff,#00efff,#00efff,#00efff,#00efff,#00efff,#00efff,#00efff,#00efff,#00efff,#00efff,#00efff,#00efff,#00eeff,#00eeff,#00eeff,#32efff,#4aefff,#5bf0ff,#6af0ff,#77f1ff,#83f1ff,#8df2ff,#97f2ff,#a1f3ff,#aaf3ff,#b3f4ff,#bbf5ff,#c4f5ff,#ccf6ff,#d4f7ff,#dbf7ff,#e3f8ff,#ebf9ff,#f2faff,#fafaff,#fff9fc,#fff2f5,#ffedee,#ffe7e8,#ffe2e2,#ffdddc,#ffd8d6,#ffd3d1,#ffcfcc,#ffcbc7,#ffc7c2,#ffc3bd,#ffbfb8,#ffbbb4,#ffb8b0,#ffb4ab,#ffb1a7,#ffaea3,#ffab9f,#ffa89c,#ffa598,#ffa294,#ff9f90,#ff9d8d,#ff9a89,#ff9786,#ff9582,#ff927f,#ff907b,#ff8e78,#ff8b75,#ff8971,#ff876e,#ff846b,#ff8267,#ff8064,#ff7e60,#ff7c5d,#ff7a5a,#ff7856,#ff7652,#ff744f,#ff724b,#ff7047,#ff6e43,#ff6c3f,#ff6a3b,#ff6836,#ff6731,#ff652c,#ff6326,#ff611f,#ff5f17,#ff5d0b,#ff5c00,#ff5c00,#ff5c00,#ff5d00,#ff5d00)"></i><i style="left:30px;top:428px;width:550px;background:linear-gradient(90deg,#00efff,#00efff,#00efff,#00efff,#00efff,#00efff,#00efff,#00eeff,#00eeff,#00eeff,#00eeff,#00eeff,#00eeff,#00eeff,#00eeff,#00eeff,#00eeff,#00eeff,#00edff,#00edff,#00edff,#00edff,#00edff,#00edff,#00edff,#00ecff,#00ecff,#00ecff,#00ecff,#00ebff,#00ebff,#34ecff,#4becff,#5dedff,#6bedff,#77edff,#83eeff,#8deeff,#97efff,#a1f0ff,#aaf0ff,#b2f1ff,#bbf1ff,#c3f2ff,#cbf2ff,#d3f3ff,#dbf4ff,#e2f4ff,#eaf5ff,#f1f6ff,#f9f6ff,#fff6fe,#fff0f7,#ffeaf0,#ffe4e9,#ffdfe3,#ffdadd,#ffd5d8,#ffd1d2,#ffcccd,#ffc8c8,#ffc4c3,#ffc0be,#ffbdba,#ffb9b5,#ffb6b1,#ffb2ad,#ffafa9,#ffaca5,#ffa9a1,#ffa69d,#ffa399,#ffa096,#ff9d92,#ff9b8f,#ff988b,#ff9588,#ff9384,#ff9081,#ff8e7d,#ff8c7a,#ff8977,#ff8773,#ff8570,#ff826d,#ff8069,#ff7e66,#ff7c63,#ff7a5f,#ff785c,#ff7658,#ff7455,#ff7251,#ff704e,#ff6e4a,#ff6c46,#ff6a42,#ff683e,#ff663a,#ff6435,#ff6330,#ff612b,#ff5f25,#ff5d1e,#ff5b16,#ff5909,#ff5800,#ff5900,#ff5900,#ff5900,#ff5900)"></i><i style="left:30px;top:432px;width:550px;background:linear-gradient(90deg,#00eeff,#00eeff,#00edff,#00edff,#00edff,#00edff,#00edff,#00edff,#00edff,#00edff,#00edff,#00edff,#00ecff,#00ecff,#00ecff,#00ecff,#00ecff,#00ecff,#00ecff,#00ebff,#00ebff,#00ebff,#00ebff,#00ebff,#00eaff,#00eaff,#00eaff,#00e9ff,#00e9ff,#00e9ff,#0be8ff,#37e9ff,#4de9ff,#5ee9ff,#6ceaff,#78eaff,#83ebff,#8eebff,#97ecff,#a1ecff,#aaedff,#b2edff,#baeeff,#c3eeff,#cbefff,#d2efff,#daf0ff,#e1f1ff,#e9f1ff,#f0f2ff,#f8f3ff,#fff3ff,#ffedf8,#ffe7f1,#ffe2eb,#ffdde4,#ffd8df,#ffd3d9,#ffced4,#ffcace,#ffc6c9,#ffc2c5,#ffbec0,#ffbabb,#ffb7b7,#ffb3b3,#ffb0ae,#ffadaa,#ffaaa6,#ffa7a3,#ffa49f,#ffa19b,#ff9e97,#ff9b94,#ff9890,#ff968d,#ff9389,#ff9186,#ff8e82,#ff8c7f,#ff897c,#ff8778,#ff8575,#ff8372,#ff806f,#ff7e6b,#ff7c68,#ff7a65,#ff7861,#ff765e,#ff745b,#ff7257,#ff7054,#ff6e50,#ff6c4d,#ff6a49,#ff6845,#ff6641,#ff643d,#ff6239,#ff6034,#ff5e30,#ff5d2a,#ff5b24,#ff591d,#ff5714,#ff5507,#ff5500,#ff5500,#ff5500,#ff5500)"></i><i style="left:30px;top:436px;width:555px;background:linear-gradient(90deg,#00ecff,#00ecff,#00ecff,#00ecff,#00ecff,#00ecff,#00ecff,#00ecff,#00ebff,#00ebff,#00ebff,#00ebff,#00ebff,#00ebff,#00ebff,#00eaff,#00eaff,#00eaff,#00eaff,#00e9ff,#00e9ff,#00e9ff,#00e9ff,#00e8ff,#00e8ff,#00e8ff,#00e7ff,#00e7ff,#00e6ff,#00e6ff,#14e5ff,#3ae6ff,#4fe6ff,#5fe6ff,#6ce7ff,#78e7ff,#84e8ff,#8ee8ff,#97e9ff,#a1e9ff,#a9e9ff,#b2eaff,#baeaff,#c2ebff,#caebff,#d2ecff,#d9ecff,#e1edff,#e8eeff,#efeeff,#f7efff,#feefff,#ffeaf9,#ffe5f2,#ffdfec,#ffdae6,#ffd5e0,#ffd0da,#ffccd5,#ffc8d0,#ffc4cb,#ffc0c6,#ffbcc1,#ffb8bd,#ffb4b8,#ffb1b4,#ffaeb0,#ffabac,#ffa7a8,#ffa4a4,#ffa1a0,#ff9e9d,#ff9c99,#ff9995,#ff9692,#ff948e,#ff918b,#ff8f87,#ff8c84,#ff8a81,#ff877e,#ff857a,#ff8377,#ff8074,#ff7e70,#ff7c6d,#ff7a6a,#ff7867,#ff7664,#ff7460,#ff725d,#ff705a,#ff6e56,#ff6c53,#ff6a4f,#ff684c,#ff6648,#ff6444,#ff6240,#ff603c,#ff5e38,#ff5c34,#ff5a2f,#ff5829,#ff5723,#ff551c,#ff5313,#ff5105,#ff5100,#ff5100,#ff5100,#ff5100)"></i><i style="left:30px;top:440px;width:560px;background:linear-gradient(90deg,#00ebff,#00ebff,#00ebff,#00ebff,#00ebff,#00ebff,#00eaff,#00eaff,#00eaff,#00eaff,#00eaff,#00e9ff,#00e9ff,#00e9ff,#00e9ff,#00e9ff,#00e8ff,#00e8ff,#00e8ff,#00e7ff,#00e7ff,#00e7ff,#00e6ff,#00e6ff,#00e6ff,#00e5ff,#00e5ff,#00e4ff,#00e4ff,#00e3ff,#1be2ff,#3ce3ff,#50e3ff,#60e3ff,#6de4ff,#79e4ff,#84e5ff,#8ee5ff,#97e5ff,#a1e6ff,#a9e6ff,#b2e7ff,#bae7ff,#c2e7ff,#c9e8ff,#d1e8ff,#d8e9ff,#e0e9ff,#e7eaff,#eeeaff,#f6ebff,#fdebff,#ffe8fa,#ffe2f3,#ffdded,#ffd7e7,#ffd3e1,#ffcedc,#ffc9d6,#ffc5d1,#ffc1cc,#ffbdc7,#ffb9c3,#ffb6be,#ffb2ba,#ffafb6,#ffabb1,#ffa8ad,#ffa5a9,#ffa2a6,#ff9fa2,#ff9c9e,#ff999a,#ff9797,#ff9493,#ff9190,#ff8f8d,#ff8c89,#ff8a86,#ff8883,#ff857f,#ff837c,#ff8179,#ff7e76,#ff7c72,#ff7a6f,#ff786c,#ff7669,#ff7366,#ff7162,#ff6f5f,#ff6d5c,#ff6b59,#ff6955,#ff6752,#ff654e,#ff634b,#ff6147,#ff6043,#ff5e40,#ff5c3b,#ff5a37,#ff5833,#ff562e,#ff5428,#ff5222,#ff501b,#ff4e12,#ff4c03,#ff4c00,#ff4d00,#ff4d00,#ff4e00)"></i><i style="left:35px;top:444px;width:560px;background:linear-gradient(90deg,#00eaff,#00eaff,#00e9ff,#00e9ff,#00e9ff,#00e9ff,#00e9ff,#00e9ff,#00e8ff,#00e8ff,#00e8ff,#00e8ff,#00e7ff,#00e7ff,#00e7ff,#00e7ff,#00e6ff,#00e6ff,#00e6ff,#00e5ff,#00e5ff,#00e4ff,#00e4ff,#00e3ff,#00e3ff,#00e2ff,#00e1ff,#00e1ff,#00e0ff,#20e0ff,#3ee0ff,#51e0ff,#61e1ff,#6ee1ff,#79e1ff,#84e1ff,#8ee2ff,#98e2ff,#a0e2ff,#a9e3ff,#b1e3ff,#b9e4ff,#c1e4ff,#c9e4ff,#d0e5ff,#d8e5ff,#dfe6ff,#e6e6ff,#ede7ff,#f5e7ff,#fce8ff,#ffe5fb,#ffdff5,#ffdaee,#ffd5e8,#ffd0e2,#ffcbdd,#ffc7d8,#ffc3d2,#ffbfcd,#ffbbc9,#ffb7c4,#ffb3c0,#ffb0bb,#ffacb7,#ffa9b3,#ffa6af,#ffa3ab,#ffa0a7,#ff9da3,#ff9aa0,#ff979c,#ff9598,#ff9295,#ff8f92,#ff8d8e,#ff8a8b,#ff8887,#ff8584,#ff8381,#ff817e,#ff7e7b,#ff7c77,#ff7a74,#ff7871,#ff756e,#ff736b,#ff7168,#ff6f64,#ff6d61,#ff6b5e,#ff695b,#ff6758,#ff6554,#ff6351,#ff614d,#ff5f4a,#ff5d46,#ff5b42,#ff593f,#ff573b,#ff5536,#ff5332,#ff522d,#ff5027,#ff4e21,#ff4c1a,#ff4a10,#ff4801,#ff4800,#ff4900,#ff4900,#ff4900)"></i><i style="left:35px;top:448px;width:565px;background:linear-gradient(90deg,#00e9ff,#00e8ff,#00e8ff,#00e8ff,#00e8ff,#00e8ff,#00e7ff,#00e7ff,#00e7ff,#00e7ff,#00e6ff,#00e6ff,#00e6ff,#00e5ff,#00e5ff,#00e5ff,#00e4ff,#00e4ff,#00e4ff,#00e3ff,#00e3ff,#00e2ff,#00e2ff,#00e1ff,#00e0ff,#00e0ff,#00dfff,#00deff,#00ddff,#24ddff,#40ddff,#53ddff,#62deff,#6edeff,#7adeff,#84deff,#8edfff,#98dfff,#a0dfff,#a9e0ff,#b1e0ff,#b9e0ff,#c1e1ff,#c8e1ff,#d0e1ff,#d7e2ff,#dee2ff,#e5e3ff,#ece3ff,#f4e3ff,#fbe4ff,#ffe2fd,#ffdcf6,#ffd7f0,#ffd2e9,#ffcde4,#ffc9de,#ffc4d9,#ffc0d4,#ffbccf,#ffb8ca,#ffb5c5,#ffb1c1,#ffaebd,#ffaab8,#ffa7b4,#ffa4b0,#ffa1ac,#ff9ea8,#ff9ba5,#ff98a1,#ff959d,#ff929a,#ff9096,#ff8d93,#ff8a90,#ff888c,#ff8589,#ff8386,#ff8183,#ff7e7f,#ff7c7c,#ff7a79,#ff7876,#ff7573,#ff7370,#ff716d,#ff6f6a,#ff6d66,#ff6b63,#ff6960,#ff675d,#ff655a,#ff6356,#ff6153,#ff5f50,#ff5d4c,#ff5b49,#ff5945,#ff5742,#ff553e,#ff533a,#ff5135,#ff4f31,#ff4d2c,#ff4b26,#ff4920,#ff4719,#ff450f,#ff4300,#ff4400,#ff4400,#ff4500,#ff4500)"></i><i style="left:35px;top:452px;width:565px;background:linear-gradient(90deg,#00e7ff,#00e7ff,#00e7ff,#00e7ff,#00e6ff,#00e6ff,#00e6ff,#00e6ff,#00e5ff,#00e5ff,#00e5ff,#00e4ff,#00e4ff,#00e4ff,#00e3ff,#00e3ff,#00e3ff,#00e2ff,#00e2ff,#00e1ff,#00e0ff,#00e0ff,#00dfff,#00dfff,#00deff,#00ddff,#00dcff,#00dbff,#00daff,#28daff,#42daff,#54daff,#62dbff,#6fdbff,#7adbff,#85dbff,#8edcff,#98dcff,#a0dcff,#a9dcff,#b1ddff,#b9ddff,#c0ddff,#c8deff,#cfdeff,#d6deff,#dedfff,#e5dfff,#ecdfff,#f3e0ff,#f9e0ff,#ffdffe,#ffdaf7,#ffd4f1,#ffd0eb,#ffcbe5,#ffc6df,#ffc2da,#ffbed5,#ffbad0,#ffb6cb,#ffb2c7,#ffafc2,#ffabbe,#ffa8ba,#ffa5b6,#ffa1b2,#ff9eae,#ff9baa,#ff98a6,#ff95a3,#ff939f,#ff909b,#ff8d98,#ff8b95,#ff8891,#ff868e,#ff838b,#ff8187,#ff7e84,#ff7c81,#ff7a7e,#ff787b,#ff7578,#ff7375,#ff7172,#ff6f6e,#ff6d6b,#ff6b68,#ff6865,#ff6662,#ff645f,#ff625c,#ff6059,#ff5e55,#ff5c52,#ff5a4f,#ff584b,#ff5648,#ff5444,#ff5241,#ff503d,#ff4e39,#ff4c35,#ff4a30,#ff482b,#ff4626,#ff441f,#ff4218,#ff400d,#ff3e00,#ff3f00,#ff4000,#ff4000)"></i><i style="left:35px;top:456px;width:570px;background:linear-gradient(90deg,#00e6ff,#00e6ff,#00e6ff,#00e5ff,#00e5ff,#00e5ff,#00e5ff,#00e4ff,#00e4ff,#00e4ff,#00e3ff,#00e3ff,#00e2ff,#00e2ff,#00e2ff,#00e1ff,#00e1ff,#00e0ff,#00e0ff,#00dfff,#00deff,#00deff,#00ddff,#00dcff,#00dbff,#00daff,#00daff,#00d8ff,#00d7ff,#2bd7ff,#44d7ff,#55d7ff,#63d8ff,#70d8ff,#7bd8ff,#85d8ff,#8fd9ff,#98d9ff,#a0d9ff,#a9d9ff,#b1d9ff,#b8daff,#c0daff,#c7daff,#cfdaff,#d6dbff,#dddbff,#e4dbff,#ebdcff,#f2dcff,#f8dcff,#ffdcff,#ffd7f8,#ffd2f2,#ffcdec,#ffc8e6,#ffc4e1,#ffbfdb,#ffbbd6,#ffb7d1,#ffb3cd,#ffb0c8,#ffacc4,#ffa9bf,#ffa5bb,#ffa2b7,#ff9fb3,#ff9caf,#ff99ab,#ff96a8,#ff93a4,#ff90a0,#ff8e9d,#ff8b99,#ff8896,#ff8693,#ff838f,#ff818c,#ff7f89,#ff7c86,#ff7a83,#ff7780,#ff757d,#ff7379,#ff7176,#ff6f73,#ff6c70,#ff6a6d,#ff686a,#ff6667,#ff6464,#ff6261,#ff605e,#ff5e5b,#ff5c58,#ff5a54,#ff5851,#ff564e,#ff544b,#ff5247,#ff4f44,#ff4d40,#ff4b3c,#ff4938,#ff4734,#ff452f,#ff432a,#ff4125,#ff3f1e,#ff3d16,#ff3a0c,#ff3900,#ff3a00,#ff3b00,#ff3b00)"></i><i style="left:35px;top:460px;width:575px;background:linear-gradient(90deg,#00e5ff,#00e5ff,#00e4ff,#00e4ff,#00e4ff,#00e3ff,#00e3ff,#00e3ff,#00e2ff,#00e2ff,#00e2ff,#00e1ff,#00e1ff,#00e0ff,#00e0ff,#00dfff,#00dfff,#00deff,#00deff,#00ddff,#00dcff,#00dcff,#00dbff,#00daff,#00d9ff,#00d8ff,#00d7ff,#00d6ff,#00d4ff,#2ed4ff,#46d4ff,#56d5ff,#64d5ff,#70d5ff,#7bd5ff,#85d5ff,#8fd5ff,#98d6ff,#a0d6ff,#a8d6ff,#b0d6ff,#b8d6ff,#bfd7ff,#c7d7ff,#ced7ff,#d5d7ff,#dcd8ff,#e3d8ff,#ead8ff,#f1d8ff,#f7d9ff,#fed9ff,#ffd4f9,#ffcff3,#ffcaed,#ffc6e7,#ffc1e2,#ffbddd,#ffb9d7,#ffb5d3,#ffb1ce,#ffadc9,#ffaac5,#ffa6c1,#ffa3bc,#ffa0b8,#ff9db4,#ff9ab0,#ff97ad,#ff94a9,#ff91a5,#ff8ea2,#ff8b9e,#ff899b,#ff8698,#ff8494,#ff8191,#ff7f8e,#ff7c8b,#ff7a87,#ff7784,#ff7581,#ff737e,#ff717b,#ff6e78,#ff6c75,#ff6a72,#ff686f,#ff666c,#ff6469,#ff6166,#ff5f63,#ff5d60,#ff5b5d,#ff595a,#ff5757,#ff5554,#ff5350,#ff514d,#ff4f4a,#ff4d46,#ff4b43,#ff483f,#ff463b,#ff4437,#ff4233,#ff402e,#ff3e29,#ff3b24,#ff391d,#ff3715,#ff340a,#ff3300,#ff3400,#ff3500,#ff3600)"></i><i style="left:35px;top:464px;width:580px;background:linear-gradient(90deg,#00e4ff,#00e3ff,#00e3ff,#00e3ff,#00e2ff,#00e2ff,#00e2ff,#00e1ff,#00e1ff,#00e0ff,#00e0ff,#00e0ff,#00dfff,#00dfff,#00deff,#00deff,#00ddff,#00dcff,#00dcff,#00dbff,#00daff,#00d9ff,#00d8ff,#00d8ff,#00d6ff,#00d5ff,#00d4ff,#00d3ff,#00d1ff,#31d2ff,#47d2ff,#57d2ff,#65d2ff,#71d2ff,#7cd2ff,#86d2ff,#8fd2ff,#98d3ff,#a0d3ff,#a8d3ff,#b0d3ff,#b8d3ff,#bfd3ff,#c6d3ff,#cdd4ff,#d4d4ff,#dbd4ff,#e2d4ff,#e9d4ff,#f0d5ff,#f6d5ff,#fdd5ff,#ffd1fa,#ffccf4,#ffc7ee,#ffc3e8,#ffbee3,#ffbade,#ffb6d9,#ffb2d4,#ffaecf,#ffabcb,#ffa7c6,#ffa4c2,#ffa0be,#ff9dba,#ff9ab6,#ff97b2,#ff94ae,#ff91aa,#ff8ea7,#ff8ca3,#ff89a0,#ff869c,#ff8499,#ff8196,#ff7f92,#ff7c8f,#ff7a8c,#ff7789,#ff7586,#ff7383,#ff7080,#ff6e7d,#ff6c7a,#ff6a77,#ff6774,#ff6571,#ff636e,#ff616b,#ff5f68,#ff5d65,#ff5b62,#ff595f,#ff565c,#ff5459,#ff5256,#ff5053,#ff4e4f,#ff4c4c,#ff4a49,#ff4845,#ff4542,#ff433e,#ff413a,#ff3f36,#ff3d32,#ff3a2d,#ff3828,#ff3523,#ff331c,#ff3014,#ff2e08,#ff2d00,#ff2e00,#ff3000,#ff3100)"></i><i style="left:40px;top:468px;width:580px;background:linear-gradient(90deg,#00e2ff,#00e2ff,#00e1ff,#00e1ff,#00e1ff,#00e0ff,#00e0ff,#00dfff,#00dfff,#00deff,#00deff,#00ddff,#00ddff,#00dcff,#00dcff,#00dbff,#00daff,#00daff,#00d9ff,#00d8ff,#00d7ff,#00d6ff,#00d5ff,#00d4ff,#00d3ff,#00d1ff,#00d0ff,#0acfff,#34cfff,#49cfff,#59cfff,#66cfff,#71cfff,#7ccfff,#86cfff,#8fcfff,#98cfff,#a0d0ff,#a8d0ff,#b0d0ff,#b7d0ff,#bfd0ff,#c6d0ff,#cdd0ff,#d4d0ff,#dbd1ff,#e1d1ff,#e8d1ff,#efd1ff,#f5d1ff,#fcd1ff,#ffcffc,#ffcaf5,#ffc5ef,#ffc0ea,#ffbce4,#ffb8df,#ffb3da,#ffb0d5,#ffacd0,#ffa8cc,#ffa5c7,#ffa1c3,#ff9ebf,#ff9bbb,#ff98b7,#ff95b3,#ff92af,#ff8fac,#ff8ca8,#ff89a5,#ff87a1,#ff849e,#ff819a,#ff7f97,#ff7c94,#ff7a91,#ff778e,#ff758a,#ff7387,#ff7084,#ff6e81,#ff6c7e,#ff697b,#ff6778,#ff6575,#ff6373,#ff6170,#ff5e6d,#ff5c6a,#ff5a67,#ff5864,#ff5661,#ff545e,#ff515b,#ff4f58,#ff4d55,#ff4b52,#ff494e,#ff474b,#ff4448,#ff4244,#ff4041,#ff3e3d,#ff3b39,#ff3935,#ff3731,#ff342d,#ff3127,#ff2f22,#ff2c1b,#ff2913,#ff2606,#ff2600,#ff2800,#ff2900,#ff2b00)"></i><i style="left:40px;top:472px;width:580px;background:linear-gradient(90deg,#00e1ff,#00e0ff,#00e0ff,#00e0ff,#00dfff,#00dfff,#00deff,#00deff,#00ddff,#00ddff,#00dcff,#00dcff,#00dbff,#00dbff,#00daff,#00d9ff,#00d8ff,#00d8ff,#00d7ff,#00d6ff,#00d5ff,#00d4ff,#00d3ff,#00d2ff,#00d0ff,#00cfff,#00cdff,#13ccff,#36ccff,#4accff,#5accff,#67ccff,#72ccff,#7cccff,#86ccff,#8fccff,#98ccff,#a0ccff,#a8cdff,#b0cdff,#b7cdff,#becdff,#c5cdff,#cccdff,#d3cdff,#dacdff,#e1cdff,#e7cdff,#eecdff,#f4cdff,#fbceff,#ffccfd,#ffc7f6,#ffc2f0,#ffbdeb,#ffb9e5,#ffb5e0,#ffb1db,#ffadd6,#ffa9d2,#ffa6cd,#ffa2c9,#ff9fc4,#ff9bc0,#ff98bc,#ff95b8,#ff92b4,#ff8fb1,#ff8cad,#ff89a9,#ff87a6,#ff84a3,#ff819f,#ff7f9c,#ff7c99,#ff7a95,#ff7792,#ff758f,#ff728c,#ff7089,#ff6e86,#ff6b83,#ff6980,#ff677d,#ff657a,#ff6277,#ff6074,#ff5e71,#ff5c6e,#ff596c,#ff5769,#ff5566,#ff5363,#ff5160,#ff4f5d,#ff4c5a,#ff4a57,#ff4854,#ff4651,#ff434e,#ff414a,#ff3f47,#ff3c44,#ff3a40,#ff383c,#ff3539,#ff3335,#ff3030,#ff2d2c,#ff2a27,#ff2721,#ff241a,#ff2112,#ff1d04,#ff1d00,#ff2000,#ff2200)"></i><i style="left:40px;top:476px;width:585px;background:linear-gradient(90deg,#00dfff,#00dfff,#00dfff,#00deff,#00deff,#00ddff,#00ddff,#00dcff,#00dcff,#00dbff,#00dbff,#00daff,#00daff,#00d9ff,#00d8ff,#00d7ff,#00d7ff,#00d6ff,#00d5ff,#00d4ff,#00d3ff,#00d2ff,#00d0ff,#00cfff,#00ceff,#00ccff,#00caff,#19c9ff,#38c9ff,#4cc9ff,#5bc9ff,#67c9ff,#73c9ff,#7dc9ff,#86c9ff,#8fc9ff,#98c9ff,#a0c9ff,#a8c9ff,#afc9ff,#b7c9ff,#becaff,#c5caff,#cccaff,#d3caff,#d9caff,#e0caff,#e6caff,#edcaff,#f3caff,#facaff,#ffc9fe,#ffc4f7,#ffbff2,#ffbbec,#ffb6e6,#ffb2e1,#ffaedc,#ffaad7,#ffa7d3,#ffa3ce,#ffa0ca,#ff9cc6,#ff99c1,#ff96bd,#ff93ba,#ff90b6,#ff8db2,#ff8aae,#ff87ab,#ff84a7,#ff82a4,#ff7fa1,#ff7c9d,#ff7a9a,#ff7797,#ff7594,#ff7291,#ff708d,#ff6d8a,#ff6b87,#ff6984,#ff6681,#ff647f,#ff627c,#ff6079,#ff5d76,#ff5b73,#ff5970,#ff576d,#ff546a,#ff5268,#ff5065,#ff4e62,#ff4b5f,#ff495c,#ff4759,#ff4556,#ff4253,#ff4050,#ff3e4d,#ff3b49,#ff3946,#ff3643,#ff343f,#ff313c,#ff2e38,#ff2b34,#ff282f,#ff252b,#ff2226,#ff1e20,#ff1a19,#ff1510,#ff1003,#ff1200,#ff1500,#ff1800)"></i><i style="left:40px;top:480px;width:580px;background:linear-gradient(90deg,#00deff,#00deff,#00ddff,#00ddff,#00dcff,#00dcff,#00dbff,#00dbff,#00daff,#00daff,#00d9ff,#00d8ff,#00d8ff,#00d7ff,#00d6ff,#00d5ff,#00d5ff,#00d4ff,#00d3ff,#00d2ff,#00d1ff,#00cfff,#00ceff,#00cdff,#00cbff,#00c9ff,#00c8ff,#1ec6ff,#3bc6ff,#4dc6ff,#5cc6ff,#68c6ff,#73c6ff,#7dc6ff,#87c6ff,#8fc6ff,#98c6ff,#a0c6ff,#a8c6ff,#afc6ff,#b6c6ff,#bec6ff,#c4c6ff,#cbc6ff,#d2c6ff,#d9c6ff,#dfc6ff,#e6c6ff,#ecc6ff,#f3c6ff,#f9c6ff,#ffc6ff,#ffc1f9,#ffbcf3,#ffb8ed,#ffb4e8,#ffafe2,#ffabdd,#ffa8d9,#ffa4d4,#ffa0cf,#ff9dcb,#ff9ac7,#ff96c3,#ff93bf,#ff90bb,#ff8db7,#ff8ab3,#ff87b0,#ff84ac,#ff82a9,#ff7fa5,#ff7ca2,#ff7a9f,#ff779b,#ff7598,#ff7295,#ff7092,#ff6d8f,#ff6b8c,#ff6889,#ff6686,#ff6483,#ff6180,#ff5f7d,#ff5d7a,#ff5b77,#ff5875,#ff5672,#ff546f,#ff516c,#ff4f69,#ff4d66,#ff4b64,#ff4861,#ff465e,#ff445b,#ff4158,#ff3f55,#ff3c52,#ff3a4f,#ff374c,#ff3549,#ff3245,#ff2f42,#ff2c3e,#ff293b,#ff2637,#ff2333,#ff1f2f,#ff1b2a,#ff1725,#ff111f,#ff0a18,#ff020f,#ff0007,#ff0001)"></i><i style="left:40px;top:484px;width:570px;background:linear-gradient(90deg,#00ddff,#00dcff,#00dcff,#00dcff,#00dbff,#00dbff,#00daff,#00d9ff,#00d9ff,#00d8ff,#00d8ff,#00d7ff,#00d6ff,#00d5ff,#00d4ff,#00d4ff,#00d3ff,#00d2ff,#00d1ff,#00d0ff,#00ceff,#00cdff,#00ccff,#00caff,#00c8ff,#00c7ff,#00c5ff,#22c4ff,#3dc4ff,#4ec4ff,#5cc4ff,#69c4ff,#74c3ff,#7ec3ff,#87c3ff,#90c3ff,#98c3ff,#a0c3ff,#a8c3ff,#afc3ff,#b6c3ff,#bdc3ff,#c4c3ff,#cbc3ff,#d1c3ff,#d8c3ff,#dfc3ff,#e5c3ff,#ebc3ff,#f2c3ff,#f8c2ff,#fec2ff,#ffbefa,#ffb9f4,#ffb5ee,#ffb1e9,#ffade4,#ffa9df,#ffa5da,#ffa1d5,#ff9ed1,#ff9acc,#ff97c8,#ff94c4,#ff91c0,#ff8dbc,#ff8ab8,#ff87b5,#ff85b1,#ff82ad,#ff7faa,#ff7ca7,#ff7aa3,#ff77a0,#ff749d,#ff729a,#ff6f96,#ff6d93,#ff6a90,#ff688d,#ff668a,#ff6387,#ff6184,#ff5f82,#ff5c7f,#ff5a7c,#ff5879,#ff5576,#ff5373,#ff5171,#ff4e6e,#ff4c6b,#ff4a68,#ff4765,#ff4563,#ff4360,#ff405d,#ff3e5a,#ff3b57,#ff3954,#ff3651,#ff334e,#ff304b,#ff2e48,#ff2a45,#ff2741,#ff243e,#ff203a,#ff1c36,#ff1832,#ff132e,#ff0c29,#ff0324,#ff0020,#ff001d)"></i><i style="left:45px;top:488px;width:555px;background:linear-gradient(90deg,#00dbff,#00dbff,#00daff,#00daff,#00d9ff,#00d9ff,#00d8ff,#00d7ff,#00d7ff,#00d6ff,#00d5ff,#00d4ff,#00d4ff,#00d3ff,#00d2ff,#00d1ff,#00d0ff,#00cfff,#00cdff,#00ccff,#00cbff,#00c9ff,#00c8ff,#00c6ff,#00c4ff,#00c2ff,#26c1ff,#3ec1ff,#50c1ff,#5dc1ff,#69c1ff,#74c1ff,#7ec1ff,#87c0ff,#90c0ff,#98c0ff,#a0c0ff,#a7c0ff,#afc0ff,#b6c0ff,#bdc0ff,#c4c0ff,#cac0ff,#d1bfff,#d7bfff,#debfff,#e4bfff,#eabfff,#f1bfff,#f7bfff,#fdbfff,#ffbbfb,#ffb7f5,#ffb2ef,#ffaeea,#ffaae5,#ffa6e0,#ffa2db,#ff9fd6,#ff9bd2,#ff98cd,#ff94c9,#ff91c5,#ff8ec1,#ff8bbd,#ff88b9,#ff85b6,#ff82b2,#ff7faf,#ff7cab,#ff7aa8,#ff77a4,#ff74a1,#ff729e,#ff6f9b,#ff6d98,#ff6a95,#ff6892,#ff658f,#ff638c,#ff6089,#ff5e86,#ff5c83,#ff5980,#ff577d,#ff557b,#ff5278,#ff5075,#ff4d72,#ff4b6f,#ff496d,#ff466a,#ff4467,#ff4164,#ff3f62,#ff3c5f,#ff3a5c,#ff3759,#ff3456,#ff3253,#ff2f50,#ff2c4d,#ff284a,#ff2547,#ff2144,#ff1d40,#ff193d,#ff1439,#ff0e35,#ff0531,#ff002e,#ff002c)"></i><i style="left:45px;top:492px;width:550px;background:linear-gradient(90deg,#00daff,#00d9ff,#00d9ff,#00d8ff,#00d8ff,#00d7ff,#00d6ff,#00d6ff,#00d5ff,#00d4ff,#00d3ff,#00d3ff,#00d2ff,#00d1ff,#00d0ff,#00cfff,#00ceff,#00ccff,#00cbff,#00caff,#00c8ff,#00c7ff,#00c5ff,#00c3ff,#00c1ff,#00bfff,#29beff,#40beff,#51beff,#5ebeff,#6abeff,#75beff,#7ebeff,#87bdff,#90bdff,#98bdff,#a0bdff,#a7bdff,#afbdff,#b6bdff,#bcbdff,#c3bcff,#cabcff,#d0bcff,#d7bcff,#ddbcff,#e3bcff,#eabbff,#f0bbff,#f6bbff,#fcbbff,#ffb8fc,#ffb4f6,#ffaff0,#ffabeb,#ffa7e6,#ffa3e1,#ff9fdc,#ff9cd7,#ff98d3,#ff95cf,#ff91ca,#ff8ec6,#ff8bc2,#ff88be,#ff85bb,#ff82b7,#ff7fb3,#ff7cb0,#ff7aac,#ff77a9,#ff74a6,#ff72a3,#ff6f9f,#ff6c9c,#ff6a99,#ff6796,#ff6593,#ff6290,#ff608d,#ff5d8a,#ff5b87,#ff5985,#ff5682,#ff547f,#ff517c,#ff4f79,#ff4d77,#ff4a74,#ff4871,#ff456e,#ff436c,#ff4069,#ff3e66,#ff3b63,#ff3861,#ff365e,#ff335b,#ff3058,#ff2d55,#ff2a52,#ff264f,#ff234c,#ff1f49,#ff1a46,#ff1543,#ff0f40,#ff073c,#ff0039,#ff0037,#ff0035)"></i><i style="left:45px;top:496px;width:540px;background:linear-gradient(90deg,#00d9ff,#00d8ff,#00d7ff,#00d7ff,#00d6ff,#00d6ff,#00d5ff,#00d4ff,#00d3ff,#00d3ff,#00d2ff,#00d1ff,#00d0ff,#00cfff,#00ceff,#00cdff,#00ccff,#00caff,#00c9ff,#00c8ff,#00c6ff,#00c4ff,#00c3ff,#00c1ff,#00beff,#00bcff,#2cbcff,#42bbff,#52bbff,#5fbbff,#6bbbff,#75bbff,#7fbbff,#88bbff,#90baff,#98baff,#a0baff,#a7baff,#aebaff,#b5baff,#bcb9ff,#c3b9ff,#c9b9ff,#d0b9ff,#d6b9ff,#ddb8ff,#e3b8ff,#e9b8ff,#efb8ff,#f5b7ff,#fbb7ff,#ffb5fd,#ffb1f7,#ffacf1,#ffa8ec,#ffa4e7,#ffa0e2,#ff9ddd,#ff99d8,#ff95d4,#ff92d0,#ff8fcb,#ff8bc7,#ff88c3,#ff85c0,#ff82bc,#ff7fb8,#ff7cb5,#ff7ab1,#ff77ae,#ff74aa,#ff71a7,#ff6fa4,#ff6ca1,#ff699d,#ff679a,#ff6497,#ff6294,#ff5f91,#ff5d8f,#ff5a8c,#ff5889,#ff5686,#ff5383,#ff5180,#ff4e7e,#ff4c7b,#ff4978,#ff4775,#ff4473,#ff4270,#ff3f6d,#ff3c6b,#ff3a68,#ff3765,#ff3462,#ff3160,#ff2e5d,#ff2b5a,#ff2757,#ff2454,#ff2052,#ff1c4f,#ff174c,#ff1149,#ff0945,#ff0042,#ff0040,#ff003f)"></i><i style="left:45px;top:500px;width:530px;background:linear-gradient(90deg,#00d7ff,#00d7ff,#00d6ff,#00d5ff,#00d5ff,#00d4ff,#00d3ff,#00d3ff,#00d2ff,#00d1ff,#00d0ff,#00cfff,#00ceff,#00cdff,#00ccff,#00cbff,#00caff,#00c8ff,#00c7ff,#00c5ff,#00c4ff,#00c2ff,#00c0ff,#00beff,#00bcff,#00b9ff,#2eb9ff,#43b9ff,#53b9ff,#60b8ff,#6bb8ff,#76b8ff,#7fb8ff,#88b8ff,#90b7ff,#98b7ff,#a0b7ff,#a7b7ff,#aeb7ff,#b5b6ff,#bcb6ff,#c2b6ff,#c9b6ff,#cfb5ff,#d6b5ff,#dcb5ff,#e2b5ff,#e8b4ff,#eeb4ff,#f4b4ff,#fab3ff,#ffb2fe,#ffaef8,#ffa9f2,#ffa5ed,#ffa1e8,#ff9de3,#ff9ade,#ff96da,#ff93d5,#ff8fd1,#ff8ccd,#ff89c9,#ff85c5,#ff82c1,#ff7fbd,#ff7cb9,#ff7ab6,#ff77b2,#ff74af,#ff71ac,#ff6ea8,#ff6ca5,#ff69a2,#ff679f,#ff649c,#ff6199,#ff5f96,#ff5c93,#ff5a90,#ff578d,#ff558a,#ff5287,#ff5085,#ff4d82,#ff4b7f,#ff487c,#ff467a,#ff4377,#ff4074,#ff3e72,#ff3b6f,#ff386c,#ff356a,#ff3267,#ff2f64,#ff2c61,#ff295f,#ff255c,#ff2159,#ff1d56,#ff1854,#ff1251,#ff0b4e,#ff024b,#ff0049,#ff0047)"></i><i style="left:45px;top:504px;width:525px;background:linear-gradient(90deg,#00d6ff,#00d5ff,#00d5ff,#00d4ff,#00d3ff,#00d3ff,#00d2ff,#00d1ff,#00d0ff,#00cfff,#00ceff,#00cdff,#00ccff,#00cbff,#00caff,#00c9ff,#00c8ff,#00c6ff,#00c5ff,#00c3ff,#00c1ff,#00bfff,#00bdff,#00bbff,#00b9ff,#08b6ff,#31b6ff,#45b6ff,#54b6ff,#61b6ff,#6cb5ff,#76b5ff,#7fb5ff,#88b5ff,#90b4ff,#98b4ff,#a0b4ff,#a7b4ff,#aeb3ff,#b5b3ff,#bbb3ff,#c2b3ff,#c8b2ff,#cfb2ff,#d5b2ff,#dbb1ff,#e1b1ff,#e7b1ff,#edb0ff,#f3b0ff,#f9b0ff,#ffafff,#ffabf9,#ffa6f3,#ffa2ee,#ff9ee9,#ff9ae4,#ff97df,#ff93db,#ff90d6,#ff8cd2,#ff89ce,#ff86ca,#ff83c6,#ff7fc2,#ff7cbe,#ff7abb,#ff77b7,#ff74b4,#ff71b0,#ff6ead,#ff6baa,#ff69a6,#ff66a3,#ff63a0,#ff619d,#ff5e9a,#ff5c97,#ff5994,#ff5791,#ff548e,#ff518c,#ff4f89,#ff4c86,#ff4a83,#ff4781,#ff447e,#ff427b,#ff3f78,#ff3c76,#ff3973,#ff3670,#ff346e,#ff306b,#ff2d69,#ff2a66,#ff2663,#ff2260,#ff1e5e,#ff195b,#ff1458,#ff0d56,#ff0453,#ff0051,#ff004f,#ff004d)"></i><i style="left:50px;top:508px;width:510px;background:linear-gradient(90deg,#00d4ff,#00d3ff,#00d3ff,#00d2ff,#00d1ff,#00d0ff,#00cfff,#00cfff,#00ceff,#00cdff,#00ccff,#00cbff,#00c9ff,#00c8ff,#00c7ff,#00c6ff,#00c4ff,#00c2ff,#00c1ff,#00bfff,#00bdff,#00bbff,#00b8ff,#00b6ff,#11b4ff,#33b3ff,#46b3ff,#55b3ff,#62b3ff,#6db2ff,#76b2ff,#80b2ff,#88b2ff,#90b1ff,#98b1ff,#a0b1ff,#a7b1ff,#aeb0ff,#b5b0ff,#bbb0ff,#c2afff,#c8afff,#ceafff,#d4aeff,#dbaeff,#e1aeff,#e7adff,#edadff,#f3acff,#f8acff,#feacff,#ffa8fa,#ffa3f4,#ff9fef,#ff9bea,#ff97e5,#ff94e0,#ff90dc,#ff8dd7,#ff89d3,#ff86cf,#ff83cb,#ff80c7,#ff7dc3,#ff79bf,#ff77bc,#ff74b8,#ff71b5,#ff6eb1,#ff6bae,#ff68ab,#ff66a8,#ff63a4,#ff60a1,#ff5e9e,#ff5b9b,#ff5898,#ff5695,#ff5393,#ff5090,#ff4e8d,#ff4b8a,#ff4987,#ff4685,#ff4382,#ff407f,#ff3e7d,#ff3b7a,#ff3877,#ff3575,#ff3272,#ff2e6f,#ff2b6d,#ff276a,#ff2468,#ff1f65,#ff1b62,#ff1560,#ff0f5d,#ff055a,#ff0058,#ff0056,#ff0055)"></i><i style="left:50px;top:512px;width:500px;background:linear-gradient(90deg,#00d3ff,#00d2ff,#00d1ff,#00d0ff,#00d0ff,#00cfff,#00ceff,#00cdff,#00ccff,#00cbff,#00caff,#00c9ff,#00c8ff,#00c6ff,#00c5ff,#00c4ff,#00c2ff,#00c0ff,#00beff,#00bdff,#00baff,#00b8ff,#00b6ff,#00b3ff,#17b1ff,#36b1ff,#48b0ff,#56b0ff,#62b0ff,#6db0ff,#77afff,#80afff,#88afff,#90aeff,#98aeff,#a0aeff,#a7adff,#aeadff,#b4adff,#bbacff,#c1acff,#c8acff,#ceabff,#d4abff,#daaaff,#e0aaff,#e6aaff,#eca9ff,#f2a9ff,#f8a8ff,#fda8ff,#ffa4fb,#ffa0f5,#ff9cf0,#ff98eb,#ff94e6,#ff91e1,#ff8ddd,#ff8ad8,#ff86d4,#ff83d0,#ff80cc,#ff7dc8,#ff79c4,#ff76c0,#ff73bd,#ff71b9,#ff6eb6,#ff6bb2,#ff68af,#ff65ac,#ff62a9,#ff60a6,#ff5da3,#ff5a9f,#ff589d,#ff559a,#ff5297,#ff5094,#ff4d91,#ff4a8e,#ff478b,#ff4589,#ff4286,#ff3f83,#ff3c81,#ff397e,#ff367b,#ff3379,#ff3076,#ff2c74,#ff2971,#ff256e,#ff216c,#ff1c69,#ff1767,#ff1064,#ff0861,#ff005f,#ff005d,#ff005c)"></i><i style="left:50px;top:516px;width:490px;background:linear-gradient(90deg,#00d1ff,#00d0ff,#00d0ff,#00cfff,#00ceff,#00cdff,#00ccff,#00cbff,#00caff,#00c9ff,#00c8ff,#00c7ff,#00c6ff,#00c4ff,#00c3ff,#00c1ff,#00c0ff,#00beff,#00bcff,#00baff,#00b8ff,#00b6ff,#00b3ff,#00b0ff,#1caeff,#38aeff,#49aeff,#57adff,#63adff,#6eadff,#77acff,#80acff,#89acff,#91abff,#98abff,#9fabff,#a7aaff,#adaaff,#b4aaff,#bba9ff,#c1a9ff,#c7a8ff,#cda8ff,#d3a7ff,#d9a7ff,#dfa7ff,#e5a6ff,#eba6ff,#f1a5ff,#f7a4ff,#fca4ff,#ffa1fc,#ff9df6,#ff99f1,#ff95ec,#ff91e7,#ff8ee2,#ff8ade,#ff87d9,#ff83d5,#ff80d1,#ff7dcd,#ff79c9,#ff76c5,#ff73c2,#ff70be,#ff6dba,#ff6ab7,#ff68b4,#ff65b0,#ff62ad,#ff5faa,#ff5ca7,#ff5aa4,#ff57a1,#ff549e,#ff519b,#ff4f98,#ff4c95,#ff4992,#ff4690,#ff438d,#ff418a,#ff3e87,#ff3b85,#ff3882,#ff347f,#ff317d,#ff2e7a,#ff2a78,#ff2675,#ff2272,#ff1d70,#ff186d,#ff126b,#ff0a68,#ff0066,#ff0064,#ff0062)"></i><i style="left:50px;top:520px;width:485px;background:linear-gradient(90deg,#00d0ff,#00cfff,#00ceff,#00ceff,#00cdff,#00ccff,#00cbff,#00caff,#00c9ff,#00c8ff,#00c6ff,#00c5ff,#00c4ff,#00c2ff,#00c1ff,#00bfff,#00beff,#00bcff,#00baff,#00b8ff,#00b5ff,#00b3ff,#00b0ff,#00adff,#20acff,#39abff,#4babff,#58abff,#64aaff,#6eaaff,#78aaff,#81a9ff,#89a9ff,#91a8ff,#98a8ff,#9fa8ff,#a6a7ff,#ada7ff,#b4a6ff,#baa6ff,#c1a5ff,#c7a5ff,#cda5ff,#d3a4ff,#d9a3ff,#dfa3ff,#e5a2ff,#eaa2ff,#f0a1ff,#f6a1ff,#fca0ff,#ff9efd,#ff9af7,#ff96f2,#ff92ed,#ff8ee8,#ff8ae3,#ff87df,#ff83da,#ff80d6,#ff7dd2,#ff79ce,#ff76ca,#ff73c6,#ff70c3,#ff6dbf,#ff6abc,#ff67b8,#ff64b5,#ff61b1,#ff5eae,#ff5cab,#ff59a8,#ff56a5,#ff53a2,#ff509f,#ff4e9c,#ff4b99,#ff4896,#ff4594,#ff4291,#ff3f8e,#ff3c8b,#ff3989,#ff3686,#ff3283,#ff2f81,#ff2b7e,#ff287c,#ff2379,#ff1f76,#ff1a74,#ff1471,#ff0c6f,#ff026c,#ff006a,#ff0069,#ff0067)"></i><i style="left:50px;top:524px;width:475px;background:linear-gradient(90deg,#00ceff,#00ceff,#00cdff,#00ccff,#00cbff,#00caff,#00c9ff,#00c8ff,#00c7ff,#00c6ff,#00c5ff,#00c3ff,#00c2ff,#00c1ff,#00bfff,#00bdff,#00bcff,#00baff,#00b8ff,#00b5ff,#00b3ff,#00b0ff,#00adff,#00aaff,#23a9ff,#3ba9ff,#4ca8ff,#59a8ff,#64a7ff,#6fa7ff,#78a7ff,#81a6ff,#89a6ff,#91a5ff,#98a5ff,#9fa5ff,#a6a4ff,#ada4ff,#b4a3ff,#baa3ff,#c0a2ff,#c6a2ff,#cca1ff,#d2a1ff,#d8a0ff,#de9fff,#e49fff,#ea9eff,#ef9eff,#f59dff,#fb9cff,#ff9bfe,#ff96f8,#ff92f3,#ff8fee,#ff8be9,#ff87e4,#ff84e0,#ff80db,#ff7dd7,#ff79d3,#ff76cf,#ff73cb,#ff70c7,#ff6dc4,#ff6ac0,#ff67bd,#ff64b9,#ff61b6,#ff5eb3,#ff5baf,#ff58ac,#ff55a9,#ff52a6,#ff4fa3,#ff4ca0,#ff4a9d,#ff479a,#ff4498,#ff4195,#ff3e92,#ff3a8f,#ff378d,#ff348a,#ff3087,#ff2d85,#ff2982,#ff2580,#ff207d,#ff1b7a,#ff1578,#ff0e75,#ff0473,#ff0071,#ff006f,#ff006e)"></i><i style="left:55px;top:528px;width:460px;background:linear-gradient(90deg,#00ccff,#00cbff,#00cbff,#00caff,#00c9ff,#00c8ff,#00c7ff,#00c5ff,#00c4ff,#00c3ff,#00c2ff,#00c0ff,#00bfff,#00bdff,#00bbff,#00b9ff,#00b7ff,#00b5ff,#00b3ff,#00b0ff,#00aeff,#00abff,#00a7ff,#27a6ff,#3da6ff,#4da5ff,#5aa5ff,#65a5ff,#6fa4ff,#78a4ff,#81a3ff,#89a3ff,#91a2ff,#98a2ff,#9fa1ff,#a6a1ff,#ada0ff,#b3a0ff,#ba9fff,#c09fff,#c69eff,#cc9eff,#d29dff,#d89cff,#dd9cff,#e39bff,#e99aff,#ef9aff,#f499ff,#fa98ff,#ff97ff,#ff93f9,#ff8ff4,#ff8bef,#ff87ea,#ff84e5,#ff80e1,#ff7ddc,#ff79d8,#ff76d4,#ff73d0,#ff70cc,#ff6cc9,#ff69c5,#ff66c1,#ff63be,#ff60ba,#ff5db7,#ff5ab4,#ff57b1,#ff54ad,#ff51aa,#ff4ea7,#ff4ba4,#ff48a1,#ff459e,#ff429c,#ff3f99,#ff3c96,#ff3993,#ff3591,#ff328e,#ff2e8b,#ff2a89,#ff2686,#ff2283,#ff1d81,#ff177e,#ff107c,#ff0679,#ff0077,#ff0075,#ff0074)"></i><i style="left:55px;top:532px;width:450px;background:linear-gradient(90deg,#00cbff,#00caff,#00c9ff,#00c8ff,#00c7ff,#00c6ff,#00c5ff,#00c4ff,#00c2ff,#00c1ff,#00c0ff,#00beff,#00bdff,#00bbff,#00b9ff,#00b7ff,#00b5ff,#00b3ff,#00b0ff,#00aeff,#00abff,#00a8ff,#00a4ff,#29a3ff,#3fa3ff,#4ea3ff,#5ba2ff,#66a2ff,#70a1ff,#79a1ff,#81a0ff,#89a0ff,#919fff,#989fff,#9f9eff,#a69eff,#ad9dff,#b39dff,#b99cff,#c09bff,#c69bff,#cb9aff,#d19aff,#d799ff,#dd98ff,#e397ff,#e897ff,#ee96ff,#f395ff,#f994ff,#fe93ff,#ff90fa,#ff8cf5,#ff88f0,#ff84eb,#ff80e6,#ff7de2,#ff79dd,#ff76d9,#ff73d5,#ff6fd1,#ff6ccd,#ff69ca,#ff66c6,#ff63c2,#ff5fbf,#ff5cbb,#ff59b8,#ff56b5,#ff53b2,#ff50af,#ff4dab,#ff4aa8,#ff47a5,#ff44a3,#ff41a0,#ff3e9d,#ff3a9a,#ff3797,#ff3395,#ff3092,#ff2c8f,#ff288d,#ff238a,#ff1e87,#ff1985,#ff1282,#ff0880,#ff007d,#ff007c,#ff007a)"></i><i style="left:55px;top:536px;width:445px;background:linear-gradient(90deg,#00caff,#00c9ff,#00c8ff,#00c7ff,#00c6ff,#00c4ff,#00c3ff,#00c2ff,#00c1ff,#00bfff,#00beff,#00bcff,#00bbff,#00b9ff,#00b7ff,#00b5ff,#00b3ff,#00b0ff,#00aeff,#00abff,#00a8ff,#00a5ff,#00a1ff,#2ca1ff,#40a0ff,#4fa0ff,#5c9fff,#669fff,#709eff,#799eff,#829dff,#8a9dff,#919cff,#989cff,#9f9bff,#a69bff,#ad9aff,#b399ff,#b999ff,#bf98ff,#c597ff,#cb97ff,#d196ff,#d795ff,#dc95ff,#e294ff,#e893ff,#ed92ff,#f391ff,#f890ff,#fe8fff,#ff8cfb,#ff88f6,#ff84f1,#ff80ec,#ff7de7,#ff79e3,#ff76de,#ff72da,#ff6fd6,#ff6cd2,#ff68ce,#ff65cb,#ff62c7,#ff5fc3,#ff5cc0,#ff59bd,#ff55b9,#ff52b6,#ff4fb3,#ff4cb0,#ff49ad,#ff46aa,#ff42a7,#ff3fa4,#ff3ca1,#ff389e,#ff359b,#ff3198,#ff2d96,#ff2993,#ff2590,#ff208e,#ff1a8b,#ff1489,#ff0b86,#ff0084,#ff0082,#ff0080,#ff007e)"></i><i style="left:55px;top:540px;width:435px;background:linear-gradient(90deg,#00c8ff,#00c7ff,#00c6ff,#00c5ff,#00c4ff,#00c3ff,#00c2ff,#00c0ff,#00bfff,#00beff,#00bcff,#00baff,#00b9ff,#00b7ff,#00b5ff,#00b3ff,#00b1ff,#00aeff,#00abff,#00a9ff,#00a5ff,#00a2ff,#079fff,#2f9eff,#429eff,#509dff,#5c9dff,#679cff,#719cff,#7a9bff,#829aff,#8a9aff,#9199ff,#9899ff,#9f98ff,#a697ff,#ac97ff,#b396ff,#b995ff,#bf95ff,#c594ff,#cb93ff,#d092ff,#d692ff,#dc91ff,#e190ff,#e78fff,#ec8eff,#f28dff,#f78cff,#fd8bff,#ff89fc,#ff85f7,#ff81f2,#ff7ded,#ff79e8,#ff76e4,#ff72df,#ff6fdb,#ff6bd7,#ff68d3,#ff65cf,#ff61cc,#ff5ec8,#ff5bc4,#ff58c1,#ff54be,#ff51ba,#ff4eb7,#ff4bb4,#ff48b1,#ff44ae,#ff41ab,#ff3ea8,#ff3aa5,#ff36a2,#ff339f,#ff2f9c,#ff2b9a,#ff2697,#ff2194,#ff1c92,#ff158f,#ff0d8c,#ff018a,#ff0088,#ff0086,#ff0084)"></i><i style="left:60px;top:544px;width:420px;background:linear-gradient(90deg,#00c6ff,#00c5ff,#00c4ff,#00c2ff,#00c1ff,#00c0ff,#00bfff,#00bdff,#00bcff,#00baff,#00b8ff,#00b7ff,#00b5ff,#00b3ff,#00b1ff,#00aeff,#00acff,#00a9ff,#00a6ff,#00a3ff,#009fff,#0f9cff,#319bff,#439bff,#519aff,#5d9aff,#6899ff,#7199ff,#7a98ff,#8297ff,#8a97ff,#9196ff,#9896ff,#9f95ff,#a694ff,#ac94ff,#b293ff,#b992ff,#bf91ff,#c491ff,#ca90ff,#d08fff,#d68eff,#db8dff,#e18cff,#e68bff,#ec8aff,#f189ff,#f688ff,#fc87ff,#ff85fd,#ff81f8,#ff7df3,#ff79ee,#ff75e9,#ff72e5,#ff6ee0,#ff6bdc,#ff67d8,#ff64d4,#ff61d0,#ff5dcd,#ff5ac9,#ff57c5,#ff53c2,#ff50bf,#ff4dbb,#ff49b8,#ff46b5,#ff43b2,#ff3faf,#ff3cac,#ff38a9,#ff34a6,#ff30a3,#ff2ca0,#ff289e,#ff239b,#ff1e98,#ff1795,#ff0f93,#ff0490,#ff008e,#ff008c,#ff008a)"></i><i style="left:60px;top:548px;width:415px;background:linear-gradient(90deg,#00c4ff,#00c3ff,#00c2ff,#00c1ff,#00c0ff,#00beff,#00bdff,#00bbff,#00baff,#00b8ff,#00b7ff,#00b5ff,#00b3ff,#00b1ff,#00aeff,#00acff,#00a9ff,#00a6ff,#00a3ff,#00a0ff,#009cff,#1599ff,#3399ff,#4598ff,#5297ff,#5e97ff,#6896ff,#7296ff,#7a95ff,#8294ff,#8a94ff,#9193ff,#9892ff,#9f92ff,#a691ff,#ac90ff,#b28fff,#b88fff,#be8eff,#c48dff,#ca8cff,#cf8bff,#d58aff,#db89ff,#e088ff,#e687ff,#eb86ff,#f085ff,#f684ff,#fb83ff,#ff81fe,#ff7df9,#ff79f4,#ff75ef,#ff72ea,#ff6ee6,#ff6ae1,#ff67dd,#ff63d9,#ff60d5,#ff5cd1,#ff59ce,#ff56ca,#ff52c6,#ff4fc3,#ff4cc0,#ff48bc,#ff45b9,#ff41b6,#ff3eb3,#ff3ab0,#ff36ad,#ff32aa,#ff2ea7,#ff29a4,#ff25a1,#ff1f9f,#ff199c,#ff1199,#ff0697,#ff0094,#ff0092,#ff0090,#ff008e)"></i><i style="left:60px;top:552px;width:405px;background:linear-gradient(90deg,#00c3ff,#00c2ff,#00c1ff,#00bfff,#00beff,#00bdff,#00bbff,#00baff,#00b8ff,#00b6ff,#00b5ff,#00b3ff,#00b1ff,#00aeff,#00acff,#00a9ff,#00a7ff,#00a4ff,#00a0ff,#009dff,#0099ff,#1a96ff,#3596ff,#4695ff,#5395ff,#5f94ff,#6993ff,#7293ff,#7b92ff,#8391ff,#8a91ff,#9190ff,#988fff,#9f8eff,#a68eff,#ac8dff,#b28cff,#b88bff,#be8aff,#c489ff,#c989ff,#cf88ff,#d587ff,#da86ff,#df84ff,#e583ff,#ea82ff,#f081ff,#f580ff,#fa7fff,#ff7dff,#ff79f9,#ff75f4,#ff71f0,#ff6eeb,#ff6ae7,#ff66e2,#ff63de,#ff5fda,#ff5cd6,#ff58d2,#ff55cf,#ff51cb,#ff4ec7,#ff4ac4,#ff47c1,#ff43bd,#ff3fba,#ff3cb7,#ff38b4,#ff34b1,#ff2fae,#ff2bab,#ff26a8,#ff21a5,#ff1ba3,#ff13a0,#ff099d,#ff009b,#ff0098,#ff0096,#ff0094)"></i><i style="left:60px;top:556px;width:395px;background:linear-gradient(90deg,#00c1ff,#00c0ff,#00bfff,#00beff,#00bcff,#00bbff,#00baff,#00b8ff,#00b6ff,#00b5ff,#00b3ff,#00b1ff,#00afff,#00acff,#00aaff,#00a7ff,#00a4ff,#00a1ff,#009eff,#009aff,#0096ff,#1e94ff,#3793ff,#4792ff,#5492ff,#5f91ff,#6990ff,#7390ff,#7b8fff,#838eff,#8a8eff,#928dff,#988cff,#9f8bff,#a58aff,#ac8aff,#b289ff,#b888ff,#be87ff,#c386ff,#c985ff,#cf84ff,#d483ff,#d982ff,#df81ff,#e47fff,#ea7eff,#ef7dff,#f47cff,#f97aff,#ff79ff,#ff75fa,#ff71f5,#ff6df1,#ff69ec,#ff66e8,#ff62e3,#ff5edf,#ff5bdb,#ff57d7,#ff54d3,#ff50d0,#ff4ccc,#ff49c8,#ff45c5,#ff41c2,#ff3dbe,#ff3abb,#ff35b8,#ff31b5,#ff2db2,#ff28af,#ff23ac,#ff1da9,#ff15a6,#ff0ca4,#ff00a1,#ff009f,#ff009d,#ff009b)"></i><i style="left:65px;top:560px;width:380px;background:linear-gradient(90deg,#00bfff,#00bdff,#00bcff,#00bbff,#00b9ff,#00b8ff,#00b6ff,#00b4ff,#00b3ff,#00b1ff,#00afff,#00acff,#00aaff,#00a7ff,#00a5ff,#00a2ff,#009fff,#009bff,#0097ff,#0093ff,#2191ff,#3990ff,#488fff,#558fff,#608eff,#6a8dff,#738dff,#7b8cff,#838bff,#8b8aff,#928aff,#9889ff,#9f88ff,#a587ff,#ac86ff,#b285ff,#b884ff,#bd83ff,#c382ff,#c981ff,#ce80ff,#d47fff,#d97eff,#de7cff,#e47bff,#e97aff,#ee79ff,#f377ff,#f976ff,#fe74ff,#ff71fb,#ff6df6,#ff69f1,#ff65ed,#ff61e8,#ff5de4,#ff5ae0,#ff56dc,#ff52d8,#ff4fd4,#ff4bd1,#ff47cd,#ff43c9,#ff3fc6,#ff3bc3,#ff37bf,#ff33bc,#ff2fb9,#ff2ab6,#ff24b3,#ff1eb0,#ff17ad,#ff0eaa,#ff01a7,#ff00a5,#ff00a3,#ff00a1)"></i><i style="left:65px;top:564px;width:375px;background:linear-gradient(90deg,#00bdff,#00bcff,#00bbff,#00b9ff,#00b8ff,#00b6ff,#00b4ff,#00b3ff,#00b1ff,#00afff,#00adff,#00aaff,#00a8ff,#00a5ff,#00a2ff,#009fff,#009cff,#0098ff,#0094ff,#0090ff,#258eff,#3a8dff,#4a8dff,#568cff,#618bff,#6b8aff,#738aff,#7c89ff,#8388ff,#8b87ff,#9286ff,#9885ff,#9f85ff,#a584ff,#ab83ff,#b182ff,#b781ff,#bd80ff,#c37eff,#c87dff,#ce7cff,#d37bff,#d87aff,#de78ff,#e377ff,#e876ff,#ed74ff,#f373ff,#f871ff,#fd6fff,#ff6cfc,#ff68f7,#ff64f2,#ff60ee,#ff5de9,#ff59e5,#ff55e1,#ff51dd,#ff4dd9,#ff49d5,#ff45d2,#ff42ce,#ff3dca,#ff39c7,#ff35c4,#ff30c0,#ff2bbd,#ff26ba,#ff20b7,#ff19b4,#ff11b1,#ff04ae,#ff00ac,#ff00a9,#ff00a7,#ff00a5)"></i><i style="left:65px;top:568px;width:365px;background:linear-gradient(90deg,#00bcff,#00baff,#00b9ff,#00b7ff,#00b6ff,#00b4ff,#00b3ff,#00b1ff,#00afff,#00adff,#00abff,#00a8ff,#00a6ff,#00a3ff,#00a0ff,#009dff,#0099ff,#0095ff,#0091ff,#008cff,#278bff,#3c8aff,#4b8aff,#5789ff,#6288ff,#6b87ff,#7487ff,#7c86ff,#8485ff,#8b84ff,#9283ff,#9982ff,#9f81ff,#a580ff,#ab7fff,#b17eff,#b77dff,#bd7cff,#c27bff,#c879ff,#cd78ff,#d377ff,#d876ff,#dd74ff,#e273ff,#e871ff,#ed70ff,#f26eff,#f76cff,#fc6bff,#ff68fd,#ff64f8,#ff60f3,#ff5cef,#ff58ea,#ff54e6,#ff50e2,#ff4cde,#ff48da,#ff44d6,#ff40d2,#ff3bcf,#ff37cb,#ff32c8,#ff2dc5,#ff28c1,#ff22be,#ff1cbb,#ff13b8,#ff07b5,#ff00b2,#ff00b0,#ff00ad,#ff00ab)"></i><i style="left:65px;top:572px;width:355px;background:linear-gradient(90deg,#00baff,#00b9ff,#00b7ff,#00b6ff,#00b4ff,#00b3ff,#00b1ff,#00afff,#00adff,#00abff,#00a8ff,#00a6ff,#00a3ff,#00a0ff,#009dff,#009aff,#0096ff,#0092ff,#008eff,#0089ff,#2a88ff,#3d88ff,#4c87ff,#5886ff,#6285ff,#6c84ff,#7483ff,#7c83ff,#8482ff,#8b81ff,#9280ff,#997fff,#9f7eff,#a57dff,#ab7cff,#b17aff,#b779ff,#bc78ff,#c277ff,#c776ff,#cd74ff,#d273ff,#d771ff,#dd70ff,#e26eff,#e76dff,#ec6bff,#f169ff,#f667ff,#fb65ff,#ff63fe,#ff5ff9,#ff5bf4,#ff56f0,#ff52eb,#ff4ee7,#ff4ae3,#ff46df,#ff42db,#ff3dd7,#ff39d3,#ff34d0,#ff2fcc,#ff2ac9,#ff24c6,#ff1ec2,#ff16bf,#ff0abc,#ff00b9,#ff00b7,#ff00b4,#ff00b2)"></i><i style="left:70px;top:576px;width:345px;background:linear-gradient(90deg,#00b7ff,#00b6ff,#00b4ff,#00b3ff,#00b1ff,#00afff,#00adff,#00abff,#00a9ff,#00a6ff,#00a4ff,#00a1ff,#009eff,#009bff,#0097ff,#0094ff,#008fff,#008bff,#0686ff,#2c85ff,#3f85ff,#4d84ff,#5983ff,#6382ff,#6c81ff,#7580ff,#7d7fff,#847eff,#8b7dff,#927cff,#997bff,#9f7aff,#a579ff,#ab78ff,#b177ff,#b775ff,#bc74ff,#c273ff,#c771ff,#cc70ff,#d26fff,#d76dff,#dc6bff,#e16aff,#e668ff,#eb66ff,#f064ff,#f562ff,#fa60ff,#ff5eff,#ff59fa,#ff55f5,#ff51f0,#ff4dec,#ff48e8,#ff44e4,#ff40e0,#ff3bdc,#ff36d8,#ff31d4,#ff2cd1,#ff26cd,#ff20ca,#ff18c7,#ff0dc3,#ff00c0,#ff00bd,#ff00bb,#ff00b8,#ff00b6)"></i><i style="left:70px;top:580px;width:335px;background:linear-gradient(90deg,#00b6ff,#00b4ff,#00b3ff,#00b1ff,#00afff,#00adff,#00abff,#00a9ff,#00a7ff,#00a4ff,#00a2ff,#009fff,#009cff,#0098ff,#0095ff,#0091ff,#008dff,#0088ff,#0e83ff,#2f82ff,#4082ff,#4e81ff,#5980ff,#637fff,#6d7eff,#757dff,#7d7cff,#847bff,#8b7aff,#9279ff,#9978ff,#9f77ff,#a575ff,#ab74ff,#b173ff,#b672ff,#bc70ff,#c16fff,#c76dff,#cc6cff,#d16aff,#d669ff,#dc67ff,#e165ff,#e663ff,#eb61ff,#f05fff,#f55dff,#fa5bff,#ff58ff,#ff54fa,#ff4ff6,#ff4bf1,#ff47ed,#ff42e9,#ff3de5,#ff39e1,#ff33dd,#ff2ed9,#ff28d5,#ff22d2,#ff1ace,#ff10cb,#ff01c8,#ff00c5,#ff00c2,#ff00bf,#ff00bc)"></i><i style="left:70px;top:584px;width:325px;background:linear-gradient(90deg,#00b4ff,#00b3ff,#00b1ff,#00afff,#00adff,#00abff,#00a9ff,#00a7ff,#00a5ff,#00a2ff,#009fff,#009cff,#0099ff,#0096ff,#0092ff,#008eff,#0089ff,#0084ff,#1480ff,#317fff,#427fff,#4f7eff,#5a7dff,#647cff,#6d7bff,#757aff,#7d79ff,#8478ff,#8b77ff,#9275ff,#9974ff,#9f73ff,#a572ff,#ab70ff,#b06fff,#b66eff,#bc6cff,#c16bff,#c669ff,#cc67ff,#d166ff,#d664ff,#db62ff,#e060ff,#e55eff,#ea5cff,#ef5aff,#f457ff,#f955ff,#fe52ff,#ff4efb,#ff49f7,#ff45f2,#ff40ee,#ff3be9,#ff36e5,#ff30e1,#ff2ade,#ff24da,#ff1cd6,#ff13d3,#ff04cf,#ff00cc,#ff00c9,#ff00c6,#ff00c3)"></i><i style="left:75px;top:588px;width:310px;background:linear-gradient(90deg,#00b1ff,#00afff,#00adff,#00abff,#00a9ff,#00a7ff,#00a5ff,#00a3ff,#00a0ff,#009dff,#009aff,#0097ff,#0093ff,#008fff,#008bff,#0086ff,#0081ff,#197dff,#337cff,#437cff,#507bff,#5b7aff,#6579ff,#6e78ff,#7676ff,#7d75ff,#8574ff,#8c73ff,#9272ff,#9971ff,#9f6fff,#a56eff,#ab6dff,#b06bff,#b66aff,#bb68ff,#c166ff,#c665ff,#cb63ff,#d061ff,#d55fff,#db5dff,#e05bff,#e559ff,#e956ff,#ee54ff,#f351ff,#f84eff,#fd4bff,#ff47fc,#ff42f7,#ff3df3,#ff38ef,#ff33ea,#ff2de6,#ff26e2,#ff1fde,#ff16db,#ff08d7,#ff00d4,#ff00d0,#ff00cd,#ff00ca)"></i><i style="left:75px;top:592px;width:305px;background:linear-gradient(90deg,#00afff,#00adff,#00acff,#00aaff,#00a8ff,#00a5ff,#00a3ff,#00a0ff,#009eff,#009bff,#0098ff,#0094ff,#0091ff,#008dff,#0088ff,#0083ff,#007eff,#1c7aff,#3479ff,#4478ff,#5177ff,#5c76ff,#6575ff,#6e74ff,#7673ff,#7e72ff,#8571ff,#8c6fff,#926eff,#996dff,#9f6bff,#a56aff,#aa69ff,#b067ff,#b665ff,#bb64ff,#c062ff,#c660ff,#cb5eff,#d05cff,#d55aff,#da58ff,#df56ff,#e453ff,#e951ff,#ee4eff,#f34bff,#f748ff,#fc44ff,#ff40fd,#ff3bf8,#ff35f4,#ff2fef,#ff29eb,#ff21e7,#ff18e3,#ff0cdf,#ff00dc,#ff00d8,#ff00d5,#ff00d2,#ff00cf)"></i><i style="left:75px;top:596px;width:295px;background:linear-gradient(90deg,#00aeff,#00acff,#00aaff,#00a8ff,#00a6ff,#00a3ff,#00a1ff,#009eff,#009cff,#0099ff,#0095ff,#0092ff,#008eff,#008aff,#0085ff,#0080ff,#007aff,#2077ff,#3676ff,#4575ff,#5274ff,#5c73ff,#6672ff,#6e71ff,#7670ff,#7e6eff,#856dff,#8c6cff,#926aff,#9969ff,#9f68ff,#a566ff,#aa64ff,#b063ff,#b561ff,#bb5fff,#c05dff,#c55bff,#ca59ff,#d057ff,#d555ff,#da52ff,#de50ff,#e34dff,#e84aff,#ed47ff,#f244ff,#f740ff,#fc3cff,#ff38fe,#ff32f9,#ff2bf5,#ff24f0,#ff1bec,#ff0fe8,#ff00e4,#ff00e0,#ff00dd,#ff00da,#ff00d6)"></i><i style="left:75px;top:600px;width:285px;background:linear-gradient(90deg,#00acff,#00aaff,#00a8ff,#00a6ff,#00a4ff,#00a1ff,#009fff,#009cff,#0099ff,#0096ff,#0093ff,#008fff,#008bff,#0087ff,#0082ff,#007dff,#0077ff,#2374ff,#3873ff,#4772ff,#5371ff,#5d70ff,#666fff,#6f6dff,#776cff,#7e6bff,#8569ff,#8c68ff,#9267ff,#9965ff,#9f63ff,#a562ff,#aa60ff,#b05eff,#b55dff,#bb5bff,#c059ff,#c556ff,#ca54ff,#cf52ff,#d44fff,#d94dff,#de4aff,#e347ff,#e844ff,#ec40ff,#f13cff,#f638ff,#fb33ff,#ff2efe,#ff26fa,#ff1ef5,#ff12f1,#ff01ed,#ff00e9,#ff00e5,#ff00e2,#ff00de)"></i><i style="left:80px;top:604px;width:270px;background:linear-gradient(90deg,#00a8ff,#00a6ff,#00a4ff,#00a2ff,#009fff,#009dff,#009aff,#0097ff,#0094ff,#0090ff,#008dff,#0088ff,#0084ff,#007fff,#0079ff,#0073ff,#2671ff,#3970ff,#486fff,#546eff,#5e6cff,#676bff,#6f6aff,#7768ff,#7f67ff,#8566ff,#8c64ff,#9363ff,#9961ff,#9f5fff,#a45eff,#aa5cff,#b05aff,#b558ff,#ba56ff,#c054ff,#c551ff,#ca4fff,#cf4cff,#d449ff,#d946ff,#dd43ff,#e240ff,#e73cff,#ec38ff,#f133ff,#f52eff,#fa28ff,#ff20ff,#ff16fb,#ff05f6,#ff00f2,#ff00ee,#ff00ea,#ff00e6)"></i><i style="left:80px;top:608px;width:265px;background:linear-gradient(90deg,#00a7ff,#00a5ff,#00a2ff,#00a0ff,#009dff,#009bff,#0098ff,#0095ff,#0092ff,#008eff,#008aff,#0086ff,#0081ff,#007cff,#0076ff,#006fff,#286eff,#3b6dff,#496bff,#546aff,#5e69ff,#6868ff,#7066ff,#7865ff,#7f63ff,#8662ff,#8c60ff,#935eff,#995dff,#9f5bff,#a459ff,#aa57ff,#af55ff,#b553ff,#ba51ff,#bf4eff,#c44cff,#c949ff,#ce46ff,#d343ff,#d840ff,#dd3cff,#e238ff,#e633ff,#eb2eff,#f028ff,#f521ff,#f918ff,#fe09ff,#ff00fb,#ff00f7,#ff00f3,#ff00ef,#ff00eb)"></i><i style="left:80px;top:612px;width:255px;background:linear-gradient(90deg,#00a5ff,#00a3ff,#00a0ff,#009eff,#009bff,#0099ff,#0096ff,#0093ff,#008fff,#008bff,#0087ff,#0083ff,#007eff,#0078ff,#0072ff,#056cff,#2a6bff,#3c69ff,#4a68ff,#5567ff,#5f65ff,#6864ff,#7062ff,#7861ff,#7f5fff,#865eff,#8c5cff,#935aff,#9958ff,#9f56ff,#a454ff,#aa52ff,#af50ff,#b54eff,#ba4bff,#bf48ff,#c446ff,#c943ff,#ce3fff,#d33cff,#d838ff,#dc33ff,#e12fff,#e629ff,#eb22ff,#ef1aff,#f40dff,#f900ff,#fd00ff,#ff00fc,#ff00f8,#ff00f4)"></i><i style="left:85px;top:616px;width:240px;background:linear-gradient(90deg,#00a1ff,#009fff,#009cff,#0099ff,#0097ff,#0094ff,#0090ff,#008dff,#0089ff,#0085ff,#0080ff,#007bff,#0075ff,#006fff,#0d68ff,#2d67ff,#3e66ff,#4b65ff,#5663ff,#6062ff,#6960ff,#715fff,#785dff,#7f5bff,#865aff,#8d58ff,#9356ff,#9954ff,#9f52ff,#a44fff,#aa4dff,#af4bff,#b448ff,#ba45ff,#bf42ff,#c43fff,#c93cff,#ce38ff,#d234ff,#d72fff,#dc29ff,#e123ff,#e51bff,#ea0fff,#ef00ff,#f300ff,#f800ff,#fd00ff,#ff00fd)"></i><i style="left:85px;top:620px;width:235px;background:linear-gradient(90deg,#009fff,#009dff,#009aff,#0097ff,#0094ff,#0091ff,#008eff,#008aff,#0086ff,#0082ff,#007dff,#0078ff,#0072ff,#006bff,#1365ff,#2f64ff,#3f62ff,#4c61ff,#575fff,#605eff,#695cff,#715bff,#7859ff,#8057ff,#8655ff,#8d53ff,#9351ff,#994fff,#9f4dff,#a44aff,#aa48ff,#af45ff,#b442ff,#b93fff,#be3bff,#c338ff,#c834ff,#cd2fff,#d22aff,#d724ff,#db1cff,#e012ff,#e500ff,#ea00ff,#ee00ff,#f300ff,#f700ff,#fc00ff)"></i><i style="left:85px;top:624px;width:225px;background:linear-gradient(90deg,#009dff,#009bff,#0098ff,#0095ff,#0092ff,#008fff,#008cff,#0088ff,#0084ff,#007fff,#007aff,#0074ff,#006eff,#0067ff,#1762ff,#3060ff,#405fff,#4d5dff,#585cff,#615aff,#6a58ff,#7156ff,#7955ff,#8053ff,#8651ff,#8d4eff,#934cff,#994aff,#9f47ff,#a445ff,#aa42ff,#af3fff,#b43bff,#b938ff,#be34ff,#c32fff,#c82aff,#cd25ff,#d21dff,#d614ff,#db04ff,#e000ff,#e500ff,#e900ff,#ee00ff,#f200ff)"></i><i style="left:90px;top:628px;width:210px;background:linear-gradient(90deg,#0099ff,#0096ff,#0093ff,#0090ff,#008dff,#0089ff,#0085ff,#0081ff,#007cff,#0077ff,#0071ff,#006aff,#0063ff,#1b5eff,#325cff,#425bff,#4e59ff,#5858ff,#6256ff,#6a54ff,#7252ff,#7950ff,#804eff,#874cff,#8d49ff,#9347ff,#9944ff,#9e41ff,#a43eff,#a93bff,#af38ff,#b434ff,#b930ff,#be2bff,#c325ff,#c81eff,#cc16ff,#d107ff,#d600ff,#db00ff,#e000ff,#e400ff,#e900ff)"></i><i style="left:90px;top:632px;width:200px;background:linear-gradient(90deg,#0097ff,#0094ff,#0091ff,#008eff,#008aff,#0087ff,#0083ff,#007eff,#0079ff,#0074ff,#006eff,#0067ff,#005fff,#1e5aff,#3459ff,#4357ff,#4f55ff,#5953ff,#6252ff,#6a50ff,#724dff,#794bff,#8049ff,#8747ff,#8d44ff,#9341ff,#993eff,#9e3bff,#a438ff,#a934ff,#af30ff,#b42bff,#b926ff,#be1fff,#c317ff,#c70bff,#cc00ff,#d100ff,#d600ff,#db00ff,#e000ff)"></i><i style="left:95px;top:636px;width:190px;background:linear-gradient(90deg,#0092ff,#008fff,#008cff,#0088ff,#0084ff,#0080ff,#007bff,#0076ff,#0070ff,#006aff,#0063ff,#005aff,#2156ff,#3655ff,#4453ff,#5051ff,#5a4fff,#634dff,#6b4bff,#7349ff,#7a46ff,#8044ff,#8741ff,#8d3eff,#933bff,#9938ff,#9e34ff,#a430ff,#a92cff,#ae26ff,#b320ff,#b819ff,#bd0dff,#c200ff,#c700ff,#cc00ff,#d100ff,#d600ff,#db00ff)"></i><i style="left:95px;top:640px;width:180px;background:linear-gradient(90deg,#0090ff,#008dff,#0089ff,#0086ff,#0082ff,#007dff,#0078ff,#0073ff,#006dff,#0066ff,#005fff,#0055ff,#2452ff,#3751ff,#454fff,#514dff,#5a4aff,#6348ff,#6b46ff,#7343ff,#7a41ff,#813eff,#873bff,#8d38ff,#9334ff,#9930ff,#9e2cff,#a427ff,#a921ff,#ae1aff,#b310ff,#b800ff,#be00ff,#c300ff,#c800ff,#cd00ff,#d100ff)"></i><i style="left:95px;top:644px;width:170px;background:linear-gradient(90deg,#008eff,#008bff,#0087ff,#0083ff,#007fff,#007bff,#0076ff,#0070ff,#006aff,#0063ff,#005aff,#0050ff,#264eff,#394cff,#464aff,#5148ff,#5b46ff,#6443ff,#6c41ff,#733eff,#7a3bff,#8138ff,#8734ff,#8d30ff,#932cff,#9927ff,#9e22ff,#a41bff,#a912ff,#ae03ff,#b400ff,#b900ff,#be00ff,#c300ff,#c800ff)"></i><i style="left:100px;top:648px;width:160px;background:linear-gradient(90deg,#0088ff,#0085ff,#0081ff,#007cff,#0078ff,#0073ff,#006dff,#0066ff,#005fff,#0056ff,#054cff,#294aff,#3a48ff,#4745ff,#5243ff,#5c40ff,#643eff,#6c3bff,#7438ff,#7b34ff,#8131ff,#872cff,#8d28ff,#9322ff,#991cff,#9e13ff,#a406ff,#a900ff,#af00ff,#b400ff,#b900ff,#bf00ff,#c400ff)"></i><i style="left:100px;top:652px;width:150px;background:linear-gradient(90deg,#0086ff,#0082ff,#007eff,#007aff,#0075ff,#006fff,#0069ff,#0062ff,#005aff,#0051ff,#0c47ff,#2b45ff,#3b43ff,#4840ff,#533eff,#5c3bff,#6538ff,#6d34ff,#7431ff,#7b2dff,#8128ff,#8823ff,#8e1dff,#9315ff,#9909ff,#9f00ff,#a400ff,#aa00ff,#b000ff,#b500ff,#ba00ff)"></i><i style="left:105px;top:656px;width:135px;background:linear-gradient(90deg,#0080ff,#007cff,#0077ff,#0072ff,#006cff,#0066ff,#005fff,#0056ff,#004cff,#1242ff,#2d40ff,#3d3dff,#493bff,#5438ff,#5d34ff,#6531ff,#6d2dff,#7429ff,#7b24ff,#821eff,#8816ff,#8e0cff,#9400ff,#9a00ff,#a000ff,#a600ff,#ab00ff,#b000ff)"></i><i style="left:105px;top:660px;width:125px;background:linear-gradient(90deg,#007dff,#0079ff,#0074ff,#006fff,#0069ff,#0062ff,#005bff,#0052ff,#0046ff,#163dff,#2f3bff,#3e38ff,#4a35ff,#5531ff,#5e2dff,#6629ff,#6e24ff,#751fff,#7b18ff,#820eff,#8800ff,#8f00ff,#9500ff,#9b00ff,#a100ff,#a600ff)"></i><i style="left:110px;top:664px;width:115px;background:linear-gradient(90deg,#0076ff,#0071ff,#006cff,#0066ff,#005fff,#0056ff,#004dff,#0040ff,#1a38ff,#3035ff,#3f31ff,#4b2eff,#5529ff,#5e25ff,#661fff,#6e19ff,#7510ff,#7c02ff,#8300ff,#8a00ff,#9000ff,#9600ff,#9c00ff,#a200ff)"></i><i style="left:110px;top:668px;width:105px;background:linear-gradient(90deg,#0074ff,#006fff,#0069ff,#0062ff,#005bff,#0052ff,#0047ff,#003aff,#1d31ff,#322eff,#402aff,#4c25ff,#5620ff,#5f1aff,#6712ff,#6e05ff,#7600ff,#7e00ff,#8500ff,#8b00ff,#9200ff,#9800ff)"></i><i style="left:115px;top:672px;width:90px;background:linear-gradient(90deg,#006cff,#0065ff,#005fff,#0057ff,#004dff,#0042ff,#0032ff,#202aff,#3426ff,#4221ff,#4d1bff,#5713ff,#5f07ff,#6800ff,#7100ff,#7800ff,#8000ff,#8600ff,#8d00ff)"></i><i style="left:120px;top:676px;width:75px;background:linear-gradient(90deg,#0062ff,#005bff,#0052ff,#0048ff,#003cff,#0029ff,#2221ff,#351cff,#4315ff,#4e0aff,#5800ff,#6200ff,#6b00ff,#7300ff,#7a00ff,#8200ff)"></i><i style="left:125px;top:680px;width:65px;background:linear-gradient(90deg,#0057ff,#004eff,#0043ff,#0035ff,#001eff,#2516ff,#370cff,#4400ff,#5100ff,#5b00ff,#6500ff,#6d00ff,#7500ff,#7d00ff)"></i><i style="left:130px;top:684px;width:50px;background:linear-gradient(90deg,#0049ff,#003dff,#002cff,#040eff,#2701ff,#3b00ff,#4900ff,#5500ff,#5f00ff,#6800ff,#7000ff)"></i><i style="left:135px;top:688px;width:35px;background:linear-gradient(90deg,#0037ff,#0022ff,#1200ff,#3000ff,#4100ff,#4e00ff,#5800ff,#6200ff)"></i><i style="left:140px;top:692px;width:25px;background:linear-gradient(90deg,#0015ff,#2000ff,#3600ff,#4500ff,#5100ff,#5c00ff)"></i></div><svg class="r" style="left:0;top:0" width="620" height="700"><path fill-rule="evenodd" fill="#000" fill-opacity="0.5" d="M-5 -5H700V800H-5Z M569.42 439.44 L192.16 147.22 L123.65 628.48Z"/></svg></div>
<svg class="r" style="left:0;top:0" width="2048" height="1152"><path d="M1439.42 564.44 L1062.16 272.22 L993.65 753.48Z" fill="none" stroke="#000" stroke-opacity="0.55" stroke-width="1"/><circle cx="1439.4" cy="564.4" r="4.6" fill="none" stroke="#a01020" stroke-width="1"/><circle cx="1439.4" cy="564.4" r="3.6" fill="none" stroke="#600010" stroke-width="1.3"/><circle cx="1062.2" cy="272.2" r="4.6" fill="none" stroke="#30d030" stroke-width="1"/><circle cx="1062.2" cy="272.2" r="3.6" fill="none" stroke="#0a4a10" stroke-width="1.3"/><circle cx="993.6" cy="753.5" r="4.6" fill="none" stroke="#1a2aff" stroke-width="1"/><circle cx="993.6" cy="753.5" r="3.6" fill="none" stroke="#000a70" stroke-width="1.3"/></svg>
<div class="t" style="left:853.6px;top:819.8px;font-size:11.43px;color:#b9b9b9;">0</div>
<div class="t" style="left:844.1px;top:737.2px;font-size:11.43px;color:#b9b9b9;">0.1</div>
<div class="t" style="left:844.1px;top:654.7px;font-size:11.43px;color:#b9b9b9;">0.2</div>
<div class="t" style="left:844.1px;top:572.1px;font-size:11.43px;color:#b9b9b9;">0.3</div>
<div class="t" style="left:844.1px;top:489.6px;font-size:11.43px;color:#b9b9b9;">0.4</div>
<div class="t" style="left:844.1px;top:407.0px;font-size:11.43px;color:#b9b9b9;">0.5</div>
<div class="t" style="left:844.1px;top:324.5px;font-size:11.43px;color:#b9b9b9;">0.6</div>
<div class="t" style="left:844.1px;top:241.9px;font-size:11.43px;color:#b9b9b9;">0.7</div>
<div class="t" style="left:844.1px;top:159.4px;font-size:11.43px;color:#b9b9b9;">0.8</div>
<div class="t" style="left:874.6px;top:828.8px;font-size:11.43px;color:#b9b9b9;">0</div>
<div class="t" style="left:952.4px;top:828.8px;font-size:11.43px;color:#b9b9b9;">0.1</div>
<div class="t" style="left:1034.9px;top:828.8px;font-size:11.43px;color:#b9b9b9;">0.2</div>
<div class="t" style="left:1117.5px;top:828.8px;font-size:11.43px;color:#b9b9b9;">0.3</div>
<div class="t" style="left:1200.0px;top:828.8px;font-size:11.43px;color:#b9b9b9;">0.4</div>
<div class="t" style="left:1282.6px;top:828.8px;font-size:11.43px;color:#b9b9b9;">0.5</div>
<div class="t" style="left:1365.1px;top:828.8px;font-size:11.43px;color:#b9b9b9;">0.6</div>
<div class="t" style="left:1447.7px;top:828.8px;font-size:11.43px;color:#b9b9b9;">0.7</div>
<div class="t" style="left:1287.4px;top:468.2px;font-size:10.71px;color:#3a4654;">2000</div>
<div class="t" style="left:1212.8px;top:475.7px;font-size:10.71px;color:#3a4654;">3000</div>
<div class="t" style="left:1166.5px;top:498.4px;font-size:10.71px;color:#3a4654;">4000</div>
<div class="t" style="left:1137.2px;top:519.2px;font-size:10.71px;color:#3a4654;">5000</div>
<div class="t" style="left:1118.2px;top:535.5px;font-size:10.71px;color:#3a4654;">6000</div>
<div class="t" style="left:1105.3px;top:548.1px;font-size:10.71px;color:#3a4654;">7000</div>
<div class="t" style="left:1096.1px;top:557.8px;font-size:10.71px;color:#3a4654;">8000</div>
<div class="t" style="left:1078.2px;top:571.4px;font-size:10.71px;color:#3a4654;">10000</div>
<svg class="r" style="left:0;top:0" width="2048" height="1152"><path d="M1104.90 588.88 L1105.77 587.82 L1106.67 586.74 L1107.60 585.63 L1108.56 584.49 L1109.55 583.32 L1110.57 582.12 L1111.62 580.90 L1112.70 579.64 L1113.82 578.36 L1114.97 577.05 L1116.16 575.70 L1117.39 574.33 L1118.65 572.92 L1119.95 571.49 L1121.29 570.02 L1122.68 568.53 L1124.10 567.00 L1125.57 565.45 L1127.09 563.86 L1128.64 562.24 L1130.25 560.60 L1131.90 558.92 L1133.61 557.21 L1135.36 555.48 L1137.16 553.72 L1139.02 551.93 L1140.93 550.12 L1142.90 548.28 L1144.92 546.42 L1146.99 544.54 L1149.13 542.63 L1151.32 540.71 L1153.58 538.76 L1155.89 536.80 L1158.27 534.83 L1160.70 532.84 L1163.20 530.84 L1165.77 528.83 L1168.39 526.82 L1171.08 524.80 L1173.84 522.78 L1176.66 520.77 L1179.54 518.76 L1182.49 516.75 L1185.50 514.76 L1188.57 512.77 L1191.76 510.76 L1194.95 508.79 L1198.20 506.84 L1201.48 504.94 L1204.82 503.07 L1208.20 501.25 L1211.63 499.47 L1215.10 497.74 L1218.62 496.07 L1222.18 494.45 L1225.79 492.89 L1229.44 491.40 L1233.13 489.98 L1236.86 488.63 L1240.62 487.35 L1244.43 486.16 L1248.27 485.04 L1252.14 484.02 L1256.05 483.08 L1259.98 482.24 L1263.94 481.49 L1267.93 480.85 L1271.93 480.30 L1275.96 479.87 L1279.99 479.53 L1284.04 479.31 L1288.09 479.20 L1292.14 479.20 L1296.18 479.30 L1300.22 479.51 L1304.24 479.84 L1308.24 480.29 L1312.21 480.85" fill="none" stroke="#3c4448" stroke-opacity="0.85" stroke-width="1"/><line x1="1312.2" y1="480.8" x2="1312.7" y2="477.9" stroke="#3c4448" stroke-width="1"/><line x1="1237.6" y1="488.4" x2="1236.7" y2="485.5" stroke="#3c4448" stroke-width="1"/><line x1="1191.4" y1="511.0" x2="1189.8" y2="508.5" stroke="#3c4448" stroke-width="1"/><line x1="1162.0" y1="531.8" x2="1160.2" y2="529.4" stroke="#3c4448" stroke-width="1"/><line x1="1143.1" y1="548.1" x2="1141.0" y2="545.9" stroke="#3c4448" stroke-width="1"/><line x1="1130.2" y1="560.7" x2="1128.0" y2="558.6" stroke="#3c4448" stroke-width="1"/><line x1="1121.0" y1="570.4" x2="1118.8" y2="568.4" stroke="#3c4448" stroke-width="1"/><line x1="1109.0" y1="584.0" x2="1106.7" y2="582.1" stroke="#3c4448" stroke-width="1"/><circle cx="1135.4" cy="550.4" r="3.6" fill="none" stroke="#111" stroke-width="1.3"/></svg>
<div class="r" style="left:323px;top:870px;width:1723px;height:256px;background:#1b1e23;border:1px solid #45484d;box-sizing:border-box"></div>
<div class="r" style="left:324px;top:897px;width:1721px;height:1px;background:#45484d"></div>
<div class="t" style="left:329.0px;top:877.9px;font-size:14.29px;color:#ececec;font-weight:bold;transform:scaleX(0.804);">COLOUR TARGETS</div>
<div class="r" style="left:657px;top:898px;width:1px;height:227px;background:#3a3d42"></div>
<div class="r" style="left:862px;top:898px;width:1px;height:227px;background:#3a3d42"></div>
<div class="r" style="left:1008px;top:898px;width:1px;height:227px;background:#3a3d42"></div>
<div class="r" style="left:1191px;top:898px;width:1px;height:227px;background:#3a3d42"></div>
<div class="t" style="left:332.0px;top:914.8px;font-size:14.71px;color:#dcdcdc;transform:scaleX(0.875);">Luminance</div>
<div class="t" style="left:332.0px;top:973.0px;font-size:14.71px;color:#dcdcdc;transform:scaleX(0.890);">Colour Temperature</div>
<div class="r" style="left:339px;top:948px;width:214px;height:4px;background:#2b80d5;border-radius:2px"></div>
<div class="r" style="left:545px;top:943px;width:15px;height:15px;background:#2b80d5;border-radius:50%"></div>
<div class="r" style="left:339px;top:1006px;width:107px;height:4px;background:#2b80d5;border-radius:2px"></div>
<div class="r" style="left:446px;top:1006px;width:107px;height:4px;background:#d9d9d9;border-radius:2px"></div>
<div class="r" style="left:438.5px;top:1000.5px;width:15px;height:15px;background:#2b80d5;border-radius:50%"></div>
<div class="r" style="left:568px;top:941px;width:71px;height:19px;border:1.6px solid #c9cacc;border-radius:3px;box-sizing:border-box"></div>
<div class="t" style="left:573.0px;top:944.6px;font-size:11.71px;color:#e2e2e2;transform:scaleX(1.036);">4000</div>
<svg class="r" style="left:623px;top:944.5px" width="10" height="12" viewBox="0 0 10 12"><path d="M1.5 5L5 1.5L8.5 5Z" fill="#2f7fd6" fill-opacity="0.35"/><path d="M1.5 7L5 10.5L8.5 7Z" fill="#2f7fd6" fill-opacity="1"/></svg>
<div class="r" style="left:568px;top:998px;width:71px;height:19px;border:1.6px solid #c9cacc;border-radius:3px;box-sizing:border-box"></div>
<div class="t" style="left:573.0px;top:1001.6px;font-size:11.71px;color:#e2e2e2;transform:scaleX(0.945);">6500K</div>
<svg class="r" style="left:623px;top:1001.5px" width="10" height="12" viewBox="0 0 10 12"><path d="M1.5 5L5 1.5L8.5 5Z" fill="#2f7fd6" fill-opacity="1"/><path d="M1.5 7L5 10.5L8.5 7Z" fill="#2f7fd6" fill-opacity="1"/></svg>
<div class="t" style="left:742.5px;top:913.8px;font-size:11.71px;color:#dcdcdc;transform:scaleX(0.870);">X</div>
<div class="t" style="left:810.0px;top:913.8px;font-size:11.71px;color:#dcdcdc;transform:scaleX(0.870);">Y</div>
<div class="t" style="left:677.0px;top:940.4px;font-size:12.29px;color:#dcdcdc;transform:scaleX(0.865);">Red</div>
<div class="t" style="left:676.5px;top:967.6px;font-size:12.29px;color:#dcdcdc;transform:scaleX(0.893);">Green</div>
<div class="t" style="left:677.0px;top:995.6px;font-size:12.29px;color:#dcdcdc;transform:scaleX(0.854);">Blue</div>
<div class="r" style="left:716px;top:936.5px;width:60px;height:19.399999999999977px;border:1.6px solid #c9cacc;border-radius:3px;box-sizing:border-box"></div>
<div class="t" style="left:720.0px;top:940.3px;font-size:11.71px;color:#e2e2e2;transform:scaleX(0.921);">0.681</div>
<svg class="r" style="left:760px;top:940.2px" width="10" height="12" viewBox="0 0 10 12"><path d="M1.5 5L5 1.5L8.5 5Z" fill="#2f7fd6" fill-opacity="0.35"/><path d="M1.5 7L5 10.5L8.5 7Z" fill="#2f7fd6" fill-opacity="1"/></svg>
<div class="r" style="left:784px;top:936.5px;width:60px;height:19.399999999999977px;border:1.6px solid #c9cacc;border-radius:3px;box-sizing:border-box"></div>
<div class="t" style="left:788.0px;top:940.3px;font-size:11.71px;color:#e2e2e2;transform:scaleX(0.921);">0.312</div>
<svg class="r" style="left:828px;top:940.2px" width="10" height="12" viewBox="0 0 10 12"><path d="M1.5 5L5 1.5L8.5 5Z" fill="#2f7fd6" fill-opacity="1"/><path d="M1.5 7L5 10.5L8.5 7Z" fill="#2f7fd6" fill-opacity="1"/></svg>
<div class="r" style="left:716px;top:964.2px;width:60px;height:19.399999999999977px;border:1.6px solid #c9cacc;border-radius:3px;box-sizing:border-box"></div>
<div class="t" style="left:720.0px;top:968.0px;font-size:11.71px;color:#e2e2e2;transform:scaleX(0.921);">0.224</div>
<svg class="r" style="left:760px;top:967.9000000000001px" width="10" height="12" viewBox="0 0 10 12"><path d="M1.5 5L5 1.5L8.5 5Z" fill="#2f7fd6" fill-opacity="1"/><path d="M1.5 7L5 10.5L8.5 7Z" fill="#2f7fd6" fill-opacity="1"/></svg>
<div class="r" style="left:784px;top:964.2px;width:60px;height:19.399999999999977px;border:1.6px solid #c9cacc;border-radius:3px;box-sizing:border-box"></div>
<div class="t" style="left:788.0px;top:968.0px;font-size:11.71px;color:#e2e2e2;transform:scaleX(0.921);">0.666</div>
<svg class="r" style="left:828px;top:967.9000000000001px" width="10" height="12" viewBox="0 0 10 12"><path d="M1.5 5L5 1.5L8.5 5Z" fill="#2f7fd6" fill-opacity="0.35"/><path d="M1.5 7L5 10.5L8.5 7Z" fill="#2f7fd6" fill-opacity="1"/></svg>
<div class="r" style="left:716px;top:992.2px;width:60px;height:19.399999999999977px;border:1.6px solid #c9cacc;border-radius:3px;box-sizing:border-box"></div>
<div class="t" style="left:720.0px;top:996.0px;font-size:11.71px;color:#e2e2e2;transform:scaleX(0.921);">0.141</div>
<svg class="r" style="left:760px;top:995.9000000000001px" width="10" height="12" viewBox="0 0 10 12"><path d="M1.5 5L5 1.5L8.5 5Z" fill="#2f7fd6" fill-opacity="1"/><path d="M1.5 7L5 10.5L8.5 7Z" fill="#2f7fd6" fill-opacity="0.35"/></svg>
<div class="r" style="left:784px;top:992.2px;width:60px;height:19.399999999999977px;border:1.6px solid #c9cacc;border-radius:3px;box-sizing:border-box"></div>
<div class="t" style="left:788.0px;top:996.0px;font-size:11.71px;color:#e2e2e2;transform:scaleX(0.921);">0.083</div>
<svg class="r" style="left:828px;top:995.9000000000001px" width="10" height="12" viewBox="0 0 10 12"><path d="M1.5 5L5 1.5L8.5 5Z" fill="#2f7fd6" fill-opacity="1"/><path d="M1.5 7L5 10.5L8.5 7Z" fill="#2f7fd6" fill-opacity="0.35"/></svg>
<div class="r" style="left:716px;top:1098.5px;width:82px;height:19.4px;border:1.6px solid #c9cacc;border-radius:3px;box-sizing:border-box"></div>
<div class="t" style="left:720.5px;top:1102.2px;font-size:12.29px;color:#e2e2e2;transform:scaleX(0.899);">Reset to Limits</div>
<div class="t" style="left:877.4px;top:906.0px;font-size:13.43px;color:#dcdcdc;transform:scaleX(0.985);">Calibration Mode</div>
<div class="r" style="left:881px;top:934.5px;width:109px;height:19px;border:1.6px solid #c9cacc;border-radius:3px;box-sizing:border-box"></div>
<div class="t" style="left:885.5px;top:938.2px;font-size:12.29px;color:#e2e2e2;transform:scaleX(0.863);">Calibrated</div>
<svg class="r" style="left:975px;top:940px" width="10" height="8" viewBox="0 0 10 8"><path d="M1.5 2.5H8.5L5 6Z" fill="#2f7fd6"/></svg>
<div class="t" style="left:1023.5px;top:906.1px;font-size:13.43px;color:#dcdcdc;transform:scaleX(0.978);">Display Options</div>
<div class="r" style="left:1027px;top:938.5px;width:13.3px;height:13.3px;background:#2b80d5;border-radius:2.5px"></div>
<svg class="r" style="left:1027px;top:938.5px" width="14" height="14" viewBox="0 0 14 14"><path d="M3.3 7.2L5.8 9.6L10.5 4.4" fill="none" stroke="#fff" stroke-width="1.7"/></svg>
<div class="t" style="left:1047.6px;top:939.3px;font-size:12.00px;color:#dcdcdc;transform:scaleX(0.904);">Show Gamut Outlines</div>
<div class="r" style="left:1027px;top:968.4px;width:13.3px;height:13.3px;background:#2b80d5;border-radius:2.5px"></div>
<svg class="r" style="left:1027px;top:968.4px" width="14" height="14" viewBox="0 0 14 14"><path d="M3.3 7.2L5.8 9.6L10.5 4.4" fill="none" stroke="#fff" stroke-width="1.7"/></svg>
<div class="t" style="left:1047.6px;top:969.2px;font-size:12.00px;color:#dcdcdc;transform:scaleX(0.887);">Show Black Body Curves</div>
<div class="t" style="left:997.3px;top:1133.6px;font-size:12.29px;color:#cfcfcf;transform:scaleX(0.911);">Used fixtures:</div>
<div class="r" style="left:1074.3px;top:1129.8px;width:26.200000000000045px;height:18.8px;border:1px solid #4a4d52;box-sizing:border-box"></div>
<div class="t" style="left:1078.3px;top:1133.6px;font-size:12.29px;color:#e2e2e2;transform:scaleX(0.976);">132</div>
<div class="t" style="left:1167.4px;top:1133.6px;font-size:12.29px;color:#cfcfcf;transform:scaleX(0.871);">Mapped pixels:</div>
<div class="r" style="left:1248px;top:1129.8px;width:39.5px;height:18.8px;border:1px solid #4a4d52;box-sizing:border-box"></div>
<div class="t" style="left:1252.0px;top:1133.6px;font-size:12.29px;color:#e2e2e2;transform:scaleX(0.962);">11892</div>
<div class="t" style="left:1354.0px;top:1133.6px;font-size:12.29px;color:#cfcfcf;transform:scaleX(0.891);">Project pixel pitch:</div>
<div class="r" style="left:1452px;top:1129.8px;width:54px;height:18.8px;border:1px solid #4a4d52;box-sizing:border-box"></div>
<div class="t" style="left:1456.0px;top:1133.6px;font-size:12.29px;color:#e2e2e2;transform:scaleX(0.898);">10.00mm</div>
<div class="t" style="left:1572.0px;top:1133.6px;font-size:12.29px;color:#cfcfcf;transform:scaleX(0.883);">Active pixels:</div>
<div class="r" style="left:1644px;top:1129.8px;width:39px;height:18.8px;border:1px solid #4a4d52;box-sizing:border-box"></div>
<div class="t" style="left:1648.0px;top:1133.6px;font-size:12.29px;color:#e2e2e2;transform:scaleX(0.962);">11892</div>
<div class="t" style="left:1749.3px;top:1133.6px;font-size:12.29px;color:#cfcfcf;transform:scaleX(0.892);">Workspace Area:</div>
<div class="r" style="left:1841px;top:1129.8px;width:93px;height:18.8px;border:1px solid #4a4d52;box-sizing:border-box"></div>
<div class="t" style="left:1845.0px;top:1133.6px;font-size:12.29px;color:#e2e2e2;transform:scaleX(0.866);">12.8 X 7.2 meters</div>
<div class="r" style="left:2006.5px;top:1133px;width:13px;height:13px;background:#1ea672;border-radius:50%"></div>
<svg class="r" style="left:2029px;top:1131px" width="16" height="18" viewBox="0 0 16 18"><path d="M4 2H12V4H11V9L13 11V12H9V16L8 17L7 16V12H3V11L5 9V4H4Z" fill="#8e9094"/></svg>
</body></html>
